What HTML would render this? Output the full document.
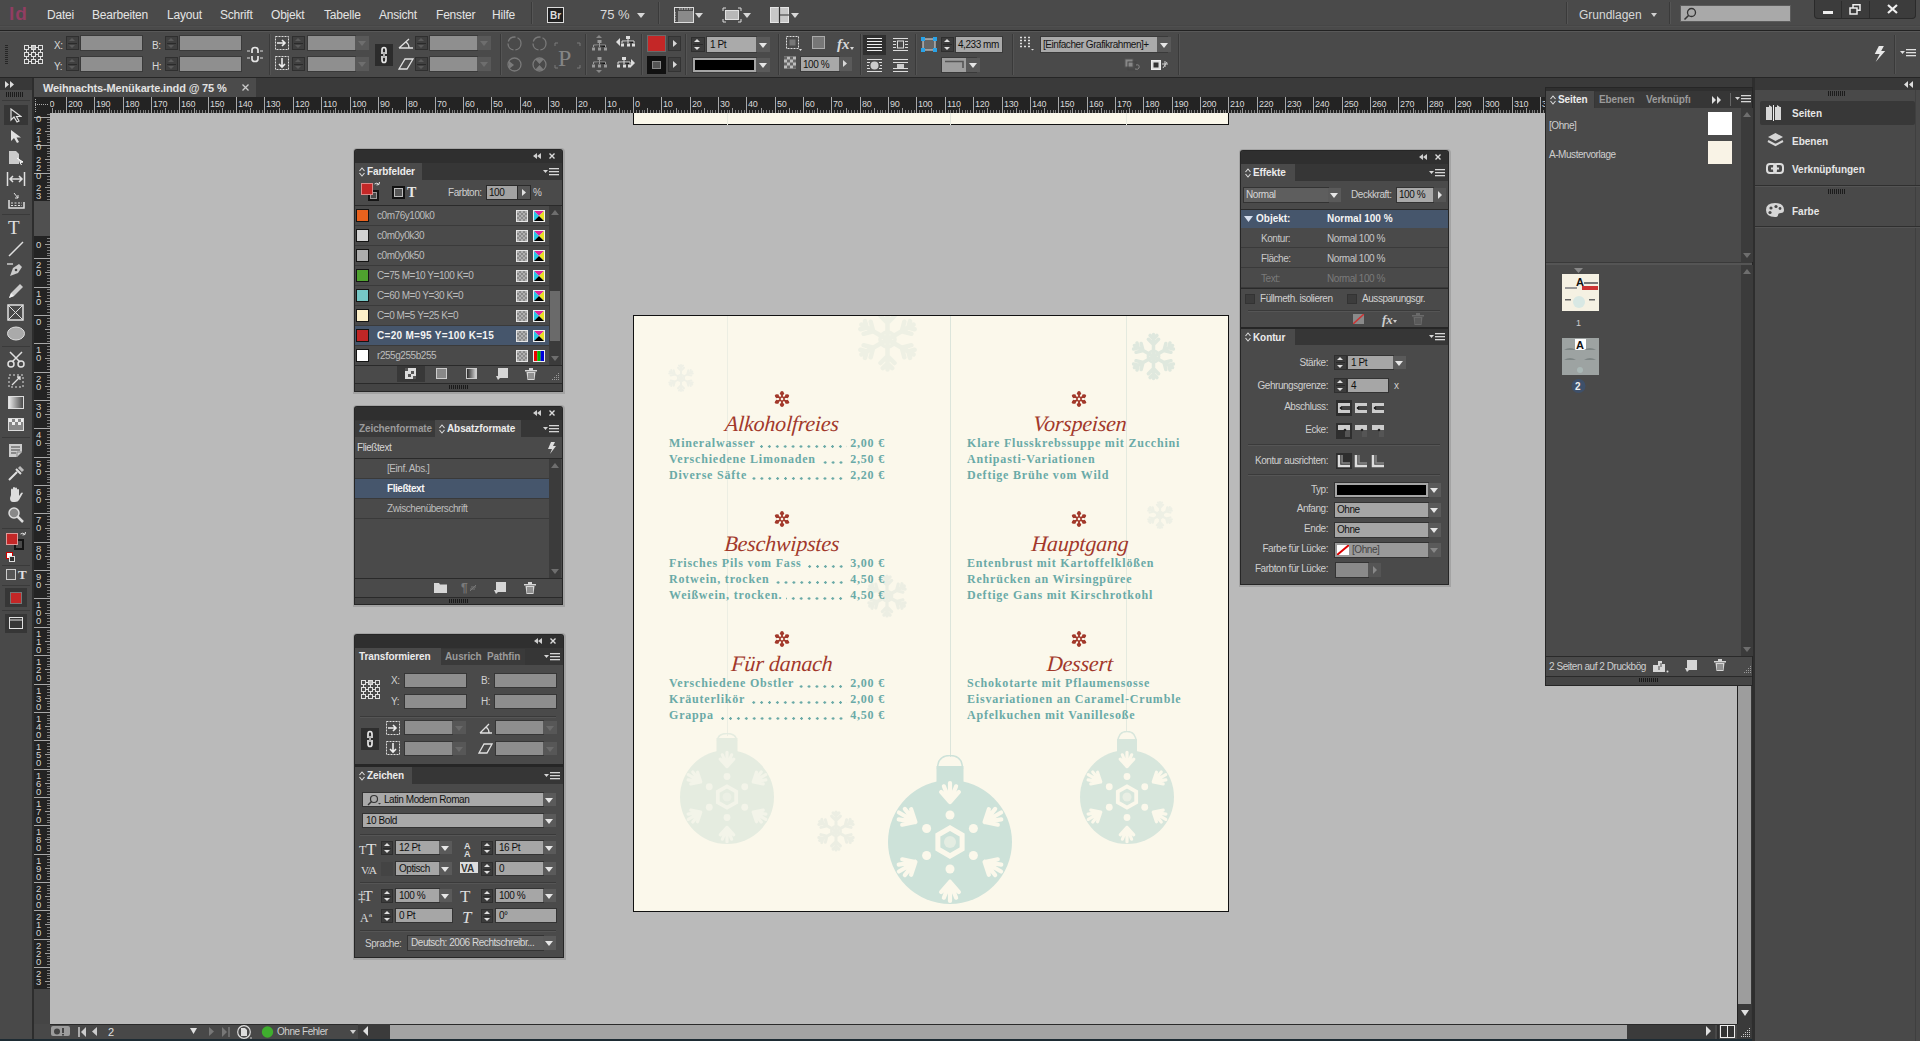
<!DOCTYPE html>
<html><head><meta charset="utf-8">
<style>
*{margin:0;padding:0;box-sizing:border-box}
html,body{width:1920px;height:1041px;overflow:hidden;background:#494949;font-family:"Liberation Sans",sans-serif;color:#d6d6d6;position:relative}
.a{position:absolute;display:block}
.t{position:absolute;white-space:nowrap;line-height:1}
</style></head><body>
<div class="a" style="left:0px;top:0px;width:1920px;height:30px;background:#4a4a4a;"></div>
<div class="a" style="left:0px;top:25px;width:1920px;height:1px;background:#464646;"></div>
<div class="a" style="left:0px;top:26px;width:1920px;height:1px;background:#4f4f4f;"></div>
<div class="a" style="left:0px;top:30px;width:1920px;height:1px;background:#222222;"></div>
<div class="a" style="left:0px;top:31px;width:1920px;height:1px;background:#585858;"></div>
<span class="t" style="left:9px;top:3.85px;font-size:19px;color:#9e3c67;font-weight:bold;letter-spacing:1px;opacity:.85">Id</span>
<span class="t" style="left:47px;top:9.3px;font-size:12px;color:#e4e4e4;font-weight:normal;letter-spacing:-0.2px">Datei</span>
<span class="t" style="left:92px;top:9.3px;font-size:12px;color:#e4e4e4;font-weight:normal;letter-spacing:-0.2px">Bearbeiten</span>
<span class="t" style="left:167px;top:9.3px;font-size:12px;color:#e4e4e4;font-weight:normal;letter-spacing:-0.2px">Layout</span>
<span class="t" style="left:220px;top:9.3px;font-size:12px;color:#e4e4e4;font-weight:normal;letter-spacing:-0.2px">Schrift</span>
<span class="t" style="left:271px;top:9.3px;font-size:12px;color:#e4e4e4;font-weight:normal;letter-spacing:-0.2px">Objekt</span>
<span class="t" style="left:324px;top:9.3px;font-size:12px;color:#e4e4e4;font-weight:normal;letter-spacing:-0.2px">Tabelle</span>
<span class="t" style="left:379px;top:9.3px;font-size:12px;color:#e4e4e4;font-weight:normal;letter-spacing:-0.2px">Ansicht</span>
<span class="t" style="left:436px;top:9.3px;font-size:12px;color:#e4e4e4;font-weight:normal;letter-spacing:-0.2px">Fenster</span>
<span class="t" style="left:492px;top:9.3px;font-size:12px;color:#e4e4e4;font-weight:normal;letter-spacing:-0.2px">Hilfe</span>
<div class="a" style="left:531px;top:2px;width:1px;height:22px;background:#3a3a3a;"></div>
<div class="a" style="left:532px;top:2px;width:1px;height:22px;background:#555;"></div>
<div class="a" style="left:547px;top:7px;width:17px;height:16px;background:#dcdcdc;"></div>
<div class="a" style="left:548px;top:8px;width:15px;height:14px;background:#202020;"></div>
<span class="t" style="left:550px;top:11.0px;font-size:10px;color:#dddddd;font-weight:bold;">Br</span>
<span class="t" style="left:600px;top:8.45px;font-size:13px;color:#dadada;font-weight:normal;">75 %</span>
<svg class="a" style="left:637px;top:13px;" width="8" height="5" viewBox="0 0 8 5"><path d="M0 0H8L4.0 5Z" fill="#d8d8d8"/></svg>
<div class="a" style="left:658px;top:2px;width:1px;height:22px;background:#3a3a3a;"></div>
<div class="a" style="left:659px;top:2px;width:1px;height:22px;background:#555;"></div>
<svg class="a" style="left:674px;top:7px;" width="20" height="16" viewBox="0 0 20 16"><rect x="0.5" y="0.5" width="19" height="15" fill="none" stroke="#ddd"/><rect x="4" y="4" width="15" height="11" fill="#8a8a8a"/><path d="M5 2H18M1 5V14" stroke="#ddd" stroke-dasharray="1.5 1"/></svg>
<svg class="a" style="left:695px;top:13px;" width="8" height="5" viewBox="0 0 8 5"><path d="M0 0H8L4.0 5Z" fill="#d8d8d8"/></svg>
<svg class="a" style="left:722px;top:7px;" width="20" height="16" viewBox="0 0 20 16"><path d="M1 4V1H4M16 1H19V4M19 12V15H16M4 15H1V12" stroke="#ddd" fill="none"/><rect x="3.5" y="3.5" width="13" height="9" fill="#b8b8b8" stroke="#e0e0e0"/></svg>
<svg class="a" style="left:743px;top:13px;" width="8" height="5" viewBox="0 0 8 5"><path d="M0 0H8L4.0 5Z" fill="#d8d8d8"/></svg>
<svg class="a" style="left:770px;top:7px;" width="19" height="16" viewBox="0 0 19 16"><rect x="0.5" y="0.5" width="18" height="15" fill="#c8c8c8" stroke="#e6e6e6"/><path d="M9.5 0V16M9.5 8H19" stroke="#333" stroke-width="1.2"/></svg>
<svg class="a" style="left:791px;top:13px;" width="8" height="5" viewBox="0 0 8 5"><path d="M0 0H8L4.0 5Z" fill="#d8d8d8"/></svg>
<div class="a" style="left:1566px;top:2px;width:1px;height:22px;background:#3a3a3a;"></div>
<div class="a" style="left:1567px;top:2px;width:1px;height:22px;background:#555;"></div>
<span class="t" style="left:1579px;top:8.8px;font-size:12px;color:#d8d8d8;font-weight:normal;">Grundlagen</span>
<svg class="a" style="left:1651px;top:13px;" width="6" height="4" viewBox="0 0 6 4"><path d="M0 0H6L3.0 4Z" fill="#d0d0d0"/></svg>
<div class="a" style="left:1669px;top:2px;width:1px;height:22px;background:#3a3a3a;"></div>
<div class="a" style="left:1670px;top:2px;width:1px;height:22px;background:#555;"></div>
<div class="a" style="left:1680px;top:5px;width:111px;height:17px;background:#a9a9a9;border:1px solid #5c5c5c"></div>
<svg class="a" style="left:1683px;top:7px;" width="14" height="14" viewBox="0 0 14 14"><circle cx="8.5" cy="5.5" r="4" fill="none" stroke="#333" stroke-width="1.3"/><path d="M5.5 8.5L1.5 12.5" stroke="#333" stroke-width="1.6"/></svg>
<div class="a" style="left:1814px;top:0px;width:102px;height:19px;background:#3c3c3c;border:1px solid #2a2a2a;border-top:none;border-radius:0 0 4px 4px"></div>
<div class="a" style="left:1841px;top:1px;width:1px;height:17px;background:#2c2c2c;"></div>
<div class="a" style="left:1869px;top:1px;width:1px;height:17px;background:#2c2c2c;"></div>
<div class="a" style="left:1823px;top:11px;width:10px;height:3px;background:#eeeeee;"></div>
<svg class="a" style="left:1849px;top:4px;" width="12" height="11" viewBox="0 0 12 11"><rect x="4" y="0.75" width="7" height="5.5" fill="none" stroke="#eee" stroke-width="1.5"/><rect x="1" y="4" width="7" height="6" fill="#3c3c3c" stroke="#eee" stroke-width="1.5"/></svg>
<svg class="a" style="left:1887px;top:4px;" width="11" height="10" viewBox="0 0 11 10"><path d="M1 1L10 9M10 1L1 9" stroke="#f0f0f0" stroke-width="2.2"/></svg>
<div class="a" style="left:0px;top:32px;width:1920px;height:45px;background:#4a4a4a;"></div>
<div class="a" style="left:0px;top:77px;width:1920px;height:1px;background:#262626;"></div>
<div class="a" style="left:5px;top:45px;width:3px;height:1px;background:#262626;"></div>
<div class="a" style="left:5px;top:47px;width:3px;height:1px;background:#262626;"></div>
<div class="a" style="left:5px;top:49px;width:3px;height:1px;background:#262626;"></div>
<div class="a" style="left:5px;top:51px;width:3px;height:1px;background:#262626;"></div>
<div class="a" style="left:5px;top:53px;width:3px;height:1px;background:#262626;"></div>
<div class="a" style="left:5px;top:55px;width:3px;height:1px;background:#262626;"></div>
<div class="a" style="left:5px;top:57px;width:3px;height:1px;background:#262626;"></div>
<div class="a" style="left:5px;top:59px;width:3px;height:1px;background:#262626;"></div>
<div class="a" style="left:5px;top:61px;width:3px;height:1px;background:#262626;"></div>
<div class="a" style="left:5px;top:63px;width:3px;height:1px;background:#262626;"></div>
<svg class="a" style="left:23px;top:44px;" width="22" height="22" viewBox="0 0 22 22"><rect x="1.5" y="1.5" width="4" height="4" fill="none" stroke="#e0e0e0"/><rect x="8.5" y="1.5" width="4" height="4" fill="#bbb" stroke="#e0e0e0"/><rect x="15.5" y="1.5" width="4" height="4" fill="none" stroke="#e0e0e0"/><rect x="1.5" y="8.5" width="4" height="4" fill="none" stroke="#e0e0e0"/><rect x="8.5" y="8.5" width="4" height="4" fill="none" stroke="#e0e0e0"/><rect x="15.5" y="8.5" width="4" height="4" fill="none" stroke="#e0e0e0"/><rect x="1.5" y="15.5" width="4" height="4" fill="none" stroke="#e0e0e0"/><rect x="8.5" y="15.5" width="4" height="4" fill="none" stroke="#e0e0e0"/><rect x="15.5" y="15.5" width="4" height="4" fill="none" stroke="#e0e0e0"/><path d="M6 3.5H8M13 3.5H15M6 10.5H8M13 10.5H15M6 17.5H8M13 17.5H15M3.5 6V8M3.5 13V15M10.5 6V8M10.5 13V15M17.5 6V8M17.5 13V15" stroke="#e0e0e0"/></svg>
<span class="t" style="left:54px;top:40.5px;font-size:10px;color:#d8d8d8;font-weight:normal;letter-spacing:-0.45px;">X:</span>
<span class="t" style="left:54px;top:61.5px;font-size:10px;color:#d8d8d8;font-weight:normal;letter-spacing:-0.45px;">Y:</span>
<span class="t" style="left:152px;top:40.5px;font-size:10px;color:#d8d8d8;font-weight:normal;letter-spacing:-0.45px;">B:</span>
<span class="t" style="left:152px;top:61.5px;font-size:10px;color:#d8d8d8;font-weight:normal;letter-spacing:-0.45px;">H:</span>
<div class="a" style="left:66px;top:36px;width:13px;height:14px;background:#404040;border:1px solid #2f2f2f"></div>
<svg class="a" style="left:69px;top:38px;" width="6" height="3" viewBox="0 0 6 3"><path d="M0 3H6L3.0 0Z" fill="#5a5a5a"/></svg>
<svg class="a" style="left:69px;top:45px;" width="6" height="3" viewBox="0 0 6 3"><path d="M0 0H6L3.0 3Z" fill="#5a5a5a"/></svg>
<div class="a" style="left:68px;top:43px;width:9px;height:1px;background:#2a2a2a;"></div>
<div class="a" style="left:80px;top:35px;width:63px;height:16px;background:#3a3a3a;"></div>
<div class="a" style="left:81px;top:36px;width:61px;height:14px;background:#8f8f8f;"></div>
<div class="a" style="left:66px;top:57px;width:13px;height:14px;background:#404040;border:1px solid #2f2f2f"></div>
<svg class="a" style="left:69px;top:59px;" width="6" height="3" viewBox="0 0 6 3"><path d="M0 3H6L3.0 0Z" fill="#5a5a5a"/></svg>
<svg class="a" style="left:69px;top:66px;" width="6" height="3" viewBox="0 0 6 3"><path d="M0 0H6L3.0 3Z" fill="#5a5a5a"/></svg>
<div class="a" style="left:68px;top:64px;width:9px;height:1px;background:#2a2a2a;"></div>
<div class="a" style="left:80px;top:56px;width:63px;height:16px;background:#3a3a3a;"></div>
<div class="a" style="left:81px;top:57px;width:61px;height:14px;background:#8f8f8f;"></div>
<div class="a" style="left:165px;top:36px;width:13px;height:14px;background:#404040;border:1px solid #2f2f2f"></div>
<svg class="a" style="left:168px;top:38px;" width="6" height="3" viewBox="0 0 6 3"><path d="M0 3H6L3.0 0Z" fill="#5a5a5a"/></svg>
<svg class="a" style="left:168px;top:45px;" width="6" height="3" viewBox="0 0 6 3"><path d="M0 0H6L3.0 3Z" fill="#5a5a5a"/></svg>
<div class="a" style="left:167px;top:43px;width:9px;height:1px;background:#2a2a2a;"></div>
<div class="a" style="left:179px;top:35px;width:63px;height:16px;background:#3a3a3a;"></div>
<div class="a" style="left:180px;top:36px;width:61px;height:14px;background:#8f8f8f;"></div>
<div class="a" style="left:165px;top:57px;width:13px;height:14px;background:#404040;border:1px solid #2f2f2f"></div>
<svg class="a" style="left:168px;top:59px;" width="6" height="3" viewBox="0 0 6 3"><path d="M0 3H6L3.0 0Z" fill="#5a5a5a"/></svg>
<svg class="a" style="left:168px;top:66px;" width="6" height="3" viewBox="0 0 6 3"><path d="M0 0H6L3.0 3Z" fill="#5a5a5a"/></svg>
<div class="a" style="left:167px;top:64px;width:9px;height:1px;background:#2a2a2a;"></div>
<div class="a" style="left:179px;top:56px;width:63px;height:16px;background:#3a3a3a;"></div>
<div class="a" style="left:180px;top:57px;width:61px;height:14px;background:#8f8f8f;"></div>
<svg class="a" style="left:247px;top:46px;" width="16" height="17" viewBox="0 0 16 17"><path d="M5 7V4Q5 1.5 8 1.5T11 4V7M5 10V13Q5 15.5 8 15.5T11 13V10" fill="none" stroke="#e6e6e6" stroke-width="1.7"/><path d="M0 5H3M13 5H16M0 12H3M13 12H16" stroke="#ddd"/></svg>
<div class="a" style="left:269px;top:34px;width:1px;height:41px;background:#3a3a3a;"></div>
<div class="a" style="left:270px;top:34px;width:1px;height:41px;background:#545454;"></div>
<svg class="a" style="left:275px;top:36px;" width="16" height="15" viewBox="0 0 16 15"><rect x="0.5" y="0.5" width="13" height="13" fill="none" stroke="#ddd" stroke-dasharray="2 1"/><path d="M2 7H10M7 4L10 7L7 10" stroke="#eee" stroke-width="1.6" fill="none"/></svg>
<svg class="a" style="left:275px;top:56px;" width="16" height="15" viewBox="0 0 16 15"><rect x="0.5" y="0.5" width="13" height="13" fill="none" stroke="#ddd" stroke-dasharray="2 1"/><path d="M7 2V11M4 8L7 11L10 8" stroke="#eee" stroke-width="1.6" fill="none"/></svg>
<div class="a" style="left:292px;top:36px;width:13px;height:14px;background:#404040;border:1px solid #2f2f2f"></div>
<svg class="a" style="left:295px;top:38px;" width="6" height="3" viewBox="0 0 6 3"><path d="M0 3H6L3.0 0Z" fill="#5a5a5a"/></svg>
<svg class="a" style="left:295px;top:45px;" width="6" height="3" viewBox="0 0 6 3"><path d="M0 0H6L3.0 3Z" fill="#5a5a5a"/></svg>
<div class="a" style="left:294px;top:43px;width:9px;height:1px;background:#2a2a2a;"></div>
<div class="a" style="left:307px;top:35px;width:49px;height:16px;background:#3a3a3a;"></div>
<div class="a" style="left:308px;top:36px;width:47px;height:14px;background:#8f8f8f;"></div>
<div class="a" style="left:355px;top:36px;width:14px;height:14px;background:#595959;"></div>
<svg class="a" style="left:358px;top:41px;" width="8" height="5" viewBox="0 0 8 5"><path d="M0 0H8L4.0 5Z" fill="#6e6e6e"/></svg>
<div class="a" style="left:292px;top:57px;width:13px;height:14px;background:#404040;border:1px solid #2f2f2f"></div>
<svg class="a" style="left:295px;top:59px;" width="6" height="3" viewBox="0 0 6 3"><path d="M0 3H6L3.0 0Z" fill="#5a5a5a"/></svg>
<svg class="a" style="left:295px;top:66px;" width="6" height="3" viewBox="0 0 6 3"><path d="M0 0H6L3.0 3Z" fill="#5a5a5a"/></svg>
<div class="a" style="left:294px;top:64px;width:9px;height:1px;background:#2a2a2a;"></div>
<div class="a" style="left:307px;top:56px;width:49px;height:16px;background:#3a3a3a;"></div>
<div class="a" style="left:308px;top:57px;width:47px;height:14px;background:#8f8f8f;"></div>
<div class="a" style="left:355px;top:57px;width:14px;height:14px;background:#595959;"></div>
<svg class="a" style="left:358px;top:62px;" width="8" height="5" viewBox="0 0 8 5"><path d="M0 0H8L4.0 5Z" fill="#6e6e6e"/></svg>
<div class="a" style="left:375px;top:44px;width:18px;height:22px;background:#2c2c2c;"></div>
<svg class="a" style="left:379px;top:46px;" width="10" height="18" viewBox="0 0 10 18"><path d="M3 8V4Q3 1.5 5 1.5T7 4V8M3 10V14Q3 16.5 5 16.5T7 14V10" fill="none" stroke="#e6e6e6" stroke-width="1.7"/><path d="M5 6V12" stroke="#e6e6e6" stroke-width="1.4"/></svg>
<svg class="a" style="left:398px;top:37px;" width="16" height="12" viewBox="0 0 16 12"><path d="M1 11H15M1 11L11 2M8 5Q11 7 11 11" stroke="#e0e0e0" fill="none" stroke-width="1.3"/></svg>
<svg class="a" style="left:398px;top:58px;" width="16" height="12" viewBox="0 0 16 12"><path d="M1 11H9L15 1H7Z" stroke="#e0e0e0" fill="none" stroke-width="1.3"/></svg>
<div class="a" style="left:415px;top:36px;width:13px;height:14px;background:#404040;border:1px solid #2f2f2f"></div>
<svg class="a" style="left:418px;top:38px;" width="6" height="3" viewBox="0 0 6 3"><path d="M0 3H6L3.0 0Z" fill="#5a5a5a"/></svg>
<svg class="a" style="left:418px;top:45px;" width="6" height="3" viewBox="0 0 6 3"><path d="M0 0H6L3.0 3Z" fill="#5a5a5a"/></svg>
<div class="a" style="left:417px;top:43px;width:9px;height:1px;background:#2a2a2a;"></div>
<div class="a" style="left:429px;top:35px;width:49px;height:16px;background:#3a3a3a;"></div>
<div class="a" style="left:430px;top:36px;width:47px;height:14px;background:#8f8f8f;"></div>
<div class="a" style="left:477px;top:36px;width:14px;height:14px;background:#595959;"></div>
<svg class="a" style="left:480px;top:41px;" width="8" height="5" viewBox="0 0 8 5"><path d="M0 0H8L4.0 5Z" fill="#6e6e6e"/></svg>
<div class="a" style="left:415px;top:57px;width:13px;height:14px;background:#404040;border:1px solid #2f2f2f"></div>
<svg class="a" style="left:418px;top:59px;" width="6" height="3" viewBox="0 0 6 3"><path d="M0 3H6L3.0 0Z" fill="#5a5a5a"/></svg>
<svg class="a" style="left:418px;top:66px;" width="6" height="3" viewBox="0 0 6 3"><path d="M0 0H6L3.0 3Z" fill="#5a5a5a"/></svg>
<div class="a" style="left:417px;top:64px;width:9px;height:1px;background:#2a2a2a;"></div>
<div class="a" style="left:429px;top:56px;width:49px;height:16px;background:#3a3a3a;"></div>
<div class="a" style="left:430px;top:57px;width:47px;height:14px;background:#8f8f8f;"></div>
<div class="a" style="left:477px;top:57px;width:14px;height:14px;background:#595959;"></div>
<svg class="a" style="left:480px;top:62px;" width="8" height="5" viewBox="0 0 8 5"><path d="M0 0H8L4.0 5Z" fill="#6e6e6e"/></svg>
<div class="a" style="left:500px;top:34px;width:1px;height:41px;background:#3a3a3a;"></div>
<div class="a" style="left:501px;top:34px;width:1px;height:41px;background:#545454;"></div>
<svg class="a" style="left:506px;top:35px;" width="17" height="17" viewBox="0 0 17 17"><circle cx="8.5" cy="8.5" r="6.5" fill="none" stroke="#7a7a7a" stroke-width="1.3" stroke-dasharray="9 2"/></svg>
<svg class="a" style="left:531px;top:35px;" width="17" height="17" viewBox="0 0 17 17"><circle cx="8.5" cy="8.5" r="6.5" fill="none" stroke="#7a7a7a" stroke-width="1.3" stroke-dasharray="9 2"/></svg>
<svg class="a" style="left:506px;top:56px;" width="17" height="17" viewBox="0 0 17 17"><circle cx="8.5" cy="8.5" r="6.5" fill="none" stroke="#7a7a7a" stroke-width="1.3"/><path d="M3 5L8 9L3 13Z" fill="#7a7a7a"/></svg>
<svg class="a" style="left:531px;top:56px;" width="17" height="17" viewBox="0 0 17 17"><circle cx="8.5" cy="8.5" r="6.5" fill="none" stroke="#7a7a7a" stroke-width="1.3"/><path d="M4 3L13 3L8.5 8Z M4 14L13 14L8.5 9Z" fill="#7a7a7a"/></svg>
<svg class="a" style="left:554px;top:42px;" width="27" height="27" viewBox="0 0 27 27"><path d="M1 4V1H4M23 1H26V4M26 23V26H23M4 26H1V23" stroke="#7a7a7a" fill="none"/></svg>
<span class="t" style="left:558px;top:45.6px;font-size:24px;color:#858585;font-weight:normal;font-family:'Liberation Serif';">P</span>
<div class="a" style="left:585px;top:34px;width:1px;height:41px;background:#3a3a3a;"></div>
<div class="a" style="left:586px;top:34px;width:1px;height:41px;background:#545454;"></div>
<svg class="a" style="left:591px;top:35px;" width="17" height="17" viewBox="0 0 17 17"><path d="M8 0L5 3H11Z" fill="#888"/><rect x="6.5" y="5" width="4" height="3" fill="#999"/><path d="M8.5 8V10M2.5 10H14.5V12M2.5 10V12M8.5 10V12" stroke="#999"/><rect x="1" y="12.5" width="3" height="3" fill="#999"/><rect x="7" y="12.5" width="3" height="3" fill="#999"/><rect x="13" y="12.5" width="3" height="3" fill="#999"/></svg>
<svg class="a" style="left:591px;top:56px;" width="17" height="17" viewBox="0 0 17 17"><rect x="6.5" y="1" width="4" height="3" fill="#999"/><path d="M8.5 4V6M2.5 6H14.5V8M2.5 6V8M8.5 6V8" stroke="#999"/><rect x="1" y="8.5" width="3" height="3" fill="#999"/><rect x="7" y="8.5" width="3" height="3" fill="#999"/><rect x="13" y="8.5" width="3" height="3" fill="#999"/><path d="M8 17L5 14H11Z" fill="#888"/></svg>
<svg class="a" style="left:616px;top:35px;" width="19" height="14" viewBox="0 0 19 14"><path d="M0 7L4 3V11Z" fill="#ddd"/><rect x="10" y="1" width="4" height="3" fill="#ddd"/><path d="M12 4V6M6 6H18V8M6 6V8M12 6V8" stroke="#ddd"/><rect x="5" y="8.5" width="3" height="3" fill="#ddd"/><rect x="11" y="8.5" width="3" height="3" fill="#ddd"/><rect x="16" y="8.5" width="3" height="3" fill="#ddd"/></svg>
<svg class="a" style="left:616px;top:56px;" width="19" height="14" viewBox="0 0 19 14"><path d="M19 7L15 3V11Z" fill="#ddd"/><rect x="6" y="1" width="4" height="3" fill="#ddd"/><path d="M8 4V6M2 6H14V8M2 6V8M8 6V8" stroke="#ddd"/><rect x="1" y="8.5" width="3" height="3" fill="#ddd"/><rect x="7" y="8.5" width="3" height="3" fill="#ddd"/><rect x="12" y="8.5" width="3" height="3" fill="#ddd"/></svg>
<div class="a" style="left:641px;top:34px;width:1px;height:41px;background:#3a3a3a;"></div>
<div class="a" style="left:642px;top:34px;width:1px;height:41px;background:#545454;"></div>
<div class="a" style="left:647px;top:35px;width:19px;height:17px;background:#6a6a6a;"></div>
<div class="a" style="left:648px;top:36px;width:17px;height:15px;background:#c42727;"></div>
<div class="a" style="left:668px;top:36px;width:13px;height:15px;background:#404040;border:1px solid #333"></div>
<svg class="a" style="left:673px;top:40px;" width="4" height="7" viewBox="0 0 4 7"><path d="M0 0V7L4 3.5Z" fill="#d8d8d8"/></svg>
<div class="a" style="left:647px;top:56px;width:19px;height:18px;background:#111111;"></div>
<div class="a" style="left:652px;top:61px;width:9px;height:8px;background:#555;border:1px solid #888"></div>
<div class="a" style="left:668px;top:57px;width:13px;height:15px;background:#404040;border:1px solid #333"></div>
<svg class="a" style="left:673px;top:61px;" width="4" height="7" viewBox="0 0 4 7"><path d="M0 0V7L4 3.5Z" fill="#d8d8d8"/></svg>
<div class="a" style="left:685px;top:34px;width:1px;height:41px;background:#3a3a3a;"></div>
<div class="a" style="left:686px;top:34px;width:1px;height:41px;background:#545454;"></div>
<div class="a" style="left:691px;top:37px;width:14px;height:15px;background:#3c3c3c;border:1px solid #2f2f2f"></div>
<svg class="a" style="left:694px;top:39px;" width="6" height="3" viewBox="0 0 6 3"><path d="M0 3H6L3.0 0Z" fill="#e0e0e0"/></svg>
<svg class="a" style="left:694px;top:47px;" width="6" height="3" viewBox="0 0 6 3"><path d="M0 0H6L3.0 3Z" fill="#e0e0e0"/></svg>
<div class="a" style="left:693px;top:44px;width:10px;height:1px;background:#2a2a2a;"></div>
<div class="a" style="left:706px;top:36px;width:51px;height:17px;background:#3a3a3a;"></div>
<div class="a" style="left:707px;top:37px;width:49px;height:15px;background:#aaaaaa;"></div>
<span class="t" style="left:710px;top:39.5px;font-size:10px;color:#111;font-weight:normal;letter-spacing:-0.45px;">1 Pt</span>
<div class="a" style="left:756px;top:37px;width:14px;height:15px;background:#5a5a5a;"></div>
<svg class="a" style="left:759px;top:43px;" width="8" height="5" viewBox="0 0 8 5"><path d="M0 0H8L4.0 5Z" fill="#e6e6e6"/></svg>
<div class="a" style="left:692px;top:57px;width:65px;height:16px;background:#3a3a3a;"></div>
<div class="a" style="left:693px;top:58px;width:63px;height:14px;background:#a6a6a6;"></div>
<div class="a" style="left:695px;top:60px;width:59px;height:10px;background:#000;"></div>
<div class="a" style="left:756px;top:58px;width:14px;height:14px;background:#5a5a5a;"></div>
<svg class="a" style="left:759px;top:63px;" width="8" height="5" viewBox="0 0 8 5"><path d="M0 0H8L4.0 5Z" fill="#e6e6e6"/></svg>
<div class="a" style="left:778px;top:34px;width:1px;height:41px;background:#3a3a3a;"></div>
<div class="a" style="left:779px;top:34px;width:1px;height:41px;background:#545454;"></div>
<svg class="a" style="left:785px;top:35px;" width="18" height="17" viewBox="0 0 18 17"><rect x="1.5" y="1.5" width="12" height="12" fill="none" stroke="#ddd" stroke-dasharray="2 1"/><rect x="4.5" y="4.5" width="6" height="6" fill="#777"/><path d="M14 14H17L15.5 16Z" fill="#ddd"/></svg>
<svg class="a" style="left:811px;top:35px;" width="16" height="16" viewBox="0 0 16 16"><rect x="1.5" y="1.5" width="12" height="12" fill="#777" stroke="#aaa"/></svg>
<span class="t" style="left:837px;top:37.25px;font-size:15px;color:#d8d8d8;font-weight:bold;font-family:'Liberation Serif';font-style:italic">fx</span>
<svg class="a" style="left:850px;top:47px;" width="4" height="3" viewBox="0 0 4 3"><path d="M0 0H4L2.0 3Z" fill="#d8d8d8"/></svg>
<svg class="a" style="left:784px;top:56px;" width="13" height="14" viewBox="0 0 13 14"><rect x="0" y="0.5" width="12" height="12" fill="#bbb"/><path d="M0 0.5h3v3h-3zM6 0.5h3v3h-3zM3 3.5h3v3h-3zM9 3.5h3v3h-3zM0 6.5h3v3h-3zM6 6.5h3v3h-3zM3 9.5h3v3h-3zM9 9.5h3v3h-3z" fill="#666"/></svg>
<div class="a" style="left:800px;top:56px;width:40px;height:16px;background:#3a3a3a;"></div>
<div class="a" style="left:801px;top:57px;width:38px;height:14px;background:#a8a8a8;"></div>
<span class="t" style="left:803px;top:59.5px;font-size:10px;color:#111;font-weight:normal;letter-spacing:-0.45px;">100 %</span>
<div class="a" style="left:839px;top:57px;width:13px;height:14px;background:#5a5a5a;"></div>
<svg class="a" style="left:843px;top:60px;" width="4" height="7" viewBox="0 0 4 7"><path d="M0 0V7L4 3.5Z" fill="#d8d8d8"/></svg>
<div class="a" style="left:860px;top:34px;width:1px;height:41px;background:#3a3a3a;"></div>
<div class="a" style="left:861px;top:34px;width:1px;height:41px;background:#545454;"></div>
<div class="a" style="left:863px;top:35px;width:23px;height:20px;background:#2f2f2f;"></div>
<svg class="a" style="left:866px;top:37px;" width="17" height="16" viewBox="0 0 17 16"><path d="M1 1.5H16M1 4.5H16M1 7.5H16M1 10.5H16M1 13.5H16" stroke="#eee" stroke-width="1.2"/></svg>
<svg class="a" style="left:892px;top:37px;" width="17" height="16" viewBox="0 0 17 16"><path d="M1 1.5H16M1 13.5H16M1 4.5H4M13 4.5H16M1 7.5H4M13 7.5H16M1 10.5H4M13 10.5H16" stroke="#ddd" stroke-width="1.2"/><rect x="5.5" y="4" width="6" height="7" fill="none" stroke="#ddd"/></svg>
<svg class="a" style="left:866px;top:58px;" width="17" height="16" viewBox="0 0 17 16"><path d="M1 1.5H16M1 13.5H16M1 4.5H4M13 4.5H16M1 7.5H3M14 7.5H16M1 10.5H4M13 10.5H16" stroke="#ddd" stroke-width="1.2"/><circle cx="8.5" cy="7.5" r="4" fill="#ccc"/></svg>
<svg class="a" style="left:892px;top:58px;" width="17" height="16" viewBox="0 0 17 16"><path d="M1 1.5H16M1 13.5H16M1 4.5H16M1 10.5H16" stroke="#ddd" stroke-width="1.2"/><rect x="5" y="6" width="7" height="4" fill="#ccc"/></svg>
<div class="a" style="left:915px;top:34px;width:1px;height:41px;background:#3a3a3a;"></div>
<div class="a" style="left:916px;top:34px;width:1px;height:41px;background:#545454;"></div>
<svg class="a" style="left:920px;top:36px;" width="18" height="17" viewBox="0 0 18 17"><rect x="3" y="3" width="12" height="11" fill="#666" stroke="#ddd"/><rect x="1" y="1" width="4" height="4" fill="#29a3e8"/><rect x="13" y="1" width="4" height="4" fill="#29a3e8"/><rect x="1" y="12" width="4" height="4" fill="#29a3e8"/><rect x="13" y="12" width="4" height="4" fill="#29a3e8"/></svg>
<div class="a" style="left:941px;top:37px;width:13px;height:15px;background:#3c3c3c;border:1px solid #2f2f2f"></div>
<svg class="a" style="left:944px;top:39px;" width="6" height="3" viewBox="0 0 6 3"><path d="M0 3H6L3.0 0Z" fill="#e0e0e0"/></svg>
<svg class="a" style="left:944px;top:47px;" width="6" height="3" viewBox="0 0 6 3"><path d="M0 0H6L3.0 3Z" fill="#e0e0e0"/></svg>
<div class="a" style="left:943px;top:44px;width:9px;height:1px;background:#2a2a2a;"></div>
<div class="a" style="left:955px;top:36px;width:48px;height:17px;background:#3a3a3a;"></div>
<div class="a" style="left:956px;top:37px;width:46px;height:15px;background:#aaaaaa;"></div>
<span class="t" style="left:958px;top:39.5px;font-size:10px;color:#111;font-weight:normal;letter-spacing:-0.45px;">4,233 mm</span>
<div class="a" style="left:941px;top:57px;width:36px;height:16px;background:#3a3a3a;"></div>
<div class="a" style="left:942px;top:58px;width:34px;height:14px;background:#9e9e9e;"></div>
<svg class="a" style="left:944px;top:60px;" width="22" height="9" viewBox="0 0 22 9"><path d="M1 1.5H19V8" stroke="#555" stroke-width="1.6" fill="none"/></svg>
<div class="a" style="left:966px;top:58px;width:14px;height:14px;background:#595959;"></div>
<svg class="a" style="left:969px;top:63px;" width="8" height="5" viewBox="0 0 8 5"><path d="M0 0H8L4.0 5Z" fill="#e6e6e6"/></svg>
<div class="a" style="left:1012px;top:34px;width:1px;height:41px;background:#3a3a3a;"></div>
<div class="a" style="left:1013px;top:34px;width:1px;height:41px;background:#545454;"></div>
<svg class="a" style="left:1019px;top:36px;" width="15" height="15" viewBox="0 0 15 15"><path d="M1 1.5H3M5 1.5H7M9 1.5H11M1 4.5H3M5 4.5H7M9 4.5H11M1 7.5H3M1 10.5H3M5 10.5H7M9 10.5H11M9 7.5H11" stroke="#ddd" stroke-width="1.5"/><path d="M12 13H15L13.5 14.5Z" fill="#ddd"/></svg>
<div class="a" style="left:1040px;top:36px;width:128px;height:17px;background:#3a3a3a;"></div>
<div class="a" style="left:1041px;top:37px;width:126px;height:15px;background:#aaaaaa;"></div>
<span class="t" style="left:1043px;top:40.0px;font-size:10px;color:#151515;font-weight:normal;letter-spacing:-0.45px;">[Einfacher Grafikrahmen]+</span>
<div class="a" style="left:1157px;top:37px;width:14px;height:15px;background:#595959;"></div>
<svg class="a" style="left:1160px;top:43px;" width="8" height="5" viewBox="0 0 8 5"><path d="M0 0H8L4.0 5Z" fill="#e6e6e6"/></svg>
<svg class="a" style="left:1124px;top:58px;" width="18" height="14" viewBox="0 0 18 14"><rect x="1" y="1" width="8" height="8" fill="#888" stroke="#555"/><rect x="4" y="4" width="8" height="8" fill="none" stroke="#444"/><path d="M12 7Q16 6 15 10Q14 12 11 11" stroke="#888" fill="none"/></svg>
<svg class="a" style="left:1150px;top:58px;" width="20" height="14" viewBox="0 0 20 14"><rect x="1.5" y="2.5" width="9" height="9" fill="#ddd" stroke="#eee"/><rect x="3.5" y="4.5" width="5" height="5" fill="#333"/><path d="M12 6H18M15 3V9M13 10L17 4" stroke="#ccc"/></svg>
<div class="a" style="left:1178px;top:34px;width:1px;height:41px;background:#3a3a3a;"></div>
<div class="a" style="left:1179px;top:34px;width:1px;height:41px;background:#545454;"></div>
<svg class="a" style="left:1874px;top:45px;" width="14" height="18" viewBox="0 0 14 18"><path d="M5 1L2 9H7L4 17L12 6H8L10 1Z" fill="#e8e8e8" transform="skewX(-8)"/></svg>
<div class="a" style="left:1894px;top:35px;width:1px;height:39px;background:#3a3a3a;"></div>
<div class="a" style="left:1895px;top:35px;width:1px;height:39px;background:#545454;"></div>
<svg class="a" style="left:1900px;top:49px;" width="16" height="9" viewBox="0 0 16 9"><path d="M0 2H5L2.5 5Z" fill="#e0e0e0"/><rect x="6" y="0" width="10" height="1.3" fill="#e0e0e0"/><rect x="6" y="3" width="10" height="1.3" fill="#e0e0e0"/><rect x="6" y="6" width="10" height="1.3" fill="#e0e0e0"/></svg>
<div class="a" style="left:0px;top:78px;width:32px;height:963px;background:#494949;"></div>
<div class="a" style="left:0px;top:78px;width:32px;height:12px;background:#383838;"></div>
<svg class="a" style="left:5px;top:81px;" width="9" height="7" viewBox="0 0 9 7"><path d="M0 0L4 3.5L0 7ZM5 0L9 3.5L5 7Z" fill="#ddd"/></svg>
<div class="a" style="left:32px;top:78px;width:2px;height:963px;background:#2d2d2d;"></div>
<div class="a" style="left:6px;top:92px;width:1px;height:5px;background:#1c1c1c;"></div>
<div class="a" style="left:8px;top:92px;width:1px;height:5px;background:#1c1c1c;"></div>
<div class="a" style="left:10px;top:92px;width:1px;height:5px;background:#1c1c1c;"></div>
<div class="a" style="left:12px;top:92px;width:1px;height:5px;background:#1c1c1c;"></div>
<div class="a" style="left:14px;top:92px;width:1px;height:5px;background:#1c1c1c;"></div>
<div class="a" style="left:16px;top:92px;width:1px;height:5px;background:#1c1c1c;"></div>
<div class="a" style="left:18px;top:92px;width:1px;height:5px;background:#1c1c1c;"></div>
<div class="a" style="left:20px;top:92px;width:1px;height:5px;background:#1c1c1c;"></div>
<div class="a" style="left:22px;top:92px;width:1px;height:5px;background:#1c1c1c;"></div>
<div class="a" style="left:2px;top:100px;width:28px;height:1px;background:#3a3a3a;"></div>
<div class="a" style="left:4px;top:105px;width:24px;height:20px;background:#363636;"></div>
<svg class="a" style="left:10px;top:108px;" width="12" height="15" viewBox="0 0 12 15"><path d="M1 1V12L4 9L7 14L9 13L6.5 8.5H11Z" fill="none" stroke="#e0e0e0" stroke-width="1.2"/></svg>
<svg class="a" style="left:10px;top:129px;" width="12" height="15" viewBox="0 0 12 15"><path d="M1 1V12L4 9L7 14L9 13L6.5 8.5H11Z" fill="#e0e0e0"/></svg>
<svg class="a" style="left:8px;top:150px;" width="16" height="16" viewBox="0 0 16 16"><path d="M1 1H8L11 4V14H1Z" fill="#ccc"/><path d="M9 8L15 12L12 12.5L13.5 15" stroke="#fff" fill="#ddd"/></svg>
<svg class="a" style="left:6px;top:172px;" width="20" height="14" viewBox="0 0 20 14"><path d="M1.5 0V14M18.5 0V14M4 7H16M7 4L4 7L7 10M13 4L16 7L13 10" stroke="#e0e0e0" stroke-width="1.5" fill="none"/></svg>
<svg class="a" style="left:8px;top:192px;" width="17" height="17" viewBox="0 0 17 17"><path d="M1 8V16H16V10" stroke="#e0e0e0" stroke-width="1.5" fill="none"/><path d="M3 11H14M3 13.5H14" stroke="#e0e0e0" stroke-dasharray="2 1.5"/><path d="M6 1L10 6M10 3V6H7" stroke="#e0e0e0" fill="none"/></svg>
<div class="a" style="left:2px;top:214px;width:28px;height:1px;background:#3a3a3a;"></div>
<span class="t" style="left:8px;top:217.85px;font-size:19px;color:#e0e0e0;font-weight:normal;font-family:'Liberation Serif';">T</span>
<svg class="a" style="left:8px;top:241px;" width="16" height="16" viewBox="0 0 16 16"><path d="M1 15L15 1" stroke="#e0e0e0" stroke-width="1.5"/></svg>
<svg class="a" style="left:7px;top:260px;" width="19" height="18" viewBox="0 0 19 18"><path d="M3 16L6 8L12 4L15 7L11 13Z" fill="#ccc"/><path d="M0 4H6" stroke="#ccc" stroke-width="1.5"/><circle cx="9" cy="10" r="1.3" fill="#444"/></svg>
<svg class="a" style="left:7px;top:282px;" width="18" height="18" viewBox="0 0 18 18"><path d="M2 16L4 11L13 2L16 5L7 14Z" fill="#ccc"/><path d="M2 16L4 11L7 14Z" fill="#eee"/></svg>
<svg class="a" style="left:7px;top:304px;" width="17" height="17" viewBox="0 0 17 17"><rect x="1" y="1" width="15" height="15" fill="none" stroke="#e0e0e0" stroke-width="1.5"/><path d="M1 1L16 16M16 1L1 16" stroke="#e0e0e0"/></svg>
<svg class="a" style="left:6px;top:326px;" width="20" height="15" viewBox="0 0 20 15"><ellipse cx="10" cy="7.5" rx="8.5" ry="6.5" fill="#aaa" stroke="#ddd"/></svg>
<div class="a" style="left:2px;top:346px;width:28px;height:1px;background:#3a3a3a;"></div>
<svg class="a" style="left:7px;top:351px;" width="18" height="17" viewBox="0 0 18 17"><circle cx="4" cy="13" r="3" fill="none" stroke="#e0e0e0" stroke-width="1.5"/><circle cx="14" cy="13" r="3" fill="none" stroke="#e0e0e0" stroke-width="1.5"/><path d="M5 11L15 1M13 11L3 1" stroke="#e0e0e0" stroke-width="1.5"/></svg>
<svg class="a" style="left:7px;top:373px;" width="18" height="16" viewBox="0 0 18 16"><path d="M2 2H16V14H2Z" stroke="#e0e0e0" stroke-dasharray="2 2" fill="none"/><path d="M5 12L13 4M10 4H13V7" stroke="#e0e0e0" stroke-width="1.3" fill="none"/></svg>
<svg class="a" style="left:8px;top:396px;" width="16" height="13" viewBox="0 0 16 13"><defs><linearGradient id="gg"><stop offset="0" stop-color="#eee"/><stop offset="1" stop-color="#444"/></linearGradient></defs><rect x="0.5" y="0.5" width="15" height="12" fill="url(#gg)" stroke="#ddd"/></svg>
<svg class="a" style="left:8px;top:418px;" width="16" height="13" viewBox="0 0 16 13"><rect x="0.5" y="0.5" width="15" height="12" fill="#888" stroke="#ddd"/><path d="M1 1h3v3h-3zM7 1h3v3h-3zM13 1h2v3h-2zM4 4h3v3h-3zM10 4h3v3h-3z" fill="#eee"/></svg>
<div class="a" style="left:2px;top:437px;width:28px;height:1px;background:#3a3a3a;"></div>
<svg class="a" style="left:8px;top:443px;" width="17" height="17" viewBox="0 0 17 17"><path d="M1 1H14V9L9 14H1Z" fill="#ccc"/><path d="M3 4H12M3 7H12M3 10H8" stroke="#444"/><path d="M9 14V9H14" fill="none" stroke="#888"/></svg>
<svg class="a" style="left:7px;top:465px;" width="18" height="16" viewBox="0 0 18 16"><path d="M2 15L10 7M9 4L14 9" stroke="#e0e0e0" stroke-width="2"/><path d="M12 2L16 6" stroke="#bbb" stroke-width="3"/></svg>
<svg class="a" style="left:7px;top:486px;" width="18" height="17" viewBox="0 0 18 17"><path d="M4 9V4Q4 2.5 5 2.5T6 4V8V2Q6 1 7 1T8 2V8V2.5Q8 1.5 9 1.5T10 2.5V8V4Q10 3 11 3T12 4V10L14 7Q15 6 16 7L12 14Q11 16 8 16H6Q3 16 3 12Z" fill="#ddd"/></svg>
<svg class="a" style="left:7px;top:506px;" width="17" height="17" viewBox="0 0 17 17"><circle cx="7" cy="7" r="5" fill="#888" stroke="#ddd" stroke-width="1.5"/><path d="M10.5 10.5L16 16" stroke="#ddd" stroke-width="2.5"/></svg>
<div class="a" style="left:2px;top:528px;width:28px;height:1px;background:#3a3a3a;"></div>
<div class="a" style="left:14px;top:539px;width:10px;height:11px;background:#141414;"></div>
<div class="a" style="left:16px;top:541px;width:6px;height:7px;background:#4a4a4a;"></div>
<div class="a" style="left:6px;top:533px;width:12px;height:12px;background:#c42727;border:1px solid #dd9a9a"></div>
<svg class="a" style="left:20px;top:532px;" width="6" height="6" viewBox="0 0 6 6"><path d="M0.5 2Q3 0 5 2.5M5 2.5L5.5 0M5 2.5L2.5 3" stroke="#ddd" fill="none"/></svg>
<div class="a" style="left:6px;top:552px;width:7px;height:7px;background:#fff;border:1px solid #c00"></div>
<div class="a" style="left:9px;top:556px;width:6px;height:6px;background:#333;border:1px solid #ddd"></div>
<div class="a" style="left:2px;top:565px;width:28px;height:1px;background:#3a3a3a;"></div>
<div class="a" style="left:6px;top:569px;width:10px;height:11px;background:#555;border:1px solid #ccc"></div>
<span class="t" style="left:18px;top:568.45px;font-size:13px;color:#e0e0e0;font-weight:bold;font-family:'Liberation Serif';">T</span>
<div class="a" style="left:2px;top:585px;width:28px;height:1px;background:#3a3a3a;"></div>
<div class="a" style="left:5px;top:588px;width:22px;height:19px;background:#363636;"></div>
<div class="a" style="left:10px;top:592px;width:12px;height:12px;background:#c42727;border:1px solid #777"></div>
<div class="a" style="left:2px;top:610px;width:28px;height:1px;background:#3a3a3a;"></div>
<div class="a" style="left:5px;top:614px;width:22px;height:19px;background:#363636;"></div>
<svg class="a" style="left:9px;top:617px;" width="15" height="13" viewBox="0 0 15 13"><rect x="0.5" y="0.5" width="13" height="11" fill="none" stroke="#e0e0e0"/><path d="M0.5 3H13.5" stroke="#e0e0e0"/></svg>
<div class="a" style="left:34px;top:78px;width:1721px;height:19px;background:#3a3a3a;"></div>
<div class="a" style="left:34px;top:78px;width:222px;height:19px;background:#4b4b4b;"></div>
<span class="t" style="left:43px;top:82.65px;font-size:11px;color:#e2e2e2;font-weight:bold;letter-spacing:-0.15px">Weihnachts-Menükarte.indd @ 75 %</span>
<svg class="a" style="left:242px;top:84px;" width="7" height="7" viewBox="0 0 7 7"><path d="M0.5 0.5L6.5 6.5M6.5 0.5L0.5 6.5" stroke="#ccc" stroke-width="1.3"/></svg>
<div class="a" style="left:34px;top:97px;width:1704px;height:16px;background:#232323;"></div>
<svg class="a" style="left:50px;top:97px;" width="1688" height="16" viewBox="0 0 1688 16"><path d="M2.5 11V16" stroke="#9a9a9a"/><path d="M5.5 13V16" stroke="#7e7e7e"/><path d="M8.5 13V16" stroke="#7e7e7e"/><path d="M10.5 13V16" stroke="#7e7e7e"/><path d="M13.5 13V16" stroke="#7e7e7e"/><path d="M16.5 0V16" stroke="#a8a8a8"/><path d="M19.5 13V16" stroke="#7e7e7e"/><path d="M22.5 13V16" stroke="#7e7e7e"/><path d="M25.5 13V16" stroke="#7e7e7e"/><path d="M27.5 13V16" stroke="#7e7e7e"/><path d="M30.5 11V16" stroke="#9a9a9a"/><path d="M33.5 13V16" stroke="#7e7e7e"/><path d="M36.5 13V16" stroke="#7e7e7e"/><path d="M39.5 13V16" stroke="#7e7e7e"/><path d="M42.5 13V16" stroke="#7e7e7e"/><path d="M44.5 0V16" stroke="#a8a8a8"/><path d="M47.5 13V16" stroke="#7e7e7e"/><path d="M50.5 13V16" stroke="#7e7e7e"/><path d="M53.5 13V16" stroke="#7e7e7e"/><path d="M56.5 13V16" stroke="#7e7e7e"/><path d="M59.5 11V16" stroke="#9a9a9a"/><path d="M61.5 13V16" stroke="#7e7e7e"/><path d="M64.5 13V16" stroke="#7e7e7e"/><path d="M67.5 13V16" stroke="#7e7e7e"/><path d="M70.5 13V16" stroke="#7e7e7e"/><path d="M73.5 0V16" stroke="#a8a8a8"/><path d="M76.5 13V16" stroke="#7e7e7e"/><path d="M78.5 13V16" stroke="#7e7e7e"/><path d="M81.5 13V16" stroke="#7e7e7e"/><path d="M84.5 13V16" stroke="#7e7e7e"/><path d="M87.5 11V16" stroke="#9a9a9a"/><path d="M90.5 13V16" stroke="#7e7e7e"/><path d="M93.5 13V16" stroke="#7e7e7e"/><path d="M95.5 13V16" stroke="#7e7e7e"/><path d="M98.5 13V16" stroke="#7e7e7e"/><path d="M101.5 0V16" stroke="#a8a8a8"/><path d="M104.5 13V16" stroke="#7e7e7e"/><path d="M107.5 13V16" stroke="#7e7e7e"/><path d="M110.5 13V16" stroke="#7e7e7e"/><path d="M112.5 13V16" stroke="#7e7e7e"/><path d="M115.5 11V16" stroke="#9a9a9a"/><path d="M118.5 13V16" stroke="#7e7e7e"/><path d="M121.5 13V16" stroke="#7e7e7e"/><path d="M124.5 13V16" stroke="#7e7e7e"/><path d="M127.5 13V16" stroke="#7e7e7e"/><path d="M129.5 0V16" stroke="#a8a8a8"/><path d="M132.5 13V16" stroke="#7e7e7e"/><path d="M135.5 13V16" stroke="#7e7e7e"/><path d="M138.5 13V16" stroke="#7e7e7e"/><path d="M141.5 13V16" stroke="#7e7e7e"/><path d="M144.5 11V16" stroke="#9a9a9a"/><path d="M146.5 13V16" stroke="#7e7e7e"/><path d="M149.5 13V16" stroke="#7e7e7e"/><path d="M152.5 13V16" stroke="#7e7e7e"/><path d="M155.5 13V16" stroke="#7e7e7e"/><path d="M158.5 0V16" stroke="#a8a8a8"/><path d="M161.5 13V16" stroke="#7e7e7e"/><path d="M163.5 13V16" stroke="#7e7e7e"/><path d="M166.5 13V16" stroke="#7e7e7e"/><path d="M169.5 13V16" stroke="#7e7e7e"/><path d="M172.5 11V16" stroke="#9a9a9a"/><path d="M175.5 13V16" stroke="#7e7e7e"/><path d="M178.5 13V16" stroke="#7e7e7e"/><path d="M180.5 13V16" stroke="#7e7e7e"/><path d="M183.5 13V16" stroke="#7e7e7e"/><path d="M186.5 0V16" stroke="#a8a8a8"/><path d="M189.5 13V16" stroke="#7e7e7e"/><path d="M192.5 13V16" stroke="#7e7e7e"/><path d="M195.5 13V16" stroke="#7e7e7e"/><path d="M197.5 13V16" stroke="#7e7e7e"/><path d="M200.5 11V16" stroke="#9a9a9a"/><path d="M203.5 13V16" stroke="#7e7e7e"/><path d="M206.5 13V16" stroke="#7e7e7e"/><path d="M209.5 13V16" stroke="#7e7e7e"/><path d="M212.5 13V16" stroke="#7e7e7e"/><path d="M214.5 0V16" stroke="#a8a8a8"/><path d="M217.5 13V16" stroke="#7e7e7e"/><path d="M220.5 13V16" stroke="#7e7e7e"/><path d="M223.5 13V16" stroke="#7e7e7e"/><path d="M226.5 13V16" stroke="#7e7e7e"/><path d="M229.5 11V16" stroke="#9a9a9a"/><path d="M232.5 13V16" stroke="#7e7e7e"/><path d="M234.5 13V16" stroke="#7e7e7e"/><path d="M237.5 13V16" stroke="#7e7e7e"/><path d="M240.5 13V16" stroke="#7e7e7e"/><path d="M243.5 0V16" stroke="#a8a8a8"/><path d="M246.5 13V16" stroke="#7e7e7e"/><path d="M249.5 13V16" stroke="#7e7e7e"/><path d="M251.5 13V16" stroke="#7e7e7e"/><path d="M254.5 13V16" stroke="#7e7e7e"/><path d="M257.5 11V16" stroke="#9a9a9a"/><path d="M260.5 13V16" stroke="#7e7e7e"/><path d="M263.5 13V16" stroke="#7e7e7e"/><path d="M266.5 13V16" stroke="#7e7e7e"/><path d="M268.5 13V16" stroke="#7e7e7e"/><path d="M271.5 0V16" stroke="#a8a8a8"/><path d="M274.5 13V16" stroke="#7e7e7e"/><path d="M277.5 13V16" stroke="#7e7e7e"/><path d="M280.5 13V16" stroke="#7e7e7e"/><path d="M283.5 13V16" stroke="#7e7e7e"/><path d="M285.5 11V16" stroke="#9a9a9a"/><path d="M288.5 13V16" stroke="#7e7e7e"/><path d="M291.5 13V16" stroke="#7e7e7e"/><path d="M294.5 13V16" stroke="#7e7e7e"/><path d="M297.5 13V16" stroke="#7e7e7e"/><path d="M300.5 0V16" stroke="#a8a8a8"/><path d="M302.5 13V16" stroke="#7e7e7e"/><path d="M305.5 13V16" stroke="#7e7e7e"/><path d="M308.5 13V16" stroke="#7e7e7e"/><path d="M311.5 13V16" stroke="#7e7e7e"/><path d="M314.5 11V16" stroke="#9a9a9a"/><path d="M317.5 13V16" stroke="#7e7e7e"/><path d="M319.5 13V16" stroke="#7e7e7e"/><path d="M322.5 13V16" stroke="#7e7e7e"/><path d="M325.5 13V16" stroke="#7e7e7e"/><path d="M328.5 0V16" stroke="#a8a8a8"/><path d="M331.5 13V16" stroke="#7e7e7e"/><path d="M334.5 13V16" stroke="#7e7e7e"/><path d="M336.5 13V16" stroke="#7e7e7e"/><path d="M339.5 13V16" stroke="#7e7e7e"/><path d="M342.5 11V16" stroke="#9a9a9a"/><path d="M345.5 13V16" stroke="#7e7e7e"/><path d="M348.5 13V16" stroke="#7e7e7e"/><path d="M351.5 13V16" stroke="#7e7e7e"/><path d="M353.5 13V16" stroke="#7e7e7e"/><path d="M356.5 0V16" stroke="#a8a8a8"/><path d="M359.5 13V16" stroke="#7e7e7e"/><path d="M362.5 13V16" stroke="#7e7e7e"/><path d="M365.5 13V16" stroke="#7e7e7e"/><path d="M368.5 13V16" stroke="#7e7e7e"/><path d="M370.5 11V16" stroke="#9a9a9a"/><path d="M373.5 13V16" stroke="#7e7e7e"/><path d="M376.5 13V16" stroke="#7e7e7e"/><path d="M379.5 13V16" stroke="#7e7e7e"/><path d="M382.5 13V16" stroke="#7e7e7e"/><path d="M385.5 0V16" stroke="#a8a8a8"/><path d="M387.5 13V16" stroke="#7e7e7e"/><path d="M390.5 13V16" stroke="#7e7e7e"/><path d="M393.5 13V16" stroke="#7e7e7e"/><path d="M396.5 13V16" stroke="#7e7e7e"/><path d="M399.5 11V16" stroke="#9a9a9a"/><path d="M402.5 13V16" stroke="#7e7e7e"/><path d="M404.5 13V16" stroke="#7e7e7e"/><path d="M407.5 13V16" stroke="#7e7e7e"/><path d="M410.5 13V16" stroke="#7e7e7e"/><path d="M413.5 0V16" stroke="#a8a8a8"/><path d="M416.5 13V16" stroke="#7e7e7e"/><path d="M419.5 13V16" stroke="#7e7e7e"/><path d="M421.5 13V16" stroke="#7e7e7e"/><path d="M424.5 13V16" stroke="#7e7e7e"/><path d="M427.5 11V16" stroke="#9a9a9a"/><path d="M430.5 13V16" stroke="#7e7e7e"/><path d="M433.5 13V16" stroke="#7e7e7e"/><path d="M436.5 13V16" stroke="#7e7e7e"/><path d="M438.5 13V16" stroke="#7e7e7e"/><path d="M441.5 0V16" stroke="#a8a8a8"/><path d="M444.5 13V16" stroke="#7e7e7e"/><path d="M447.5 13V16" stroke="#7e7e7e"/><path d="M450.5 13V16" stroke="#7e7e7e"/><path d="M453.5 13V16" stroke="#7e7e7e"/><path d="M455.5 11V16" stroke="#9a9a9a"/><path d="M458.5 13V16" stroke="#7e7e7e"/><path d="M461.5 13V16" stroke="#7e7e7e"/><path d="M464.5 13V16" stroke="#7e7e7e"/><path d="M467.5 13V16" stroke="#7e7e7e"/><path d="M470.5 0V16" stroke="#a8a8a8"/><path d="M472.5 13V16" stroke="#7e7e7e"/><path d="M475.5 13V16" stroke="#7e7e7e"/><path d="M478.5 13V16" stroke="#7e7e7e"/><path d="M481.5 13V16" stroke="#7e7e7e"/><path d="M484.5 11V16" stroke="#9a9a9a"/><path d="M487.5 13V16" stroke="#7e7e7e"/><path d="M489.5 13V16" stroke="#7e7e7e"/><path d="M492.5 13V16" stroke="#7e7e7e"/><path d="M495.5 13V16" stroke="#7e7e7e"/><path d="M498.5 0V16" stroke="#a8a8a8"/><path d="M501.5 13V16" stroke="#7e7e7e"/><path d="M504.5 13V16" stroke="#7e7e7e"/><path d="M506.5 13V16" stroke="#7e7e7e"/><path d="M509.5 13V16" stroke="#7e7e7e"/><path d="M512.5 11V16" stroke="#9a9a9a"/><path d="M515.5 13V16" stroke="#7e7e7e"/><path d="M518.5 13V16" stroke="#7e7e7e"/><path d="M521.5 13V16" stroke="#7e7e7e"/><path d="M523.5 13V16" stroke="#7e7e7e"/><path d="M526.5 0V16" stroke="#a8a8a8"/><path d="M529.5 13V16" stroke="#7e7e7e"/><path d="M532.5 13V16" stroke="#7e7e7e"/><path d="M535.5 13V16" stroke="#7e7e7e"/><path d="M538.5 13V16" stroke="#7e7e7e"/><path d="M540.5 11V16" stroke="#9a9a9a"/><path d="M543.5 13V16" stroke="#7e7e7e"/><path d="M546.5 13V16" stroke="#7e7e7e"/><path d="M549.5 13V16" stroke="#7e7e7e"/><path d="M552.5 13V16" stroke="#7e7e7e"/><path d="M555.5 0V16" stroke="#a8a8a8"/><path d="M557.5 13V16" stroke="#7e7e7e"/><path d="M560.5 13V16" stroke="#7e7e7e"/><path d="M563.5 13V16" stroke="#7e7e7e"/><path d="M566.5 13V16" stroke="#7e7e7e"/><path d="M569.5 11V16" stroke="#9a9a9a"/><path d="M572.5 13V16" stroke="#7e7e7e"/><path d="M574.5 13V16" stroke="#7e7e7e"/><path d="M577.5 13V16" stroke="#7e7e7e"/><path d="M580.5 13V16" stroke="#7e7e7e"/><path d="M583.5 0V16" stroke="#a8a8a8"/><path d="M586.5 13V16" stroke="#7e7e7e"/><path d="M589.5 13V16" stroke="#7e7e7e"/><path d="M592.5 13V16" stroke="#7e7e7e"/><path d="M594.5 13V16" stroke="#7e7e7e"/><path d="M597.5 11V16" stroke="#9a9a9a"/><path d="M600.5 13V16" stroke="#7e7e7e"/><path d="M603.5 13V16" stroke="#7e7e7e"/><path d="M606.5 13V16" stroke="#7e7e7e"/><path d="M609.5 13V16" stroke="#7e7e7e"/><path d="M611.5 0V16" stroke="#a8a8a8"/><path d="M614.5 13V16" stroke="#7e7e7e"/><path d="M617.5 13V16" stroke="#7e7e7e"/><path d="M620.5 13V16" stroke="#7e7e7e"/><path d="M623.5 13V16" stroke="#7e7e7e"/><path d="M626.5 11V16" stroke="#9a9a9a"/><path d="M628.5 13V16" stroke="#7e7e7e"/><path d="M631.5 13V16" stroke="#7e7e7e"/><path d="M634.5 13V16" stroke="#7e7e7e"/><path d="M637.5 13V16" stroke="#7e7e7e"/><path d="M640.5 0V16" stroke="#a8a8a8"/><path d="M643.5 13V16" stroke="#7e7e7e"/><path d="M645.5 13V16" stroke="#7e7e7e"/><path d="M648.5 13V16" stroke="#7e7e7e"/><path d="M651.5 13V16" stroke="#7e7e7e"/><path d="M654.5 11V16" stroke="#9a9a9a"/><path d="M657.5 13V16" stroke="#7e7e7e"/><path d="M660.5 13V16" stroke="#7e7e7e"/><path d="M662.5 13V16" stroke="#7e7e7e"/><path d="M665.5 13V16" stroke="#7e7e7e"/><path d="M668.5 0V16" stroke="#a8a8a8"/><path d="M671.5 13V16" stroke="#7e7e7e"/><path d="M674.5 13V16" stroke="#7e7e7e"/><path d="M677.5 13V16" stroke="#7e7e7e"/><path d="M679.5 13V16" stroke="#7e7e7e"/><path d="M682.5 11V16" stroke="#9a9a9a"/><path d="M685.5 13V16" stroke="#7e7e7e"/><path d="M688.5 13V16" stroke="#7e7e7e"/><path d="M691.5 13V16" stroke="#7e7e7e"/><path d="M694.5 13V16" stroke="#7e7e7e"/><path d="M696.5 0V16" stroke="#a8a8a8"/><path d="M699.5 13V16" stroke="#7e7e7e"/><path d="M702.5 13V16" stroke="#7e7e7e"/><path d="M705.5 13V16" stroke="#7e7e7e"/><path d="M708.5 13V16" stroke="#7e7e7e"/><path d="M711.5 11V16" stroke="#9a9a9a"/><path d="M713.5 13V16" stroke="#7e7e7e"/><path d="M716.5 13V16" stroke="#7e7e7e"/><path d="M719.5 13V16" stroke="#7e7e7e"/><path d="M722.5 13V16" stroke="#7e7e7e"/><path d="M725.5 0V16" stroke="#a8a8a8"/><path d="M728.5 13V16" stroke="#7e7e7e"/><path d="M730.5 13V16" stroke="#7e7e7e"/><path d="M733.5 13V16" stroke="#7e7e7e"/><path d="M736.5 13V16" stroke="#7e7e7e"/><path d="M739.5 11V16" stroke="#9a9a9a"/><path d="M742.5 13V16" stroke="#7e7e7e"/><path d="M745.5 13V16" stroke="#7e7e7e"/><path d="M747.5 13V16" stroke="#7e7e7e"/><path d="M750.5 13V16" stroke="#7e7e7e"/><path d="M753.5 0V16" stroke="#a8a8a8"/><path d="M756.5 13V16" stroke="#7e7e7e"/><path d="M759.5 13V16" stroke="#7e7e7e"/><path d="M762.5 13V16" stroke="#7e7e7e"/><path d="M764.5 13V16" stroke="#7e7e7e"/><path d="M767.5 11V16" stroke="#9a9a9a"/><path d="M770.5 13V16" stroke="#7e7e7e"/><path d="M773.5 13V16" stroke="#7e7e7e"/><path d="M776.5 13V16" stroke="#7e7e7e"/><path d="M779.5 13V16" stroke="#7e7e7e"/><path d="M781.5 0V16" stroke="#a8a8a8"/><path d="M784.5 13V16" stroke="#7e7e7e"/><path d="M787.5 13V16" stroke="#7e7e7e"/><path d="M790.5 13V16" stroke="#7e7e7e"/><path d="M793.5 13V16" stroke="#7e7e7e"/><path d="M796.5 11V16" stroke="#9a9a9a"/><path d="M798.5 13V16" stroke="#7e7e7e"/><path d="M801.5 13V16" stroke="#7e7e7e"/><path d="M804.5 13V16" stroke="#7e7e7e"/><path d="M807.5 13V16" stroke="#7e7e7e"/><path d="M810.5 0V16" stroke="#a8a8a8"/><path d="M813.5 13V16" stroke="#7e7e7e"/><path d="M815.5 13V16" stroke="#7e7e7e"/><path d="M818.5 13V16" stroke="#7e7e7e"/><path d="M821.5 13V16" stroke="#7e7e7e"/><path d="M824.5 11V16" stroke="#9a9a9a"/><path d="M827.5 13V16" stroke="#7e7e7e"/><path d="M830.5 13V16" stroke="#7e7e7e"/><path d="M832.5 13V16" stroke="#7e7e7e"/><path d="M835.5 13V16" stroke="#7e7e7e"/><path d="M838.5 0V16" stroke="#a8a8a8"/><path d="M841.5 13V16" stroke="#7e7e7e"/><path d="M844.5 13V16" stroke="#7e7e7e"/><path d="M847.5 13V16" stroke="#7e7e7e"/><path d="M849.5 13V16" stroke="#7e7e7e"/><path d="M852.5 11V16" stroke="#9a9a9a"/><path d="M855.5 13V16" stroke="#7e7e7e"/><path d="M858.5 13V16" stroke="#7e7e7e"/><path d="M861.5 13V16" stroke="#7e7e7e"/><path d="M864.5 13V16" stroke="#7e7e7e"/><path d="M866.5 0V16" stroke="#a8a8a8"/><path d="M869.5 13V16" stroke="#7e7e7e"/><path d="M872.5 13V16" stroke="#7e7e7e"/><path d="M875.5 13V16" stroke="#7e7e7e"/><path d="M878.5 13V16" stroke="#7e7e7e"/><path d="M881.5 11V16" stroke="#9a9a9a"/><path d="M883.5 13V16" stroke="#7e7e7e"/><path d="M886.5 13V16" stroke="#7e7e7e"/><path d="M889.5 13V16" stroke="#7e7e7e"/><path d="M892.5 13V16" stroke="#7e7e7e"/><path d="M895.5 0V16" stroke="#a8a8a8"/><path d="M898.5 13V16" stroke="#7e7e7e"/><path d="M900.5 13V16" stroke="#7e7e7e"/><path d="M903.5 13V16" stroke="#7e7e7e"/><path d="M906.5 13V16" stroke="#7e7e7e"/><path d="M909.5 11V16" stroke="#9a9a9a"/><path d="M912.5 13V16" stroke="#7e7e7e"/><path d="M915.5 13V16" stroke="#7e7e7e"/><path d="M917.5 13V16" stroke="#7e7e7e"/><path d="M920.5 13V16" stroke="#7e7e7e"/><path d="M923.5 0V16" stroke="#a8a8a8"/><path d="M926.5 13V16" stroke="#7e7e7e"/><path d="M929.5 13V16" stroke="#7e7e7e"/><path d="M932.5 13V16" stroke="#7e7e7e"/><path d="M934.5 13V16" stroke="#7e7e7e"/><path d="M937.5 11V16" stroke="#9a9a9a"/><path d="M940.5 13V16" stroke="#7e7e7e"/><path d="M943.5 13V16" stroke="#7e7e7e"/><path d="M946.5 13V16" stroke="#7e7e7e"/><path d="M949.5 13V16" stroke="#7e7e7e"/><path d="M952.5 0V16" stroke="#a8a8a8"/><path d="M954.5 13V16" stroke="#7e7e7e"/><path d="M957.5 13V16" stroke="#7e7e7e"/><path d="M960.5 13V16" stroke="#7e7e7e"/><path d="M963.5 13V16" stroke="#7e7e7e"/><path d="M966.5 11V16" stroke="#9a9a9a"/><path d="M969.5 13V16" stroke="#7e7e7e"/><path d="M971.5 13V16" stroke="#7e7e7e"/><path d="M974.5 13V16" stroke="#7e7e7e"/><path d="M977.5 13V16" stroke="#7e7e7e"/><path d="M980.5 0V16" stroke="#a8a8a8"/><path d="M983.5 13V16" stroke="#7e7e7e"/><path d="M986.5 13V16" stroke="#7e7e7e"/><path d="M988.5 13V16" stroke="#7e7e7e"/><path d="M991.5 13V16" stroke="#7e7e7e"/><path d="M994.5 11V16" stroke="#9a9a9a"/><path d="M997.5 13V16" stroke="#7e7e7e"/><path d="M1000.5 13V16" stroke="#7e7e7e"/><path d="M1003.5 13V16" stroke="#7e7e7e"/><path d="M1005.5 13V16" stroke="#7e7e7e"/><path d="M1008.5 0V16" stroke="#a8a8a8"/><path d="M1011.5 13V16" stroke="#7e7e7e"/><path d="M1014.5 13V16" stroke="#7e7e7e"/><path d="M1017.5 13V16" stroke="#7e7e7e"/><path d="M1020.5 13V16" stroke="#7e7e7e"/><path d="M1022.5 11V16" stroke="#9a9a9a"/><path d="M1025.5 13V16" stroke="#7e7e7e"/><path d="M1028.5 13V16" stroke="#7e7e7e"/><path d="M1031.5 13V16" stroke="#7e7e7e"/><path d="M1034.5 13V16" stroke="#7e7e7e"/><path d="M1037.5 0V16" stroke="#a8a8a8"/><path d="M1039.5 13V16" stroke="#7e7e7e"/><path d="M1042.5 13V16" stroke="#7e7e7e"/><path d="M1045.5 13V16" stroke="#7e7e7e"/><path d="M1048.5 13V16" stroke="#7e7e7e"/><path d="M1051.5 11V16" stroke="#9a9a9a"/><path d="M1054.5 13V16" stroke="#7e7e7e"/><path d="M1056.5 13V16" stroke="#7e7e7e"/><path d="M1059.5 13V16" stroke="#7e7e7e"/><path d="M1062.5 13V16" stroke="#7e7e7e"/><path d="M1065.5 0V16" stroke="#a8a8a8"/><path d="M1068.5 13V16" stroke="#7e7e7e"/><path d="M1071.5 13V16" stroke="#7e7e7e"/><path d="M1073.5 13V16" stroke="#7e7e7e"/><path d="M1076.5 13V16" stroke="#7e7e7e"/><path d="M1079.5 11V16" stroke="#9a9a9a"/><path d="M1082.5 13V16" stroke="#7e7e7e"/><path d="M1085.5 13V16" stroke="#7e7e7e"/><path d="M1088.5 13V16" stroke="#7e7e7e"/><path d="M1090.5 13V16" stroke="#7e7e7e"/><path d="M1093.5 0V16" stroke="#a8a8a8"/><path d="M1096.5 13V16" stroke="#7e7e7e"/><path d="M1099.5 13V16" stroke="#7e7e7e"/><path d="M1102.5 13V16" stroke="#7e7e7e"/><path d="M1105.5 13V16" stroke="#7e7e7e"/><path d="M1107.5 11V16" stroke="#9a9a9a"/><path d="M1110.5 13V16" stroke="#7e7e7e"/><path d="M1113.5 13V16" stroke="#7e7e7e"/><path d="M1116.5 13V16" stroke="#7e7e7e"/><path d="M1119.5 13V16" stroke="#7e7e7e"/><path d="M1122.5 0V16" stroke="#a8a8a8"/><path d="M1124.5 13V16" stroke="#7e7e7e"/><path d="M1127.5 13V16" stroke="#7e7e7e"/><path d="M1130.5 13V16" stroke="#7e7e7e"/><path d="M1133.5 13V16" stroke="#7e7e7e"/><path d="M1136.5 11V16" stroke="#9a9a9a"/><path d="M1139.5 13V16" stroke="#7e7e7e"/><path d="M1141.5 13V16" stroke="#7e7e7e"/><path d="M1144.5 13V16" stroke="#7e7e7e"/><path d="M1147.5 13V16" stroke="#7e7e7e"/><path d="M1150.5 0V16" stroke="#a8a8a8"/><path d="M1153.5 13V16" stroke="#7e7e7e"/><path d="M1156.5 13V16" stroke="#7e7e7e"/><path d="M1158.5 13V16" stroke="#7e7e7e"/><path d="M1161.5 13V16" stroke="#7e7e7e"/><path d="M1164.5 11V16" stroke="#9a9a9a"/><path d="M1167.5 13V16" stroke="#7e7e7e"/><path d="M1170.5 13V16" stroke="#7e7e7e"/><path d="M1173.5 13V16" stroke="#7e7e7e"/><path d="M1175.5 13V16" stroke="#7e7e7e"/><path d="M1178.5 0V16" stroke="#a8a8a8"/><path d="M1181.5 13V16" stroke="#7e7e7e"/><path d="M1184.5 13V16" stroke="#7e7e7e"/><path d="M1187.5 13V16" stroke="#7e7e7e"/><path d="M1190.5 13V16" stroke="#7e7e7e"/><path d="M1192.5 11V16" stroke="#9a9a9a"/><path d="M1195.5 13V16" stroke="#7e7e7e"/><path d="M1198.5 13V16" stroke="#7e7e7e"/><path d="M1201.5 13V16" stroke="#7e7e7e"/><path d="M1204.5 13V16" stroke="#7e7e7e"/><path d="M1207.5 0V16" stroke="#a8a8a8"/><path d="M1209.5 13V16" stroke="#7e7e7e"/><path d="M1212.5 13V16" stroke="#7e7e7e"/><path d="M1215.5 13V16" stroke="#7e7e7e"/><path d="M1218.5 13V16" stroke="#7e7e7e"/><path d="M1221.5 11V16" stroke="#9a9a9a"/><path d="M1224.5 13V16" stroke="#7e7e7e"/><path d="M1226.5 13V16" stroke="#7e7e7e"/><path d="M1229.5 13V16" stroke="#7e7e7e"/><path d="M1232.5 13V16" stroke="#7e7e7e"/><path d="M1235.5 0V16" stroke="#a8a8a8"/><path d="M1238.5 13V16" stroke="#7e7e7e"/><path d="M1241.5 13V16" stroke="#7e7e7e"/><path d="M1243.5 13V16" stroke="#7e7e7e"/><path d="M1246.5 13V16" stroke="#7e7e7e"/><path d="M1249.5 11V16" stroke="#9a9a9a"/><path d="M1252.5 13V16" stroke="#7e7e7e"/><path d="M1255.5 13V16" stroke="#7e7e7e"/><path d="M1258.5 13V16" stroke="#7e7e7e"/><path d="M1260.5 13V16" stroke="#7e7e7e"/><path d="M1263.5 0V16" stroke="#a8a8a8"/><path d="M1266.5 13V16" stroke="#7e7e7e"/><path d="M1269.5 13V16" stroke="#7e7e7e"/><path d="M1272.5 13V16" stroke="#7e7e7e"/><path d="M1275.5 13V16" stroke="#7e7e7e"/><path d="M1277.5 11V16" stroke="#9a9a9a"/><path d="M1280.5 13V16" stroke="#7e7e7e"/><path d="M1283.5 13V16" stroke="#7e7e7e"/><path d="M1286.5 13V16" stroke="#7e7e7e"/><path d="M1289.5 13V16" stroke="#7e7e7e"/><path d="M1292.5 0V16" stroke="#a8a8a8"/><path d="M1294.5 13V16" stroke="#7e7e7e"/><path d="M1297.5 13V16" stroke="#7e7e7e"/><path d="M1300.5 13V16" stroke="#7e7e7e"/><path d="M1303.5 13V16" stroke="#7e7e7e"/><path d="M1306.5 11V16" stroke="#9a9a9a"/><path d="M1309.5 13V16" stroke="#7e7e7e"/><path d="M1312.5 13V16" stroke="#7e7e7e"/><path d="M1314.5 13V16" stroke="#7e7e7e"/><path d="M1317.5 13V16" stroke="#7e7e7e"/><path d="M1320.5 0V16" stroke="#a8a8a8"/><path d="M1323.5 13V16" stroke="#7e7e7e"/><path d="M1326.5 13V16" stroke="#7e7e7e"/><path d="M1329.5 13V16" stroke="#7e7e7e"/><path d="M1331.5 13V16" stroke="#7e7e7e"/><path d="M1334.5 11V16" stroke="#9a9a9a"/><path d="M1337.5 13V16" stroke="#7e7e7e"/><path d="M1340.5 13V16" stroke="#7e7e7e"/><path d="M1343.5 13V16" stroke="#7e7e7e"/><path d="M1346.5 13V16" stroke="#7e7e7e"/><path d="M1348.5 0V16" stroke="#a8a8a8"/><path d="M1351.5 13V16" stroke="#7e7e7e"/><path d="M1354.5 13V16" stroke="#7e7e7e"/><path d="M1357.5 13V16" stroke="#7e7e7e"/><path d="M1360.5 13V16" stroke="#7e7e7e"/><path d="M1363.5 11V16" stroke="#9a9a9a"/><path d="M1365.5 13V16" stroke="#7e7e7e"/><path d="M1368.5 13V16" stroke="#7e7e7e"/><path d="M1371.5 13V16" stroke="#7e7e7e"/><path d="M1374.5 13V16" stroke="#7e7e7e"/><path d="M1377.5 0V16" stroke="#a8a8a8"/><path d="M1380.5 13V16" stroke="#7e7e7e"/><path d="M1382.5 13V16" stroke="#7e7e7e"/><path d="M1385.5 13V16" stroke="#7e7e7e"/><path d="M1388.5 13V16" stroke="#7e7e7e"/><path d="M1391.5 11V16" stroke="#9a9a9a"/><path d="M1394.5 13V16" stroke="#7e7e7e"/><path d="M1397.5 13V16" stroke="#7e7e7e"/><path d="M1399.5 13V16" stroke="#7e7e7e"/><path d="M1402.5 13V16" stroke="#7e7e7e"/><path d="M1405.5 0V16" stroke="#a8a8a8"/><path d="M1408.5 13V16" stroke="#7e7e7e"/><path d="M1411.5 13V16" stroke="#7e7e7e"/><path d="M1414.5 13V16" stroke="#7e7e7e"/><path d="M1416.5 13V16" stroke="#7e7e7e"/><path d="M1419.5 11V16" stroke="#9a9a9a"/><path d="M1422.5 13V16" stroke="#7e7e7e"/><path d="M1425.5 13V16" stroke="#7e7e7e"/><path d="M1428.5 13V16" stroke="#7e7e7e"/><path d="M1431.5 13V16" stroke="#7e7e7e"/><path d="M1433.5 0V16" stroke="#a8a8a8"/><path d="M1436.5 13V16" stroke="#7e7e7e"/><path d="M1439.5 13V16" stroke="#7e7e7e"/><path d="M1442.5 13V16" stroke="#7e7e7e"/><path d="M1445.5 13V16" stroke="#7e7e7e"/><path d="M1448.5 11V16" stroke="#9a9a9a"/><path d="M1450.5 13V16" stroke="#7e7e7e"/><path d="M1453.5 13V16" stroke="#7e7e7e"/><path d="M1456.5 13V16" stroke="#7e7e7e"/><path d="M1459.5 13V16" stroke="#7e7e7e"/><path d="M1462.5 0V16" stroke="#a8a8a8"/><path d="M1465.5 13V16" stroke="#7e7e7e"/><path d="M1467.5 13V16" stroke="#7e7e7e"/><path d="M1470.5 13V16" stroke="#7e7e7e"/><path d="M1473.5 13V16" stroke="#7e7e7e"/><path d="M1476.5 11V16" stroke="#9a9a9a"/><path d="M1479.5 13V16" stroke="#7e7e7e"/><path d="M1482.5 13V16" stroke="#7e7e7e"/><path d="M1484.5 13V16" stroke="#7e7e7e"/><path d="M1487.5 13V16" stroke="#7e7e7e"/><path d="M1490.5 0V16" stroke="#a8a8a8"/><path d="M1493.5 13V16" stroke="#7e7e7e"/></svg>
<span class="t" style="left:40px;top:100.35px;font-size:9px;color:#d8d8d8;font-weight:normal;letter-spacing:-0.2px">210</span>
<span class="t" style="left:68px;top:100.35px;font-size:9px;color:#d8d8d8;font-weight:normal;letter-spacing:-0.2px">200</span>
<span class="t" style="left:96px;top:100.35px;font-size:9px;color:#d8d8d8;font-weight:normal;letter-spacing:-0.2px">190</span>
<span class="t" style="left:125px;top:100.35px;font-size:9px;color:#d8d8d8;font-weight:normal;letter-spacing:-0.2px">180</span>
<span class="t" style="left:153px;top:100.35px;font-size:9px;color:#d8d8d8;font-weight:normal;letter-spacing:-0.2px">170</span>
<span class="t" style="left:181px;top:100.35px;font-size:9px;color:#d8d8d8;font-weight:normal;letter-spacing:-0.2px">160</span>
<span class="t" style="left:210px;top:100.35px;font-size:9px;color:#d8d8d8;font-weight:normal;letter-spacing:-0.2px">150</span>
<span class="t" style="left:238px;top:100.35px;font-size:9px;color:#d8d8d8;font-weight:normal;letter-spacing:-0.2px">140</span>
<span class="t" style="left:266px;top:100.35px;font-size:9px;color:#d8d8d8;font-weight:normal;letter-spacing:-0.2px">130</span>
<span class="t" style="left:295px;top:100.35px;font-size:9px;color:#d8d8d8;font-weight:normal;letter-spacing:-0.2px">120</span>
<span class="t" style="left:323px;top:100.35px;font-size:9px;color:#d8d8d8;font-weight:normal;letter-spacing:-0.2px">110</span>
<span class="t" style="left:352px;top:100.35px;font-size:9px;color:#d8d8d8;font-weight:normal;letter-spacing:-0.2px">100</span>
<span class="t" style="left:380px;top:100.35px;font-size:9px;color:#d8d8d8;font-weight:normal;letter-spacing:-0.2px">90</span>
<span class="t" style="left:408px;top:100.35px;font-size:9px;color:#d8d8d8;font-weight:normal;letter-spacing:-0.2px">80</span>
<span class="t" style="left:437px;top:100.35px;font-size:9px;color:#d8d8d8;font-weight:normal;letter-spacing:-0.2px">70</span>
<span class="t" style="left:465px;top:100.35px;font-size:9px;color:#d8d8d8;font-weight:normal;letter-spacing:-0.2px">60</span>
<span class="t" style="left:493px;top:100.35px;font-size:9px;color:#d8d8d8;font-weight:normal;letter-spacing:-0.2px">50</span>
<span class="t" style="left:522px;top:100.35px;font-size:9px;color:#d8d8d8;font-weight:normal;letter-spacing:-0.2px">40</span>
<span class="t" style="left:550px;top:100.35px;font-size:9px;color:#d8d8d8;font-weight:normal;letter-spacing:-0.2px">30</span>
<span class="t" style="left:578px;top:100.35px;font-size:9px;color:#d8d8d8;font-weight:normal;letter-spacing:-0.2px">20</span>
<span class="t" style="left:607px;top:100.35px;font-size:9px;color:#d8d8d8;font-weight:normal;letter-spacing:-0.2px">10</span>
<span class="t" style="left:635px;top:100.35px;font-size:9px;color:#d8d8d8;font-weight:normal;letter-spacing:-0.2px">0</span>
<span class="t" style="left:663px;top:100.35px;font-size:9px;color:#d8d8d8;font-weight:normal;letter-spacing:-0.2px">10</span>
<span class="t" style="left:692px;top:100.35px;font-size:9px;color:#d8d8d8;font-weight:normal;letter-spacing:-0.2px">20</span>
<span class="t" style="left:720px;top:100.35px;font-size:9px;color:#d8d8d8;font-weight:normal;letter-spacing:-0.2px">30</span>
<span class="t" style="left:748px;top:100.35px;font-size:9px;color:#d8d8d8;font-weight:normal;letter-spacing:-0.2px">40</span>
<span class="t" style="left:777px;top:100.35px;font-size:9px;color:#d8d8d8;font-weight:normal;letter-spacing:-0.2px">50</span>
<span class="t" style="left:805px;top:100.35px;font-size:9px;color:#d8d8d8;font-weight:normal;letter-spacing:-0.2px">60</span>
<span class="t" style="left:833px;top:100.35px;font-size:9px;color:#d8d8d8;font-weight:normal;letter-spacing:-0.2px">70</span>
<span class="t" style="left:862px;top:100.35px;font-size:9px;color:#d8d8d8;font-weight:normal;letter-spacing:-0.2px">80</span>
<span class="t" style="left:890px;top:100.35px;font-size:9px;color:#d8d8d8;font-weight:normal;letter-spacing:-0.2px">90</span>
<span class="t" style="left:918px;top:100.35px;font-size:9px;color:#d8d8d8;font-weight:normal;letter-spacing:-0.2px">100</span>
<span class="t" style="left:947px;top:100.35px;font-size:9px;color:#d8d8d8;font-weight:normal;letter-spacing:-0.2px">110</span>
<span class="t" style="left:975px;top:100.35px;font-size:9px;color:#d8d8d8;font-weight:normal;letter-spacing:-0.2px">120</span>
<span class="t" style="left:1004px;top:100.35px;font-size:9px;color:#d8d8d8;font-weight:normal;letter-spacing:-0.2px">130</span>
<span class="t" style="left:1032px;top:100.35px;font-size:9px;color:#d8d8d8;font-weight:normal;letter-spacing:-0.2px">140</span>
<span class="t" style="left:1060px;top:100.35px;font-size:9px;color:#d8d8d8;font-weight:normal;letter-spacing:-0.2px">150</span>
<span class="t" style="left:1089px;top:100.35px;font-size:9px;color:#d8d8d8;font-weight:normal;letter-spacing:-0.2px">160</span>
<span class="t" style="left:1117px;top:100.35px;font-size:9px;color:#d8d8d8;font-weight:normal;letter-spacing:-0.2px">170</span>
<span class="t" style="left:1145px;top:100.35px;font-size:9px;color:#d8d8d8;font-weight:normal;letter-spacing:-0.2px">180</span>
<span class="t" style="left:1174px;top:100.35px;font-size:9px;color:#d8d8d8;font-weight:normal;letter-spacing:-0.2px">190</span>
<span class="t" style="left:1202px;top:100.35px;font-size:9px;color:#d8d8d8;font-weight:normal;letter-spacing:-0.2px">200</span>
<span class="t" style="left:1230px;top:100.35px;font-size:9px;color:#d8d8d8;font-weight:normal;letter-spacing:-0.2px">210</span>
<span class="t" style="left:1259px;top:100.35px;font-size:9px;color:#d8d8d8;font-weight:normal;letter-spacing:-0.2px">220</span>
<span class="t" style="left:1287px;top:100.35px;font-size:9px;color:#d8d8d8;font-weight:normal;letter-spacing:-0.2px">230</span>
<span class="t" style="left:1315px;top:100.35px;font-size:9px;color:#d8d8d8;font-weight:normal;letter-spacing:-0.2px">240</span>
<span class="t" style="left:1344px;top:100.35px;font-size:9px;color:#d8d8d8;font-weight:normal;letter-spacing:-0.2px">250</span>
<span class="t" style="left:1372px;top:100.35px;font-size:9px;color:#d8d8d8;font-weight:normal;letter-spacing:-0.2px">260</span>
<span class="t" style="left:1400px;top:100.35px;font-size:9px;color:#d8d8d8;font-weight:normal;letter-spacing:-0.2px">270</span>
<span class="t" style="left:1429px;top:100.35px;font-size:9px;color:#d8d8d8;font-weight:normal;letter-spacing:-0.2px">280</span>
<span class="t" style="left:1457px;top:100.35px;font-size:9px;color:#d8d8d8;font-weight:normal;letter-spacing:-0.2px">290</span>
<span class="t" style="left:1485px;top:100.35px;font-size:9px;color:#d8d8d8;font-weight:normal;letter-spacing:-0.2px">300</span>
<span class="t" style="left:1514px;top:100.35px;font-size:9px;color:#d8d8d8;font-weight:normal;letter-spacing:-0.2px">310</span>
<span class="t" style="left:1542px;top:100.35px;font-size:9px;color:#d8d8d8;font-weight:normal;letter-spacing:-0.2px">320</span>
<div class="a" style="left:34px;top:97px;width:16px;height:16px;background:#232323;"></div>
<svg class="a" style="left:35px;top:99px;" width="13" height="13" viewBox="0 0 13 13"><path d="M0.5 0V13M0 5.5H13" stroke="#aaa" stroke-dasharray="1 1"/></svg>
<div class="a" style="left:34px;top:113px;width:16px;height:876px;background:#232323;"></div>
<svg class="a" style="left:34px;top:113px;" width="16" height="876" viewBox="0 0 16 876"><path d="M13 1.5H16" stroke="#7e7e7e"/><path d="M0 4.5H16" stroke="#a8a8a8"/><path d="M13 6.5H16" stroke="#7e7e7e"/><path d="M13 9.5H16" stroke="#7e7e7e"/><path d="M13 12.5H16" stroke="#7e7e7e"/><path d="M13 15.5H16" stroke="#7e7e7e"/><path d="M11 18.5H16" stroke="#9a9a9a"/><path d="M13 21.5H16" stroke="#7e7e7e"/><path d="M13 23.5H16" stroke="#7e7e7e"/><path d="M13 26.5H16" stroke="#7e7e7e"/><path d="M13 29.5H16" stroke="#7e7e7e"/><path d="M0 32.5H16" stroke="#a8a8a8"/><path d="M13 35.5H16" stroke="#7e7e7e"/><path d="M13 38.5H16" stroke="#7e7e7e"/><path d="M13 40.5H16" stroke="#7e7e7e"/><path d="M13 43.5H16" stroke="#7e7e7e"/><path d="M11 46.5H16" stroke="#9a9a9a"/><path d="M13 49.5H16" stroke="#7e7e7e"/><path d="M13 52.5H16" stroke="#7e7e7e"/><path d="M13 55.5H16" stroke="#7e7e7e"/><path d="M13 57.5H16" stroke="#7e7e7e"/><path d="M0 60.5H16" stroke="#a8a8a8"/><path d="M13 63.5H16" stroke="#7e7e7e"/><path d="M13 66.5H16" stroke="#7e7e7e"/><path d="M13 69.5H16" stroke="#7e7e7e"/><path d="M13 72.5H16" stroke="#7e7e7e"/><path d="M11 74.5H16" stroke="#9a9a9a"/><path d="M13 77.5H16" stroke="#7e7e7e"/><path d="M13 80.5H16" stroke="#7e7e7e"/><path d="M13 83.5H16" stroke="#7e7e7e"/><path d="M13 86.5H16" stroke="#7e7e7e"/><path d="M13 125.5H16" stroke="#7e7e7e"/><path d="M13 128.5H16" stroke="#7e7e7e"/><path d="M11 131.5H16" stroke="#9a9a9a"/><path d="M13 134.5H16" stroke="#7e7e7e"/><path d="M13 137.5H16" stroke="#7e7e7e"/><path d="M13 140.5H16" stroke="#7e7e7e"/><path d="M13 142.5H16" stroke="#7e7e7e"/><path d="M0 145.5H16" stroke="#a8a8a8"/><path d="M13 148.5H16" stroke="#7e7e7e"/><path d="M13 151.5H16" stroke="#7e7e7e"/><path d="M13 154.5H16" stroke="#7e7e7e"/><path d="M13 157.5H16" stroke="#7e7e7e"/><path d="M11 159.5H16" stroke="#9a9a9a"/><path d="M13 162.5H16" stroke="#7e7e7e"/><path d="M13 165.5H16" stroke="#7e7e7e"/><path d="M13 168.5H16" stroke="#7e7e7e"/><path d="M13 171.5H16" stroke="#7e7e7e"/><path d="M0 174.5H16" stroke="#a8a8a8"/><path d="M13 176.5H16" stroke="#7e7e7e"/><path d="M13 179.5H16" stroke="#7e7e7e"/><path d="M13 182.5H16" stroke="#7e7e7e"/><path d="M13 185.5H16" stroke="#7e7e7e"/><path d="M11 188.5H16" stroke="#9a9a9a"/><path d="M13 191.5H16" stroke="#7e7e7e"/><path d="M13 193.5H16" stroke="#7e7e7e"/><path d="M13 196.5H16" stroke="#7e7e7e"/><path d="M13 199.5H16" stroke="#7e7e7e"/><path d="M0 202.5H16" stroke="#a8a8a8"/><path d="M13 205.5H16" stroke="#7e7e7e"/><path d="M13 208.5H16" stroke="#7e7e7e"/><path d="M13 211.5H16" stroke="#7e7e7e"/><path d="M13 213.5H16" stroke="#7e7e7e"/><path d="M11 216.5H16" stroke="#9a9a9a"/><path d="M13 219.5H16" stroke="#7e7e7e"/><path d="M13 222.5H16" stroke="#7e7e7e"/><path d="M13 225.5H16" stroke="#7e7e7e"/><path d="M13 228.5H16" stroke="#7e7e7e"/><path d="M0 230.5H16" stroke="#a8a8a8"/><path d="M13 233.5H16" stroke="#7e7e7e"/><path d="M13 236.5H16" stroke="#7e7e7e"/><path d="M13 239.5H16" stroke="#7e7e7e"/><path d="M13 242.5H16" stroke="#7e7e7e"/><path d="M11 245.5H16" stroke="#9a9a9a"/><path d="M13 247.5H16" stroke="#7e7e7e"/><path d="M13 250.5H16" stroke="#7e7e7e"/><path d="M13 253.5H16" stroke="#7e7e7e"/><path d="M13 256.5H16" stroke="#7e7e7e"/><path d="M0 259.5H16" stroke="#a8a8a8"/><path d="M13 262.5H16" stroke="#7e7e7e"/><path d="M13 264.5H16" stroke="#7e7e7e"/><path d="M13 267.5H16" stroke="#7e7e7e"/><path d="M13 270.5H16" stroke="#7e7e7e"/><path d="M11 273.5H16" stroke="#9a9a9a"/><path d="M13 276.5H16" stroke="#7e7e7e"/><path d="M13 279.5H16" stroke="#7e7e7e"/><path d="M13 281.5H16" stroke="#7e7e7e"/><path d="M13 284.5H16" stroke="#7e7e7e"/><path d="M0 287.5H16" stroke="#a8a8a8"/><path d="M13 290.5H16" stroke="#7e7e7e"/><path d="M13 293.5H16" stroke="#7e7e7e"/><path d="M13 296.5H16" stroke="#7e7e7e"/><path d="M13 298.5H16" stroke="#7e7e7e"/><path d="M11 301.5H16" stroke="#9a9a9a"/><path d="M13 304.5H16" stroke="#7e7e7e"/><path d="M13 307.5H16" stroke="#7e7e7e"/><path d="M13 310.5H16" stroke="#7e7e7e"/><path d="M13 313.5H16" stroke="#7e7e7e"/><path d="M0 315.5H16" stroke="#a8a8a8"/><path d="M13 318.5H16" stroke="#7e7e7e"/><path d="M13 321.5H16" stroke="#7e7e7e"/><path d="M13 324.5H16" stroke="#7e7e7e"/><path d="M13 327.5H16" stroke="#7e7e7e"/><path d="M11 330.5H16" stroke="#9a9a9a"/><path d="M13 332.5H16" stroke="#7e7e7e"/><path d="M13 335.5H16" stroke="#7e7e7e"/><path d="M13 338.5H16" stroke="#7e7e7e"/><path d="M13 341.5H16" stroke="#7e7e7e"/><path d="M0 344.5H16" stroke="#a8a8a8"/><path d="M13 347.5H16" stroke="#7e7e7e"/><path d="M13 349.5H16" stroke="#7e7e7e"/><path d="M13 352.5H16" stroke="#7e7e7e"/><path d="M13 355.5H16" stroke="#7e7e7e"/><path d="M11 358.5H16" stroke="#9a9a9a"/><path d="M13 361.5H16" stroke="#7e7e7e"/><path d="M13 364.5H16" stroke="#7e7e7e"/><path d="M13 366.5H16" stroke="#7e7e7e"/><path d="M13 369.5H16" stroke="#7e7e7e"/><path d="M0 372.5H16" stroke="#a8a8a8"/><path d="M13 375.5H16" stroke="#7e7e7e"/><path d="M13 378.5H16" stroke="#7e7e7e"/><path d="M13 381.5H16" stroke="#7e7e7e"/><path d="M13 383.5H16" stroke="#7e7e7e"/><path d="M11 386.5H16" stroke="#9a9a9a"/><path d="M13 389.5H16" stroke="#7e7e7e"/><path d="M13 392.5H16" stroke="#7e7e7e"/><path d="M13 395.5H16" stroke="#7e7e7e"/><path d="M13 398.5H16" stroke="#7e7e7e"/><path d="M0 400.5H16" stroke="#a8a8a8"/><path d="M13 403.5H16" stroke="#7e7e7e"/><path d="M13 406.5H16" stroke="#7e7e7e"/><path d="M13 409.5H16" stroke="#7e7e7e"/><path d="M13 412.5H16" stroke="#7e7e7e"/><path d="M11 415.5H16" stroke="#9a9a9a"/><path d="M13 417.5H16" stroke="#7e7e7e"/><path d="M13 420.5H16" stroke="#7e7e7e"/><path d="M13 423.5H16" stroke="#7e7e7e"/><path d="M13 426.5H16" stroke="#7e7e7e"/><path d="M0 429.5H16" stroke="#a8a8a8"/><path d="M13 432.5H16" stroke="#7e7e7e"/><path d="M13 434.5H16" stroke="#7e7e7e"/><path d="M13 437.5H16" stroke="#7e7e7e"/><path d="M13 440.5H16" stroke="#7e7e7e"/><path d="M11 443.5H16" stroke="#9a9a9a"/><path d="M13 446.5H16" stroke="#7e7e7e"/><path d="M13 449.5H16" stroke="#7e7e7e"/><path d="M13 451.5H16" stroke="#7e7e7e"/><path d="M13 454.5H16" stroke="#7e7e7e"/><path d="M0 457.5H16" stroke="#a8a8a8"/><path d="M13 460.5H16" stroke="#7e7e7e"/><path d="M13 463.5H16" stroke="#7e7e7e"/><path d="M13 466.5H16" stroke="#7e7e7e"/><path d="M13 468.5H16" stroke="#7e7e7e"/><path d="M11 471.5H16" stroke="#9a9a9a"/><path d="M13 474.5H16" stroke="#7e7e7e"/><path d="M13 477.5H16" stroke="#7e7e7e"/><path d="M13 480.5H16" stroke="#7e7e7e"/><path d="M13 483.5H16" stroke="#7e7e7e"/><path d="M0 485.5H16" stroke="#a8a8a8"/><path d="M13 488.5H16" stroke="#7e7e7e"/><path d="M13 491.5H16" stroke="#7e7e7e"/><path d="M13 494.5H16" stroke="#7e7e7e"/><path d="M13 497.5H16" stroke="#7e7e7e"/><path d="M11 500.5H16" stroke="#9a9a9a"/><path d="M13 502.5H16" stroke="#7e7e7e"/><path d="M13 505.5H16" stroke="#7e7e7e"/><path d="M13 508.5H16" stroke="#7e7e7e"/><path d="M13 511.5H16" stroke="#7e7e7e"/><path d="M0 514.5H16" stroke="#a8a8a8"/><path d="M13 517.5H16" stroke="#7e7e7e"/><path d="M13 519.5H16" stroke="#7e7e7e"/><path d="M13 522.5H16" stroke="#7e7e7e"/><path d="M13 525.5H16" stroke="#7e7e7e"/><path d="M11 528.5H16" stroke="#9a9a9a"/><path d="M13 531.5H16" stroke="#7e7e7e"/><path d="M13 534.5H16" stroke="#7e7e7e"/><path d="M13 536.5H16" stroke="#7e7e7e"/><path d="M13 539.5H16" stroke="#7e7e7e"/><path d="M0 542.5H16" stroke="#a8a8a8"/><path d="M13 545.5H16" stroke="#7e7e7e"/><path d="M13 548.5H16" stroke="#7e7e7e"/><path d="M13 551.5H16" stroke="#7e7e7e"/><path d="M13 553.5H16" stroke="#7e7e7e"/><path d="M11 556.5H16" stroke="#9a9a9a"/><path d="M13 559.5H16" stroke="#7e7e7e"/><path d="M13 562.5H16" stroke="#7e7e7e"/><path d="M13 565.5H16" stroke="#7e7e7e"/><path d="M13 568.5H16" stroke="#7e7e7e"/><path d="M0 571.5H16" stroke="#a8a8a8"/><path d="M13 573.5H16" stroke="#7e7e7e"/><path d="M13 576.5H16" stroke="#7e7e7e"/><path d="M13 579.5H16" stroke="#7e7e7e"/><path d="M13 582.5H16" stroke="#7e7e7e"/><path d="M11 585.5H16" stroke="#9a9a9a"/><path d="M13 588.5H16" stroke="#7e7e7e"/><path d="M13 590.5H16" stroke="#7e7e7e"/><path d="M13 593.5H16" stroke="#7e7e7e"/><path d="M13 596.5H16" stroke="#7e7e7e"/><path d="M0 599.5H16" stroke="#a8a8a8"/><path d="M13 602.5H16" stroke="#7e7e7e"/><path d="M13 605.5H16" stroke="#7e7e7e"/><path d="M13 607.5H16" stroke="#7e7e7e"/><path d="M13 610.5H16" stroke="#7e7e7e"/><path d="M11 613.5H16" stroke="#9a9a9a"/><path d="M13 616.5H16" stroke="#7e7e7e"/><path d="M13 619.5H16" stroke="#7e7e7e"/><path d="M13 622.5H16" stroke="#7e7e7e"/><path d="M13 624.5H16" stroke="#7e7e7e"/><path d="M0 627.5H16" stroke="#a8a8a8"/><path d="M13 630.5H16" stroke="#7e7e7e"/><path d="M13 633.5H16" stroke="#7e7e7e"/><path d="M13 636.5H16" stroke="#7e7e7e"/><path d="M13 639.5H16" stroke="#7e7e7e"/><path d="M11 641.5H16" stroke="#9a9a9a"/><path d="M13 644.5H16" stroke="#7e7e7e"/><path d="M13 647.5H16" stroke="#7e7e7e"/><path d="M13 650.5H16" stroke="#7e7e7e"/><path d="M13 653.5H16" stroke="#7e7e7e"/><path d="M0 656.5H16" stroke="#a8a8a8"/><path d="M13 658.5H16" stroke="#7e7e7e"/><path d="M13 661.5H16" stroke="#7e7e7e"/><path d="M13 664.5H16" stroke="#7e7e7e"/><path d="M13 667.5H16" stroke="#7e7e7e"/><path d="M11 670.5H16" stroke="#9a9a9a"/><path d="M13 673.5H16" stroke="#7e7e7e"/><path d="M13 675.5H16" stroke="#7e7e7e"/><path d="M13 678.5H16" stroke="#7e7e7e"/><path d="M13 681.5H16" stroke="#7e7e7e"/><path d="M0 684.5H16" stroke="#a8a8a8"/><path d="M13 687.5H16" stroke="#7e7e7e"/><path d="M13 690.5H16" stroke="#7e7e7e"/><path d="M13 692.5H16" stroke="#7e7e7e"/><path d="M13 695.5H16" stroke="#7e7e7e"/><path d="M11 698.5H16" stroke="#9a9a9a"/><path d="M13 701.5H16" stroke="#7e7e7e"/><path d="M13 704.5H16" stroke="#7e7e7e"/><path d="M13 707.5H16" stroke="#7e7e7e"/><path d="M13 709.5H16" stroke="#7e7e7e"/><path d="M0 712.5H16" stroke="#a8a8a8"/><path d="M13 715.5H16" stroke="#7e7e7e"/><path d="M13 718.5H16" stroke="#7e7e7e"/><path d="M13 721.5H16" stroke="#7e7e7e"/><path d="M13 724.5H16" stroke="#7e7e7e"/><path d="M11 726.5H16" stroke="#9a9a9a"/><path d="M13 729.5H16" stroke="#7e7e7e"/><path d="M13 732.5H16" stroke="#7e7e7e"/><path d="M13 735.5H16" stroke="#7e7e7e"/><path d="M13 738.5H16" stroke="#7e7e7e"/><path d="M0 741.5H16" stroke="#a8a8a8"/><path d="M13 743.5H16" stroke="#7e7e7e"/><path d="M13 746.5H16" stroke="#7e7e7e"/><path d="M13 749.5H16" stroke="#7e7e7e"/><path d="M13 752.5H16" stroke="#7e7e7e"/><path d="M11 755.5H16" stroke="#9a9a9a"/><path d="M13 758.5H16" stroke="#7e7e7e"/><path d="M13 760.5H16" stroke="#7e7e7e"/><path d="M13 763.5H16" stroke="#7e7e7e"/><path d="M13 766.5H16" stroke="#7e7e7e"/><path d="M0 769.5H16" stroke="#a8a8a8"/><path d="M13 772.5H16" stroke="#7e7e7e"/><path d="M13 775.5H16" stroke="#7e7e7e"/><path d="M13 777.5H16" stroke="#7e7e7e"/><path d="M13 780.5H16" stroke="#7e7e7e"/><path d="M11 783.5H16" stroke="#9a9a9a"/><path d="M13 786.5H16" stroke="#7e7e7e"/><path d="M13 789.5H16" stroke="#7e7e7e"/><path d="M13 792.5H16" stroke="#7e7e7e"/><path d="M13 794.5H16" stroke="#7e7e7e"/><path d="M0 797.5H16" stroke="#a8a8a8"/><path d="M13 800.5H16" stroke="#7e7e7e"/><path d="M13 803.5H16" stroke="#7e7e7e"/><path d="M13 806.5H16" stroke="#7e7e7e"/><path d="M13 809.5H16" stroke="#7e7e7e"/><path d="M11 811.5H16" stroke="#9a9a9a"/><path d="M13 814.5H16" stroke="#7e7e7e"/><path d="M13 817.5H16" stroke="#7e7e7e"/><path d="M13 820.5H16" stroke="#7e7e7e"/><path d="M13 823.5H16" stroke="#7e7e7e"/><path d="M0 826.5H16" stroke="#a8a8a8"/><path d="M13 828.5H16" stroke="#7e7e7e"/><path d="M13 831.5H16" stroke="#7e7e7e"/><path d="M13 834.5H16" stroke="#7e7e7e"/><path d="M13 837.5H16" stroke="#7e7e7e"/><path d="M11 840.5H16" stroke="#9a9a9a"/><path d="M13 843.5H16" stroke="#7e7e7e"/><path d="M13 845.5H16" stroke="#7e7e7e"/><path d="M13 848.5H16" stroke="#7e7e7e"/><path d="M13 851.5H16" stroke="#7e7e7e"/><path d="M0 854.5H16" stroke="#a8a8a8"/><path d="M13 857.5H16" stroke="#7e7e7e"/><path d="M13 860.5H16" stroke="#7e7e7e"/><path d="M13 862.5H16" stroke="#7e7e7e"/><path d="M13 865.5H16" stroke="#7e7e7e"/><path d="M11 868.5H16" stroke="#9a9a9a"/><path d="M13 871.5H16" stroke="#7e7e7e"/><path d="M13 874.5H16" stroke="#7e7e7e"/></svg>
<div class="a" style="left:34px;top:201px;width:16px;height:35px;background:#505050;"></div>
<span class="t" style="left:36px;top:113.5px;font-size:9.5px;color:#d4d4d4">0</span>
<span class="t" style="left:36px;top:125.5px;font-size:9.5px;color:#d4d4d4">2</span>
<span class="t" style="left:36px;top:133.5px;font-size:9.5px;color:#d4d4d4">1</span>
<span class="t" style="left:36px;top:141.5px;font-size:9.5px;color:#d4d4d4">0</span>
<span class="t" style="left:36px;top:154.5px;font-size:9.5px;color:#d4d4d4">2</span>
<span class="t" style="left:36px;top:162.5px;font-size:9.5px;color:#d4d4d4">2</span>
<span class="t" style="left:36px;top:170.5px;font-size:9.5px;color:#d4d4d4">0</span>
<span class="t" style="left:36px;top:182.5px;font-size:9.5px;color:#d4d4d4">2</span>
<span class="t" style="left:36px;top:190.5px;font-size:9.5px;color:#d4d4d4">3</span>
<span class="t" style="left:36px;top:239.5px;font-size:9.5px;color:#d4d4d4">0</span>
<span class="t" style="left:36px;top:259.5px;font-size:9.5px;color:#d4d4d4">2</span>
<span class="t" style="left:36px;top:267.5px;font-size:9.5px;color:#d4d4d4">0</span>
<span class="t" style="left:36px;top:288.5px;font-size:9.5px;color:#d4d4d4">1</span>
<span class="t" style="left:36px;top:296.5px;font-size:9.5px;color:#d4d4d4">0</span>
<span class="t" style="left:36px;top:316.5px;font-size:9.5px;color:#d4d4d4">0</span>
<span class="t" style="left:36px;top:344.5px;font-size:9.5px;color:#d4d4d4">1</span>
<span class="t" style="left:36px;top:352.5px;font-size:9.5px;color:#d4d4d4">0</span>
<span class="t" style="left:36px;top:373.5px;font-size:9.5px;color:#d4d4d4">2</span>
<span class="t" style="left:36px;top:381.5px;font-size:9.5px;color:#d4d4d4">0</span>
<span class="t" style="left:36px;top:401.5px;font-size:9.5px;color:#d4d4d4">3</span>
<span class="t" style="left:36px;top:409.5px;font-size:9.5px;color:#d4d4d4">0</span>
<span class="t" style="left:36px;top:429.5px;font-size:9.5px;color:#d4d4d4">4</span>
<span class="t" style="left:36px;top:437.5px;font-size:9.5px;color:#d4d4d4">0</span>
<span class="t" style="left:36px;top:458.5px;font-size:9.5px;color:#d4d4d4">5</span>
<span class="t" style="left:36px;top:466.5px;font-size:9.5px;color:#d4d4d4">0</span>
<span class="t" style="left:36px;top:486.5px;font-size:9.5px;color:#d4d4d4">6</span>
<span class="t" style="left:36px;top:494.5px;font-size:9.5px;color:#d4d4d4">0</span>
<span class="t" style="left:36px;top:514.5px;font-size:9.5px;color:#d4d4d4">7</span>
<span class="t" style="left:36px;top:522.5px;font-size:9.5px;color:#d4d4d4">0</span>
<span class="t" style="left:36px;top:543.5px;font-size:9.5px;color:#d4d4d4">8</span>
<span class="t" style="left:36px;top:551.5px;font-size:9.5px;color:#d4d4d4">0</span>
<span class="t" style="left:36px;top:571.5px;font-size:9.5px;color:#d4d4d4">9</span>
<span class="t" style="left:36px;top:579.5px;font-size:9.5px;color:#d4d4d4">0</span>
<span class="t" style="left:36px;top:599.5px;font-size:9.5px;color:#d4d4d4">1</span>
<span class="t" style="left:36px;top:607.5px;font-size:9.5px;color:#d4d4d4">0</span>
<span class="t" style="left:36px;top:615.5px;font-size:9.5px;color:#d4d4d4">0</span>
<span class="t" style="left:36px;top:628.5px;font-size:9.5px;color:#d4d4d4">1</span>
<span class="t" style="left:36px;top:636.5px;font-size:9.5px;color:#d4d4d4">1</span>
<span class="t" style="left:36px;top:644.5px;font-size:9.5px;color:#d4d4d4">0</span>
<span class="t" style="left:36px;top:656.5px;font-size:9.5px;color:#d4d4d4">1</span>
<span class="t" style="left:36px;top:664.5px;font-size:9.5px;color:#d4d4d4">2</span>
<span class="t" style="left:36px;top:672.5px;font-size:9.5px;color:#d4d4d4">0</span>
<span class="t" style="left:36px;top:685.5px;font-size:9.5px;color:#d4d4d4">1</span>
<span class="t" style="left:36px;top:693.5px;font-size:9.5px;color:#d4d4d4">3</span>
<span class="t" style="left:36px;top:701.5px;font-size:9.5px;color:#d4d4d4">0</span>
<span class="t" style="left:36px;top:713.5px;font-size:9.5px;color:#d4d4d4">1</span>
<span class="t" style="left:36px;top:721.5px;font-size:9.5px;color:#d4d4d4">4</span>
<span class="t" style="left:36px;top:729.5px;font-size:9.5px;color:#d4d4d4">0</span>
<span class="t" style="left:36px;top:741.5px;font-size:9.5px;color:#d4d4d4">1</span>
<span class="t" style="left:36px;top:749.5px;font-size:9.5px;color:#d4d4d4">5</span>
<span class="t" style="left:36px;top:757.5px;font-size:9.5px;color:#d4d4d4">0</span>
<span class="t" style="left:36px;top:770.5px;font-size:9.5px;color:#d4d4d4">1</span>
<span class="t" style="left:36px;top:778.5px;font-size:9.5px;color:#d4d4d4">6</span>
<span class="t" style="left:36px;top:786.5px;font-size:9.5px;color:#d4d4d4">0</span>
<span class="t" style="left:36px;top:798.5px;font-size:9.5px;color:#d4d4d4">1</span>
<span class="t" style="left:36px;top:806.5px;font-size:9.5px;color:#d4d4d4">7</span>
<span class="t" style="left:36px;top:814.5px;font-size:9.5px;color:#d4d4d4">0</span>
<span class="t" style="left:36px;top:826.5px;font-size:9.5px;color:#d4d4d4">1</span>
<span class="t" style="left:36px;top:834.5px;font-size:9.5px;color:#d4d4d4">8</span>
<span class="t" style="left:36px;top:842.5px;font-size:9.5px;color:#d4d4d4">0</span>
<span class="t" style="left:36px;top:855.5px;font-size:9.5px;color:#d4d4d4">1</span>
<span class="t" style="left:36px;top:863.5px;font-size:9.5px;color:#d4d4d4">9</span>
<span class="t" style="left:36px;top:871.5px;font-size:9.5px;color:#d4d4d4">0</span>
<span class="t" style="left:36px;top:883.5px;font-size:9.5px;color:#d4d4d4">2</span>
<span class="t" style="left:36px;top:891.5px;font-size:9.5px;color:#d4d4d4">0</span>
<span class="t" style="left:36px;top:899.5px;font-size:9.5px;color:#d4d4d4">0</span>
<span class="t" style="left:36px;top:911.5px;font-size:9.5px;color:#d4d4d4">2</span>
<span class="t" style="left:36px;top:919.5px;font-size:9.5px;color:#d4d4d4">1</span>
<span class="t" style="left:36px;top:927.5px;font-size:9.5px;color:#d4d4d4">0</span>
<span class="t" style="left:36px;top:940.5px;font-size:9.5px;color:#d4d4d4">2</span>
<span class="t" style="left:36px;top:948.5px;font-size:9.5px;color:#d4d4d4">2</span>
<span class="t" style="left:36px;top:956.5px;font-size:9.5px;color:#d4d4d4">0</span>
<span class="t" style="left:36px;top:968.5px;font-size:9.5px;color:#d4d4d4">2</span>
<span class="t" style="left:36px;top:976.5px;font-size:9.5px;color:#d4d4d4">3</span>
<div class="a" style="left:34px;top:97px;width:16px;height:16px;background:#232323;"></div>
<svg class="a" style="left:35px;top:99px;" width="13" height="13" viewBox="0 0 13 13"><path d="M0.5 0V13M0 5.5H13" stroke="#aaa" stroke-dasharray="1 1"/></svg>
<div class="a" style="left:34px;top:989px;width:16px;height:35px;background:#454545;"></div>
<div class="a" style="left:50px;top:113px;width:1687px;height:911px;background:#bababa;"></div>
<div class="a" style="left:1737px;top:113px;width:15px;height:911px;background:#383838;"></div>
<div class="a" style="left:1737px;top:113px;width:1px;height:911px;background:#202020;"></div>
<div class="a" style="left:1738px;top:113px;width:13px;height:891px;background:#9d9d9d;"></div>
<div class="a" style="left:1738px;top:1004px;width:13px;height:20px;background:#3a3a3a;"></div>
<svg class="a" style="left:1741px;top:1010px;" width="8" height="6" viewBox="0 0 8 6"><path d="M0 0H8L4.0 6Z" fill="#e0e0e0"/></svg>
<div class="a" style="left:34px;top:1024px;width:1721px;height:15px;background:#484848;"></div>
<div class="a" style="left:50px;top:1024px;width:1702px;height:1px;background:#2a2a2a;"></div>
<div class="a" style="left:51px;top:1026px;width:19px;height:10px;background:#9c9c9c;border-radius:2px"></div>
<svg class="a" style="left:53px;top:1027px;" width="15" height="9" viewBox="0 0 15 9"><circle cx="4" cy="4.5" r="3" fill="#444"/><rect x="9" y="1" width="2" height="5" fill="#444"/><rect x="9" y="7" width="2" height="1.5" fill="#444"/></svg>
<svg class="a" style="left:78px;top:1027px;" width="8" height="10" viewBox="0 0 8 10"><path d="M1 0V10" stroke="#ccc" stroke-width="1.5"/><path d="M8 0V10L3 5Z" fill="#ccc"/></svg>
<svg class="a" style="left:92px;top:1027px;" width="5" height="9" viewBox="0 0 5 9"><path d="M5 0V9L0 4.5Z" fill="#ccc"/></svg>
<span class="t" style="left:108px;top:1026.65px;font-size:11px;color:#e0e0e0;font-weight:normal;">2</span>
<svg class="a" style="left:190px;top:1028px;" width="7" height="6" viewBox="0 0 7 6"><path d="M0 0H7L3.5 6Z" fill="#e0e0e0"/></svg>
<svg class="a" style="left:209px;top:1027px;" width="5" height="9" viewBox="0 0 5 9"><path d="M0 0V9L5 4.5Z" fill="#777"/></svg>
<svg class="a" style="left:222px;top:1027px;" width="8" height="10" viewBox="0 0 8 10"><path d="M7 0V10" stroke="#777" stroke-width="1.5"/><path d="M0 0V10L5 5Z" fill="#777"/></svg>
<svg class="a" style="left:237px;top:1025px;" width="15" height="14" viewBox="0 0 15 14"><circle cx="7" cy="7" r="6.3" fill="none" stroke="#ddd" stroke-width="1.2"/><path d="M4 3H8L10 5V11H4Z" fill="#ddd"/><circle cx="14" cy="13" r="0.8" fill="#ddd"/></svg>
<svg class="a" style="left:261px;top:1026px;" width="13" height="12" viewBox="0 0 13 12"><circle cx="6.5" cy="6" r="5.7" fill="#3fae2e"/></svg>
<span class="t" style="left:277px;top:1027.0px;font-size:10px;color:#d0d0d0;font-weight:normal;letter-spacing:-0.45px;">Ohne Fehler</span>
<svg class="a" style="left:350px;top:1030px;" width="6" height="4" viewBox="0 0 6 4"><path d="M0 0H6L3.0 4Z" fill="#d0d0d0"/></svg>
<div class="a" style="left:358px;top:1024px;width:32px;height:15px;background:#3b3b3b;"></div>
<svg class="a" style="left:363px;top:1026px;" width="5" height="10" viewBox="0 0 5 10"><path d="M5 0V10L0 5.0Z" fill="#e0e0e0"/></svg>
<div class="a" style="left:390px;top:1025px;width:1237px;height:14px;background:#a3a3a3;"></div>
<div class="a" style="left:1627px;top:1025px;width:88px;height:14px;background:#3b3b3b;"></div>
<svg class="a" style="left:1706px;top:1026px;" width="5" height="10" viewBox="0 0 5 10"><path d="M0 0V10L5 5.0Z" fill="#e0e0e0"/></svg>
<div class="a" style="left:1717px;top:1024px;width:2px;height:15px;background:#2f2f2f;"></div>
<svg class="a" style="left:1720px;top:1025px;" width="15" height="13" viewBox="0 0 15 13"><rect x="0.5" y="0.5" width="14" height="12" fill="#333" stroke="#eee"/><path d="M7.5 0V13" stroke="#eee"/></svg>
<div class="a" style="left:1737px;top:1024px;width:15px;height:15px;background:#3a3a3a;"></div>
<svg class="a" style="left:1739px;top:1026px;" width="12" height="12" viewBox="0 0 12 12"><path d="M10 2h1v1h-1zM8 4h1v1h-1zM10 4h1v1h-1zM6 6h1v1h-1zM8 6h1v1h-1zM10 6h1v1h-1zM4 8h1v1h-1zM6 8h1v1h-1zM8 8h1v1h-1zM10 8h1v1h-1zM2 10h1v1h-1zM4 10h1v1h-1zM6 10h1v1h-1zM8 10h1v1h-1zM10 10h1v1h-1z" fill="#ccc"/></svg>
<div class="a" style="left:0px;top:1039px;width:1920px;height:2px;background:#1d2b33;"></div>
<div class="a" style="left:1752px;top:78px;width:3px;height:963px;background:#2e2e2e;"></div>
<div class="a" style="left:1755px;top:78px;width:165px;height:963px;background:#494949;"></div>
<div class="a" style="left:1755px;top:78px;width:165px;height:12px;background:#383838;"></div>
<svg class="a" style="left:1904px;top:81px;" width="9" height="7" viewBox="0 0 9 7"><path d="M9 0L5 3.5L9 7ZM4 0L0 3.5L4 7Z" fill="#ddd"/></svg>
<div class="a" style="left:1915px;top:90px;width:1px;height:951px;background:#3f3f3f;"></div>
<div class="a" style="left:1828px;top:91px;width:1px;height:5px;background:#1c1c1c;"></div>
<div class="a" style="left:1830px;top:91px;width:1px;height:5px;background:#1c1c1c;"></div>
<div class="a" style="left:1832px;top:91px;width:1px;height:5px;background:#1c1c1c;"></div>
<div class="a" style="left:1834px;top:91px;width:1px;height:5px;background:#1c1c1c;"></div>
<div class="a" style="left:1836px;top:91px;width:1px;height:5px;background:#1c1c1c;"></div>
<div class="a" style="left:1838px;top:91px;width:1px;height:5px;background:#1c1c1c;"></div>
<div class="a" style="left:1840px;top:91px;width:1px;height:5px;background:#1c1c1c;"></div>
<div class="a" style="left:1842px;top:91px;width:1px;height:5px;background:#1c1c1c;"></div>
<div class="a" style="left:1844px;top:91px;width:1px;height:5px;background:#1c1c1c;"></div>
<div class="a" style="left:1760px;top:101px;width:155px;height:24px;background:#383838;border-radius:2px"></div>
<svg class="a" style="left:1765px;top:104px;" width="18" height="17" viewBox="0 0 18 17"><path d="M1 3H7V16H1ZM10 3H16V16H10Z" fill="#d6d6d6"/><path d="M8.5 1V17" stroke="#eee"/><path d="M4 1L7 3H4ZM12 1L15 3H12Z" fill="#ddd"/></svg>
<span class="t" style="left:1792px;top:108.5px;font-size:10px;color:#e6e6e6;font-weight:bold;">Seiten</span>
<svg class="a" style="left:1767px;top:132px;" width="17" height="17" viewBox="0 0 17 17"><path d="M8.5 1L16 5L8.5 9L1 5Z" fill="#d6d6d6"/><path d="M1 9L8.5 13L16 9" stroke="#d6d6d6" stroke-width="2" fill="none"/></svg>
<span class="t" style="left:1792px;top:136.5px;font-size:10px;color:#e6e6e6;font-weight:bold;">Ebenen</span>
<svg class="a" style="left:1766px;top:162px;" width="18" height="13" viewBox="0 0 18 13"><rect x="1" y="2" width="9" height="9" rx="3" fill="none" stroke="#ddd" stroke-width="2"/><rect x="8" y="2" width="9" height="9" rx="3" fill="none" stroke="#ddd" stroke-width="2"/><path d="M5 6.5H13" stroke="#ddd" stroke-width="2"/></svg>
<span class="t" style="left:1792px;top:164.5px;font-size:10px;color:#e6e6e6;font-weight:bold;">Verknüpfungen</span>
<div class="a" style="left:1755px;top:185px;width:165px;height:1px;background:#2f2f2f;"></div>
<div class="a" style="left:1755px;top:186px;width:165px;height:1px;background:#545454;"></div>
<div class="a" style="left:1828px;top:189px;width:1px;height:5px;background:#1c1c1c;"></div>
<div class="a" style="left:1830px;top:189px;width:1px;height:5px;background:#1c1c1c;"></div>
<div class="a" style="left:1832px;top:189px;width:1px;height:5px;background:#1c1c1c;"></div>
<div class="a" style="left:1834px;top:189px;width:1px;height:5px;background:#1c1c1c;"></div>
<div class="a" style="left:1836px;top:189px;width:1px;height:5px;background:#1c1c1c;"></div>
<div class="a" style="left:1838px;top:189px;width:1px;height:5px;background:#1c1c1c;"></div>
<div class="a" style="left:1840px;top:189px;width:1px;height:5px;background:#1c1c1c;"></div>
<div class="a" style="left:1842px;top:189px;width:1px;height:5px;background:#1c1c1c;"></div>
<div class="a" style="left:1844px;top:189px;width:1px;height:5px;background:#1c1c1c;"></div>
<svg class="a" style="left:1765px;top:202px;" width="20" height="16" viewBox="0 0 20 16"><path d="M10 1Q19 1 19 8Q19 11 16 11Q13 11 13 13Q13 15 10 15Q1 15 1 8Q1 1 10 1Z" fill="#d6d6d6"/><circle cx="6" cy="6" r="1.6" fill="#494949"/><circle cx="11" cy="4.5" r="1.6" fill="#494949"/><circle cx="5" cy="10.5" r="1.6" fill="#494949"/><circle cx="15" cy="6.5" r="1.4" fill="#494949"/></svg>
<span class="t" style="left:1792px;top:206.5px;font-size:10px;color:#e6e6e6;font-weight:bold;">Farbe</span>
<div class="a" style="left:1755px;top:226px;width:165px;height:1px;background:#2f2f2f;"></div>
<div class="a" style="left:1755px;top:227px;width:165px;height:1px;background:#545454;"></div>
<div class="a" style="left:633px;top:113px;width:596px;height:12px;background:#111111;"></div>
<div class="a" style="left:634px;top:113px;width:594px;height:11px;background:#fbf8eb;"></div>
<div class="a" style="left:727px;top:113px;width:1px;height:12px;background:#e8eadf;"></div>
<div class="a" style="left:950px;top:113px;width:1px;height:12px;background:#e3e6dc;"></div>
<div class="a" style="left:1126px;top:113px;width:1px;height:12px;background:#e8eadf;"></div>
<div class="a" style="left:633px;top:315px;width:596px;height:597px;background:#111111;"></div>
<div class="a" style="left:634px;top:316px;width:594px;height:595px;background:#fbf8eb;"></div>
<div class="a" style="left:634px;top:316px;width:594px;height:595px;overflow:hidden"><div class="a" style="left:-634px;top:-316px;width:1920px;height:1041px">
<div class="a" style="left:727px;top:316px;width:1px;height:420px;background:#eceee3;"></div>
<div class="a" style="left:950px;top:316px;width:1px;height:441px;background:#dce5db;"></div>
<div class="a" style="left:1126px;top:316px;width:1px;height:416px;background:#e4eadf;"></div>
<svg class="a" style="left:852px;top:304px;" width="71" height="71" viewBox="0 0 71 71"><g stroke="#eef0e4"><path d="M35.50 35.50L35.50 5.50M35.50 19.00L42.50 12.00M35.50 19.00L28.50 12.00M35.50 11.50L40.17 6.83M35.50 11.50L30.83 6.83M35.50 35.50L9.52 20.50M21.21 27.25L18.65 17.69M21.21 27.25L11.65 29.81M14.72 23.50L13.01 17.12M14.72 23.50L8.34 25.21M35.50 35.50L9.52 50.50M21.21 43.75L11.65 41.19M21.21 43.75L18.65 53.31M14.72 47.50L8.34 45.79M14.72 47.50L13.01 53.88M35.50 35.50L35.50 65.50M35.50 52.00L28.50 59.00M35.50 52.00L42.50 59.00M35.50 59.50L30.83 64.17M35.50 59.50L40.17 64.17M35.50 35.50L61.48 50.50M49.79 43.75L52.35 53.31M49.79 43.75L59.35 41.19M56.28 47.50L57.99 53.88M56.28 47.50L62.66 45.79M35.50 35.50L61.48 20.50M49.79 27.25L59.35 29.81M49.79 27.25L52.35 17.69M56.28 23.50L62.66 25.21M56.28 23.50L57.99 17.12" stroke-width="4.5" stroke-linecap="round" fill="none"/><circle cx="35.5" cy="35.5" r="7.5" fill="none" stroke-width="3.6"/></g></svg>
<svg class="a" style="left:665px;top:362px;" width="32" height="32" viewBox="0 0 32 32"><g stroke="#eff0e6"><path d="M16.00 16.00L16.00 3.00M16.00 8.85L19.03 5.82M16.00 8.85L12.97 5.82M16.00 5.60L18.02 3.58M16.00 5.60L13.98 3.58M16.00 16.00L4.74 9.50M9.81 12.43L8.70 8.28M9.81 12.43L5.66 13.54M6.99 10.80L6.25 8.04M6.99 10.80L4.23 11.54M16.00 16.00L4.74 22.50M9.81 19.58L5.66 18.46M9.81 19.58L8.70 23.72M6.99 21.20L4.23 20.46M6.99 21.20L6.25 23.96M16.00 16.00L16.00 29.00M16.00 23.15L12.97 26.18M16.00 23.15L19.03 26.18M16.00 26.40L13.98 28.42M16.00 26.40L18.02 28.42M16.00 16.00L27.26 22.50M22.19 19.58L23.30 23.72M22.19 19.58L26.34 18.46M25.01 21.20L25.75 23.96M25.01 21.20L27.77 20.46M16.00 16.00L27.26 9.50M22.19 12.43L26.34 13.54M22.19 12.43L23.30 8.28M25.01 10.80L27.77 11.54M25.01 10.80L25.75 8.04" stroke-width="2" stroke-linecap="round" fill="none"/><circle cx="16.0" cy="16.0" r="3.25" fill="none" stroke-width="1.6"/></g></svg>
<svg class="a" style="left:1127px;top:330px;" width="53" height="53" viewBox="0 0 53 53"><g stroke="#dfe8de"><path d="M26.50 26.50L26.50 4.50M26.50 14.40L31.63 9.27M26.50 14.40L21.37 9.27M26.50 8.90L29.92 5.48M26.50 8.90L23.08 5.48M26.50 26.50L7.45 15.50M16.02 20.45L14.14 13.44M16.02 20.45L9.01 22.33M11.26 17.70L10.01 13.02M11.26 17.70L6.58 18.95M26.50 26.50L7.45 37.50M16.02 32.55L9.01 30.67M16.02 32.55L14.14 39.56M11.26 35.30L6.58 34.05M11.26 35.30L10.01 39.98M26.50 26.50L26.50 48.50M26.50 38.60L21.37 43.73M26.50 38.60L31.63 43.73M26.50 44.10L23.08 47.52M26.50 44.10L29.92 47.52M26.50 26.50L45.55 37.50M36.98 32.55L38.86 39.56M36.98 32.55L43.99 30.67M41.74 35.30L42.99 39.98M41.74 35.30L46.42 34.05M26.50 26.50L45.55 15.50M36.98 20.45L43.99 22.33M36.98 20.45L38.86 13.44M41.74 17.70L46.42 18.95M41.74 17.70L42.99 13.02" stroke-width="3.5" stroke-linecap="round" fill="none"/><circle cx="26.5" cy="26.5" r="5.5" fill="none" stroke-width="2.8000000000000003"/></g></svg>
<svg class="a" style="left:1144px;top:499px;" width="32" height="32" viewBox="0 0 32 32"><g stroke="#eef0e5"><path d="M16.00 16.00L16.00 3.00M16.00 8.85L19.03 5.82M16.00 8.85L12.97 5.82M16.00 5.60L18.02 3.58M16.00 5.60L13.98 3.58M16.00 16.00L4.74 9.50M9.81 12.43L8.70 8.28M9.81 12.43L5.66 13.54M6.99 10.80L6.25 8.04M6.99 10.80L4.23 11.54M16.00 16.00L4.74 22.50M9.81 19.58L5.66 18.46M9.81 19.58L8.70 23.72M6.99 21.20L4.23 20.46M6.99 21.20L6.25 23.96M16.00 16.00L16.00 29.00M16.00 23.15L12.97 26.18M16.00 23.15L19.03 26.18M16.00 26.40L13.98 28.42M16.00 26.40L18.02 28.42M16.00 16.00L27.26 22.50M22.19 19.58L23.30 23.72M22.19 19.58L26.34 18.46M25.01 21.20L25.75 23.96M25.01 21.20L27.77 20.46M16.00 16.00L27.26 9.50M22.19 12.43L26.34 13.54M22.19 12.43L23.30 8.28M25.01 10.80L27.77 11.54M25.01 10.80L25.75 8.04" stroke-width="2.2" stroke-linecap="round" fill="none"/><circle cx="16.0" cy="16.0" r="3.25" fill="none" stroke-width="1.7600000000000002"/></g></svg>
<svg class="a" style="left:863px;top:572px;" width="48" height="48" viewBox="0 0 48 48"><g stroke="#eceee3"><path d="M24.00 24.00L24.00 4.00M24.00 13.00L28.67 8.33M24.00 13.00L19.33 8.33M24.00 8.00L27.11 4.89M24.00 8.00L20.89 4.89M24.00 24.00L6.68 14.00M14.47 18.50L12.77 12.12M14.47 18.50L8.10 20.21M10.14 16.00L9.00 11.75M10.14 16.00L5.89 17.14M24.00 24.00L6.68 34.00M14.47 29.50L8.10 27.79M14.47 29.50L12.77 35.88M10.14 32.00L5.89 30.86M10.14 32.00L9.00 36.25M24.00 24.00L24.00 44.00M24.00 35.00L19.33 39.67M24.00 35.00L28.67 39.67M24.00 40.00L20.89 43.11M24.00 40.00L27.11 43.11M24.00 24.00L41.32 34.00M33.53 29.50L35.23 35.88M33.53 29.50L39.90 27.79M37.86 32.00L39.00 36.25M37.86 32.00L42.11 30.86M24.00 24.00L41.32 14.00M33.53 18.50L39.90 20.21M33.53 18.50L35.23 12.12M37.86 16.00L42.11 17.14M37.86 16.00L39.00 11.75" stroke-width="3.2" stroke-linecap="round" fill="none"/><circle cx="24.0" cy="24.0" r="5.0" fill="none" stroke-width="2.5600000000000005"/></g></svg>
<svg class="a" style="left:813px;top:808px;" width="46" height="46" viewBox="0 0 46 46"><g stroke="#eceee3"><path d="M23.00 23.00L23.00 4.00M23.00 12.55L27.43 8.12M23.00 12.55L18.57 8.12M23.00 7.80L25.96 4.84M23.00 7.80L20.04 4.84M23.00 23.00L6.55 13.50M13.95 17.77L12.33 11.72M13.95 17.77L7.89 19.40M9.84 15.40L8.75 11.36M9.84 15.40L5.80 16.48M23.00 23.00L6.55 32.50M13.95 28.23L7.89 26.60M13.95 28.23L12.33 34.28M9.84 30.60L5.80 29.52M9.84 30.60L8.75 34.64M23.00 23.00L23.00 42.00M23.00 33.45L18.57 37.88M23.00 33.45L27.43 37.88M23.00 38.20L20.04 41.16M23.00 38.20L25.96 41.16M23.00 23.00L39.45 32.50M32.05 28.23L33.67 34.28M32.05 28.23L38.11 26.60M36.16 30.60L37.25 34.64M36.16 30.60L40.20 29.52M23.00 23.00L39.45 13.50M32.05 17.77L38.11 19.40M32.05 17.77L33.67 11.72M36.16 15.40L40.20 16.48M36.16 15.40L37.25 11.36" stroke-width="3" stroke-linecap="round" fill="none"/><circle cx="23.0" cy="23.0" r="4.75" fill="none" stroke-width="2.4000000000000004"/></g></svg>
<svg class="a" style="left:678px;top:733px;" width="99" height="114" viewBox="0 0 99 114"><path d="M39.5 8Q39.5 0.5 49.0 0.5Q58.5 0.5 58.5 8" fill="none" stroke="#e5ece0" stroke-width="1.5"/><rect x="38.5" y="5" width="21" height="17" fill="#e5ece0"/><circle cx="49.0" cy="64" r="47" fill="#e5ece0"/><polygon points="49.00,53.39 39.81,58.69 39.81,69.31 49.00,74.61 58.19,69.31 58.19,58.69" fill="none" stroke="#f3f4e9" stroke-width="3.79"/><circle cx="49.00" cy="43.53" r="3.41" fill="#f3f4e9"/><path d="M49.00 33.68L55.76 26.07M49.00 33.68L53.62 21.77M49.00 33.68L49.00 19.27M49.00 33.68L44.38 21.77M49.00 33.68L42.24 26.07" stroke="#f3f4e9" stroke-width="3.18" stroke-linecap="round"/><circle cx="31.27" cy="53.77" r="3.41" fill="#f3f4e9"/><path d="M22.74 48.84L19.54 39.18M22.74 48.84L14.74 38.88M22.74 48.84L10.27 41.64M22.74 48.84L10.12 46.89M22.74 48.84L12.78 50.89" stroke="#f3f4e9" stroke-width="3.18" stroke-linecap="round"/><circle cx="31.27" cy="74.23" r="3.41" fill="#f3f4e9"/><path d="M22.74 79.16L12.78 77.11M22.74 79.16L10.12 81.11M22.74 79.16L10.27 86.36M22.74 79.16L14.74 89.12M22.74 79.16L19.54 88.82" stroke="#f3f4e9" stroke-width="3.18" stroke-linecap="round"/><circle cx="49.00" cy="84.47" r="3.41" fill="#f3f4e9"/><path d="M49.00 94.32L42.24 101.93M49.00 94.32L44.38 106.23M49.00 94.32L49.00 108.73M49.00 94.32L53.62 106.23M49.00 94.32L55.76 101.93" stroke="#f3f4e9" stroke-width="3.18" stroke-linecap="round"/><circle cx="66.73" cy="74.23" r="3.41" fill="#f3f4e9"/><path d="M75.26 79.16L78.46 88.82M75.26 79.16L83.26 89.12M75.26 79.16L87.73 86.36M75.26 79.16L87.88 81.11M75.26 79.16L85.22 77.11" stroke="#f3f4e9" stroke-width="3.18" stroke-linecap="round"/><circle cx="66.73" cy="53.77" r="3.41" fill="#f3f4e9"/><path d="M75.26 48.84L85.22 50.89M75.26 48.84L87.88 46.89M75.26 48.84L87.73 41.64M75.26 48.84L83.26 38.88M75.26 48.84L78.46 39.18" stroke="#f3f4e9" stroke-width="3.18" stroke-linecap="round"/><circle cx="49.0" cy="64" r="4.55" fill="#f3f4e9" opacity="0.5"/></svg>
<svg class="a" style="left:1078px;top:731px;" width="99" height="116" viewBox="0 0 99 116"><path d="M40.0 11Q40.0 0.5 49.0 0.5Q58.0 0.5 58.0 11" fill="none" stroke="#d7e6dc" stroke-width="1.5"/><rect x="39.0" y="8" width="20" height="16" fill="#d7e6dc"/><circle cx="49.0" cy="66" r="47" fill="#d7e6dc"/><polygon points="49.00,55.39 39.81,60.69 39.81,71.31 49.00,76.61 58.19,71.31 58.19,60.69" fill="none" stroke="#fbf8eb" stroke-width="3.79"/><circle cx="49.00" cy="45.53" r="3.41" fill="#fbf8eb"/><path d="M49.00 35.68L55.76 28.07M49.00 35.68L53.62 23.77M49.00 35.68L49.00 21.27M49.00 35.68L44.38 23.77M49.00 35.68L42.24 28.07" stroke="#fbf8eb" stroke-width="3.18" stroke-linecap="round"/><circle cx="31.27" cy="55.77" r="3.41" fill="#fbf8eb"/><path d="M22.74 50.84L19.54 41.18M22.74 50.84L14.74 40.88M22.74 50.84L10.27 43.64M22.74 50.84L10.12 48.89M22.74 50.84L12.78 52.89" stroke="#fbf8eb" stroke-width="3.18" stroke-linecap="round"/><circle cx="31.27" cy="76.23" r="3.41" fill="#fbf8eb"/><path d="M22.74 81.16L12.78 79.11M22.74 81.16L10.12 83.11M22.74 81.16L10.27 88.36M22.74 81.16L14.74 91.12M22.74 81.16L19.54 90.82" stroke="#fbf8eb" stroke-width="3.18" stroke-linecap="round"/><circle cx="49.00" cy="86.47" r="3.41" fill="#fbf8eb"/><path d="M49.00 96.32L42.24 103.93M49.00 96.32L44.38 108.23M49.00 96.32L49.00 110.73M49.00 96.32L53.62 108.23M49.00 96.32L55.76 103.93" stroke="#fbf8eb" stroke-width="3.18" stroke-linecap="round"/><circle cx="66.73" cy="76.23" r="3.41" fill="#fbf8eb"/><path d="M75.26 81.16L78.46 90.82M75.26 81.16L83.26 91.12M75.26 81.16L87.73 88.36M75.26 81.16L87.88 83.11M75.26 81.16L85.22 79.11" stroke="#fbf8eb" stroke-width="3.18" stroke-linecap="round"/><circle cx="66.73" cy="55.77" r="3.41" fill="#fbf8eb"/><path d="M75.26 50.84L85.22 52.89M75.26 50.84L87.88 48.89M75.26 50.84L87.73 43.64M75.26 50.84L83.26 40.88M75.26 50.84L78.46 41.18" stroke="#fbf8eb" stroke-width="3.18" stroke-linecap="round"/><circle cx="49.0" cy="66" r="4.55" fill="#fbf8eb" opacity="0.5"/></svg>
<svg class="a" style="left:886px;top:755px;" width="129" height="152" viewBox="0 0 129 152"><path d="M51.5 14Q51.5 0.5 64.0 0.5Q76.5 0.5 76.5 14" fill="none" stroke="#cde2d9" stroke-width="1.5"/><rect x="50.5" y="11" width="27" height="19" fill="#cde2d9"/><circle cx="64.0" cy="87" r="62" fill="#cde2d9"/><polygon points="64.00,73.00 51.88,80.00 51.88,94.00 64.00,101.00 76.12,94.00 76.12,80.00" fill="none" stroke="#fbf8eb" stroke-width="5.00"/><circle cx="64.00" cy="60.00" r="4.50" fill="#fbf8eb"/><path d="M64.00 47.00L72.92 36.97M64.00 47.00L70.10 31.30M64.00 47.00L64.00 28.00M64.00 47.00L57.90 31.30M64.00 47.00L55.08 36.97" stroke="#fbf8eb" stroke-width="4.20" stroke-linecap="round"/><circle cx="40.62" cy="73.50" r="4.50" fill="#fbf8eb"/><path d="M29.36 67.00L25.13 54.26M29.36 67.00L18.81 53.86M29.36 67.00L12.90 57.50M29.36 67.00L12.71 64.43M29.36 67.00L16.21 69.71" stroke="#fbf8eb" stroke-width="4.20" stroke-linecap="round"/><circle cx="40.62" cy="100.50" r="4.50" fill="#fbf8eb"/><path d="M29.36 107.00L16.21 104.29M29.36 107.00L12.71 109.57M29.36 107.00L12.90 116.50M29.36 107.00L18.81 120.14M29.36 107.00L25.13 119.74" stroke="#fbf8eb" stroke-width="4.20" stroke-linecap="round"/><circle cx="64.00" cy="114.00" r="4.50" fill="#fbf8eb"/><path d="M64.00 127.00L55.08 137.03M64.00 127.00L57.90 142.70M64.00 127.00L64.00 146.00M64.00 127.00L70.10 142.70M64.00 127.00L72.92 137.03" stroke="#fbf8eb" stroke-width="4.20" stroke-linecap="round"/><circle cx="87.38" cy="100.50" r="4.50" fill="#fbf8eb"/><path d="M98.64 107.00L102.87 119.74M98.64 107.00L109.19 120.14M98.64 107.00L115.10 116.50M98.64 107.00L115.29 109.57M98.64 107.00L111.79 104.29" stroke="#fbf8eb" stroke-width="4.20" stroke-linecap="round"/><circle cx="87.38" cy="73.50" r="4.50" fill="#fbf8eb"/><path d="M98.64 67.00L111.79 69.71M98.64 67.00L115.29 64.43M98.64 67.00L115.10 57.50M98.64 67.00L109.19 53.86M98.64 67.00L102.87 54.26" stroke="#fbf8eb" stroke-width="4.20" stroke-linecap="round"/><circle cx="64.0" cy="87" r="6.00" fill="#fbf8eb" opacity="0.5"/></svg>
<svg class="a" style="left:774px;top:391px;" width="16" height="16" viewBox="0 0 16 16"><path d="M8.00 6.00L8.00 2.80M8.00 3.80L9.67 1.81M8.00 3.80L6.33 1.81M6.27 7.00L3.50 5.40M4.36 5.90L3.47 3.46M4.36 5.90L1.80 6.35M6.27 9.00L3.50 10.60M4.36 10.10L1.80 9.65M4.36 10.10L3.47 12.54M8.00 10.00L8.00 13.20M8.00 12.20L6.33 14.19M8.00 12.20L9.67 14.19M9.73 9.00L12.50 10.60M11.64 10.10L12.53 12.54M11.64 10.10L14.20 9.65M9.73 7.00L12.50 5.40M11.64 5.90L14.20 6.35M11.64 5.90L12.53 3.46" stroke="#a2392b" stroke-width="1.9"/><circle cx="8.00" cy="1.70" r="1.7" fill="#a2392b"/><circle cx="2.54" cy="4.85" r="1.7" fill="#a2392b"/><circle cx="2.54" cy="11.15" r="1.7" fill="#a2392b"/><circle cx="8.00" cy="14.30" r="1.7" fill="#a2392b"/><circle cx="13.46" cy="11.15" r="1.7" fill="#a2392b"/><circle cx="13.46" cy="4.85" r="1.7" fill="#a2392b"/><polygon points="10.20,8.00 9.10,6.09 6.90,6.09 5.80,8.00 6.90,9.91 9.10,9.91" fill="none" stroke="#a2392b" stroke-width="1.4"/></svg>
<svg class="a" style="left:1071px;top:391px;" width="16" height="16" viewBox="0 0 16 16"><path d="M8.00 6.00L8.00 2.80M8.00 3.80L9.67 1.81M8.00 3.80L6.33 1.81M6.27 7.00L3.50 5.40M4.36 5.90L3.47 3.46M4.36 5.90L1.80 6.35M6.27 9.00L3.50 10.60M4.36 10.10L1.80 9.65M4.36 10.10L3.47 12.54M8.00 10.00L8.00 13.20M8.00 12.20L6.33 14.19M8.00 12.20L9.67 14.19M9.73 9.00L12.50 10.60M11.64 10.10L12.53 12.54M11.64 10.10L14.20 9.65M9.73 7.00L12.50 5.40M11.64 5.90L14.20 6.35M11.64 5.90L12.53 3.46" stroke="#a2392b" stroke-width="1.9"/><circle cx="8.00" cy="1.70" r="1.7" fill="#a2392b"/><circle cx="2.54" cy="4.85" r="1.7" fill="#a2392b"/><circle cx="2.54" cy="11.15" r="1.7" fill="#a2392b"/><circle cx="8.00" cy="14.30" r="1.7" fill="#a2392b"/><circle cx="13.46" cy="11.15" r="1.7" fill="#a2392b"/><circle cx="13.46" cy="4.85" r="1.7" fill="#a2392b"/><polygon points="10.20,8.00 9.10,6.09 6.90,6.09 5.80,8.00 6.90,9.91 9.10,9.91" fill="none" stroke="#a2392b" stroke-width="1.4"/></svg>
<span class="t" style="left:632px;width:300px;text-align:center;top:413.30px;font-size:22px;color:#a2392b;font-family:'Liberation Serif';font-style:italic;transform:skewX(-4deg);letter-spacing:-0.2px">Alkoholfreies</span>
<span class="t" style="left:930px;width:300px;text-align:center;top:413.30px;font-size:22px;color:#a2392b;font-family:'Liberation Serif';font-style:italic;transform:skewX(-4deg);letter-spacing:-0.2px">Vorspeisen</span>
<div class="a" style="left:669px;top:436.80px;width:216px;height:14px;display:flex;font-size:12px;line-height:1;color:#6aaaa7;font-weight:bold;font-family:'Liberation Serif';letter-spacing:0.8px;white-space:nowrap"><span>Mineralwasser</span><span style="flex:1;margin:0 3px 0 4px;background:radial-gradient(circle at 1.5px 1.5px,#6aaaa7 1.2px,transparent 1.45px) right 8.2px/7.9px 3px repeat-x"></span><span>2,00 €</span></div>
<div class="a" style="left:669px;top:452.80px;width:216px;height:14px;display:flex;font-size:12px;line-height:1;color:#6aaaa7;font-weight:bold;font-family:'Liberation Serif';letter-spacing:0.8px;white-space:nowrap"><span>Verschiedene Limonaden</span><span style="flex:1;margin:0 3px 0 4px;background:radial-gradient(circle at 1.5px 1.5px,#6aaaa7 1.2px,transparent 1.45px) right 8.2px/7.9px 3px repeat-x"></span><span>2,50 €</span></div>
<div class="a" style="left:669px;top:468.80px;width:216px;height:14px;display:flex;font-size:12px;line-height:1;color:#6aaaa7;font-weight:bold;font-family:'Liberation Serif';letter-spacing:0.8px;white-space:nowrap"><span>Diverse Säfte</span><span style="flex:1;margin:0 3px 0 4px;background:radial-gradient(circle at 1.5px 1.5px,#6aaaa7 1.2px,transparent 1.45px) right 8.2px/7.9px 3px repeat-x"></span><span>2,20 €</span></div>
<span class="t" style="left:967px;top:436.8px;font-size:12px;color:#6aaaa7;font-weight:bold;font-family:'Liberation Serif';letter-spacing:0.8px;">Klare Flusskrebssuppe mit Zucchini</span>
<span class="t" style="left:967px;top:452.8px;font-size:12px;color:#6aaaa7;font-weight:bold;font-family:'Liberation Serif';letter-spacing:0.8px;">Antipasti-Variationen</span>
<span class="t" style="left:967px;top:468.8px;font-size:12px;color:#6aaaa7;font-weight:bold;font-family:'Liberation Serif';letter-spacing:0.8px;">Deftige Brühe vom Wild</span>
<svg class="a" style="left:774px;top:511px;" width="16" height="16" viewBox="0 0 16 16"><path d="M8.00 6.00L8.00 2.80M8.00 3.80L9.67 1.81M8.00 3.80L6.33 1.81M6.27 7.00L3.50 5.40M4.36 5.90L3.47 3.46M4.36 5.90L1.80 6.35M6.27 9.00L3.50 10.60M4.36 10.10L1.80 9.65M4.36 10.10L3.47 12.54M8.00 10.00L8.00 13.20M8.00 12.20L6.33 14.19M8.00 12.20L9.67 14.19M9.73 9.00L12.50 10.60M11.64 10.10L12.53 12.54M11.64 10.10L14.20 9.65M9.73 7.00L12.50 5.40M11.64 5.90L14.20 6.35M11.64 5.90L12.53 3.46" stroke="#a2392b" stroke-width="1.9"/><circle cx="8.00" cy="1.70" r="1.7" fill="#a2392b"/><circle cx="2.54" cy="4.85" r="1.7" fill="#a2392b"/><circle cx="2.54" cy="11.15" r="1.7" fill="#a2392b"/><circle cx="8.00" cy="14.30" r="1.7" fill="#a2392b"/><circle cx="13.46" cy="11.15" r="1.7" fill="#a2392b"/><circle cx="13.46" cy="4.85" r="1.7" fill="#a2392b"/><polygon points="10.20,8.00 9.10,6.09 6.90,6.09 5.80,8.00 6.90,9.91 9.10,9.91" fill="none" stroke="#a2392b" stroke-width="1.4"/></svg>
<svg class="a" style="left:1071px;top:511px;" width="16" height="16" viewBox="0 0 16 16"><path d="M8.00 6.00L8.00 2.80M8.00 3.80L9.67 1.81M8.00 3.80L6.33 1.81M6.27 7.00L3.50 5.40M4.36 5.90L3.47 3.46M4.36 5.90L1.80 6.35M6.27 9.00L3.50 10.60M4.36 10.10L1.80 9.65M4.36 10.10L3.47 12.54M8.00 10.00L8.00 13.20M8.00 12.20L6.33 14.19M8.00 12.20L9.67 14.19M9.73 9.00L12.50 10.60M11.64 10.10L12.53 12.54M11.64 10.10L14.20 9.65M9.73 7.00L12.50 5.40M11.64 5.90L14.20 6.35M11.64 5.90L12.53 3.46" stroke="#a2392b" stroke-width="1.9"/><circle cx="8.00" cy="1.70" r="1.7" fill="#a2392b"/><circle cx="2.54" cy="4.85" r="1.7" fill="#a2392b"/><circle cx="2.54" cy="11.15" r="1.7" fill="#a2392b"/><circle cx="8.00" cy="14.30" r="1.7" fill="#a2392b"/><circle cx="13.46" cy="11.15" r="1.7" fill="#a2392b"/><circle cx="13.46" cy="4.85" r="1.7" fill="#a2392b"/><polygon points="10.20,8.00 9.10,6.09 6.90,6.09 5.80,8.00 6.90,9.91 9.10,9.91" fill="none" stroke="#a2392b" stroke-width="1.4"/></svg>
<span class="t" style="left:632px;width:300px;text-align:center;top:533.30px;font-size:22px;color:#a2392b;font-family:'Liberation Serif';font-style:italic;transform:skewX(-4deg);letter-spacing:-0.2px">Beschwipstes</span>
<span class="t" style="left:930px;width:300px;text-align:center;top:533.30px;font-size:22px;color:#a2392b;font-family:'Liberation Serif';font-style:italic;transform:skewX(-4deg);letter-spacing:-0.2px">Hauptgang</span>
<div class="a" style="left:669px;top:556.80px;width:216px;height:14px;display:flex;font-size:12px;line-height:1;color:#6aaaa7;font-weight:bold;font-family:'Liberation Serif';letter-spacing:0.8px;white-space:nowrap"><span>Frisches Pils vom Fass</span><span style="flex:1;margin:0 3px 0 4px;background:radial-gradient(circle at 1.5px 1.5px,#6aaaa7 1.2px,transparent 1.45px) right 8.2px/7.9px 3px repeat-x"></span><span>3,00 €</span></div>
<div class="a" style="left:669px;top:572.80px;width:216px;height:14px;display:flex;font-size:12px;line-height:1;color:#6aaaa7;font-weight:bold;font-family:'Liberation Serif';letter-spacing:0.8px;white-space:nowrap"><span>Rotwein, trocken</span><span style="flex:1;margin:0 3px 0 4px;background:radial-gradient(circle at 1.5px 1.5px,#6aaaa7 1.2px,transparent 1.45px) right 8.2px/7.9px 3px repeat-x"></span><span>4,50 €</span></div>
<div class="a" style="left:669px;top:588.80px;width:216px;height:14px;display:flex;font-size:12px;line-height:1;color:#6aaaa7;font-weight:bold;font-family:'Liberation Serif';letter-spacing:0.8px;white-space:nowrap"><span>Weißwein, trocken.</span><span style="flex:1;margin:0 3px 0 4px;background:radial-gradient(circle at 1.5px 1.5px,#6aaaa7 1.2px,transparent 1.45px) right 8.2px/7.9px 3px repeat-x"></span><span>4,50 €</span></div>
<span class="t" style="left:967px;top:556.8px;font-size:12px;color:#6aaaa7;font-weight:bold;font-family:'Liberation Serif';letter-spacing:0.8px;">Entenbrust mit Kartoffelklößen</span>
<span class="t" style="left:967px;top:572.8px;font-size:12px;color:#6aaaa7;font-weight:bold;font-family:'Liberation Serif';letter-spacing:0.8px;">Rehrücken an Wirsingpüree</span>
<span class="t" style="left:967px;top:588.8px;font-size:12px;color:#6aaaa7;font-weight:bold;font-family:'Liberation Serif';letter-spacing:0.8px;">Deftige Gans mit Kirschrotkohl</span>
<svg class="a" style="left:774px;top:631px;" width="16" height="16" viewBox="0 0 16 16"><path d="M8.00 6.00L8.00 2.80M8.00 3.80L9.67 1.81M8.00 3.80L6.33 1.81M6.27 7.00L3.50 5.40M4.36 5.90L3.47 3.46M4.36 5.90L1.80 6.35M6.27 9.00L3.50 10.60M4.36 10.10L1.80 9.65M4.36 10.10L3.47 12.54M8.00 10.00L8.00 13.20M8.00 12.20L6.33 14.19M8.00 12.20L9.67 14.19M9.73 9.00L12.50 10.60M11.64 10.10L12.53 12.54M11.64 10.10L14.20 9.65M9.73 7.00L12.50 5.40M11.64 5.90L14.20 6.35M11.64 5.90L12.53 3.46" stroke="#a2392b" stroke-width="1.9"/><circle cx="8.00" cy="1.70" r="1.7" fill="#a2392b"/><circle cx="2.54" cy="4.85" r="1.7" fill="#a2392b"/><circle cx="2.54" cy="11.15" r="1.7" fill="#a2392b"/><circle cx="8.00" cy="14.30" r="1.7" fill="#a2392b"/><circle cx="13.46" cy="11.15" r="1.7" fill="#a2392b"/><circle cx="13.46" cy="4.85" r="1.7" fill="#a2392b"/><polygon points="10.20,8.00 9.10,6.09 6.90,6.09 5.80,8.00 6.90,9.91 9.10,9.91" fill="none" stroke="#a2392b" stroke-width="1.4"/></svg>
<svg class="a" style="left:1071px;top:631px;" width="16" height="16" viewBox="0 0 16 16"><path d="M8.00 6.00L8.00 2.80M8.00 3.80L9.67 1.81M8.00 3.80L6.33 1.81M6.27 7.00L3.50 5.40M4.36 5.90L3.47 3.46M4.36 5.90L1.80 6.35M6.27 9.00L3.50 10.60M4.36 10.10L1.80 9.65M4.36 10.10L3.47 12.54M8.00 10.00L8.00 13.20M8.00 12.20L6.33 14.19M8.00 12.20L9.67 14.19M9.73 9.00L12.50 10.60M11.64 10.10L12.53 12.54M11.64 10.10L14.20 9.65M9.73 7.00L12.50 5.40M11.64 5.90L14.20 6.35M11.64 5.90L12.53 3.46" stroke="#a2392b" stroke-width="1.9"/><circle cx="8.00" cy="1.70" r="1.7" fill="#a2392b"/><circle cx="2.54" cy="4.85" r="1.7" fill="#a2392b"/><circle cx="2.54" cy="11.15" r="1.7" fill="#a2392b"/><circle cx="8.00" cy="14.30" r="1.7" fill="#a2392b"/><circle cx="13.46" cy="11.15" r="1.7" fill="#a2392b"/><circle cx="13.46" cy="4.85" r="1.7" fill="#a2392b"/><polygon points="10.20,8.00 9.10,6.09 6.90,6.09 5.80,8.00 6.90,9.91 9.10,9.91" fill="none" stroke="#a2392b" stroke-width="1.4"/></svg>
<span class="t" style="left:632px;width:300px;text-align:center;top:653.30px;font-size:22px;color:#a2392b;font-family:'Liberation Serif';font-style:italic;transform:skewX(-4deg);letter-spacing:-0.2px">Für danach</span>
<span class="t" style="left:930px;width:300px;text-align:center;top:653.30px;font-size:22px;color:#a2392b;font-family:'Liberation Serif';font-style:italic;transform:skewX(-4deg);letter-spacing:-0.2px">Dessert</span>
<div class="a" style="left:669px;top:676.80px;width:216px;height:14px;display:flex;font-size:12px;line-height:1;color:#6aaaa7;font-weight:bold;font-family:'Liberation Serif';letter-spacing:0.8px;white-space:nowrap"><span>Verschiedene Obstler</span><span style="flex:1;margin:0 3px 0 4px;background:radial-gradient(circle at 1.5px 1.5px,#6aaaa7 1.2px,transparent 1.45px) right 8.2px/7.9px 3px repeat-x"></span><span>2,00 €</span></div>
<div class="a" style="left:669px;top:692.80px;width:216px;height:14px;display:flex;font-size:12px;line-height:1;color:#6aaaa7;font-weight:bold;font-family:'Liberation Serif';letter-spacing:0.8px;white-space:nowrap"><span>Kräuterlikör</span><span style="flex:1;margin:0 3px 0 4px;background:radial-gradient(circle at 1.5px 1.5px,#6aaaa7 1.2px,transparent 1.45px) right 8.2px/7.9px 3px repeat-x"></span><span>2,00 €</span></div>
<div class="a" style="left:669px;top:708.80px;width:216px;height:14px;display:flex;font-size:12px;line-height:1;color:#6aaaa7;font-weight:bold;font-family:'Liberation Serif';letter-spacing:0.8px;white-space:nowrap"><span>Grappa</span><span style="flex:1;margin:0 3px 0 4px;background:radial-gradient(circle at 1.5px 1.5px,#6aaaa7 1.2px,transparent 1.45px) right 8.2px/7.9px 3px repeat-x"></span><span>4,50 €</span></div>
<span class="t" style="left:967px;top:676.8px;font-size:12px;color:#6aaaa7;font-weight:bold;font-family:'Liberation Serif';letter-spacing:0.8px;">Schokotarte mit Pflaumensosse</span>
<span class="t" style="left:967px;top:692.8px;font-size:12px;color:#6aaaa7;font-weight:bold;font-family:'Liberation Serif';letter-spacing:0.8px;">Eisvariationen an Caramel-Crumble</span>
<span class="t" style="left:967px;top:708.8px;font-size:12px;color:#6aaaa7;font-weight:bold;font-family:'Liberation Serif';letter-spacing:0.8px;">Apfelkuchen mit Vanillesoße</span>
</div></div>
<div class="a" style="left:353px;top:148px;width:212px;height:246px;background:rgba(0,0,0,0.12);border-radius:4px 4px 0 0"></div>
<div class="a" style="left:354px;top:149px;width:209px;height:243px;background:#262626;border-radius:3px 3px 0 0"></div>
<div class="a" style="left:355px;top:150px;width:207px;height:241px;background:#4a4a4a;border-radius:3px 3px 0 0"></div>
<div class="a" style="left:355px;top:150px;width:207px;height:13px;background:#2f2f2f;border-radius:3px 3px 0 0"></div>
<svg class="a" style="left:533px;top:153px;" width="8" height="6" viewBox="0 0 8 6"><path d="M4 0L0 3L4 6ZM8 0L4 3L8 6Z" fill="#cfcfcf"/></svg>
<svg class="a" style="left:549px;top:153px;" width="6" height="6" viewBox="0 0 6 6"><path d="M0.5 0.5L5.5 5.5M5.5 0.5L0.5 5.5" stroke="#dcdcdc" stroke-width="1.4"/></svg>
<div class="a" style="left:355px;top:163px;width:207px;height:17px;background:#363636;"></div>
<div class="a" style="left:355px;top:163px;width:67px;height:17px;background:#4a4a4a;"></div>
<svg class="a" style="left:359px;top:166.5px;" width="6" height="10" viewBox="0 0 6 10"><path d="M0.5 4L3 1L5.5 4M0.5 6L3 9L5.5 6" stroke="#dcdcdc" fill="none" stroke-width="1.1"/></svg>
<span class="t" style="left:367px;top:167.0px;font-size:10px;color:#ececec;font-weight:bold;letter-spacing:-0.1px">Farbfelder</span>
<svg class="a" style="left:543px;top:167.5px;" width="16" height="9" viewBox="0 0 16 9"><path d="M0 2H5L2.5 5Z" fill="#d6d6d6"/><rect x="6" y="0" width="10" height="1.3" fill="#d6d6d6"/><rect x="6" y="3" width="10" height="1.3" fill="#d6d6d6"/><rect x="6" y="6" width="10" height="1.3" fill="#d6d6d6"/></svg>
<div class="a" style="left:355px;top:180px;width:207px;height:25px;background:#4a4a4a;"></div>
<div class="a" style="left:368px;top:190px;width:11px;height:11px;background:#141414;"></div>
<div class="a" style="left:370px;top:192px;width:7px;height:7px;background:#4a4a4a;border:1px solid #999"></div>
<div class="a" style="left:361px;top:183px;width:12px;height:12px;background:#c42727;border:1px solid #d88"></div>
<svg class="a" style="left:374px;top:182px;" width="6" height="6" viewBox="0 0 6 6"><path d="M0.5 2Q3 0 5 2.5M5 2.5L5.5 0M5 2.5L2.5 3" stroke="#ddd" fill="none"/></svg>
<div class="a" style="left:392px;top:186px;width:13px;height:13px;background:#111;"></div>
<div class="a" style="left:394px;top:188px;width:9px;height:9px;background:#555;border:1px solid #bbb"></div>
<span class="t" style="left:407px;top:186.1px;font-size:14px;color:#e6e6e6;font-weight:bold;font-family:'Liberation Serif';">T</span>
<span class="t" style="left:448px;top:187.5px;font-size:10px;color:#cfcfcf;font-weight:normal;letter-spacing:-0.45px;">Farbton:</span>
<div class="a" style="left:486px;top:185px;width:32px;height:15px;background:#2a2a2a;"></div>
<div class="a" style="left:487px;top:186px;width:30px;height:13px;background:#a2a2a2;"></div>
<span class="t" style="left:489px;top:187.5px;font-size:10px;color:#111;font-weight:normal;letter-spacing:-0.45px;">100</span>
<div class="a" style="left:517px;top:185px;width:14px;height:15px;background:#555;border:1px solid #2a2a2a"></div>
<svg class="a" style="left:522px;top:189px;" width="4" height="7" viewBox="0 0 4 7"><path d="M0 0V7L4 3.5Z" fill="#e0e0e0"/></svg>
<span class="t" style="left:533px;top:187.5px;font-size:10px;color:#cfcfcf;font-weight:normal;letter-spacing:-0.45px;">%</span>
<div class="a" style="left:355px;top:205px;width:207px;height:1px;background:#2a2a2a;"></div>
<div class="a" style="left:355px;top:225px;width:194px;height:1px;background:#3a3a3a;"></div>
<div class="a" style="left:356px;top:209px;width:13px;height:13px;background:#141414;"></div>
<div class="a" style="left:357px;top:210px;width:11px;height:11px;background:#e8621e;"></div>
<span class="t" style="left:377px;top:211.0px;font-size:10px;color:#bdbdbd;font-weight:normal;letter-spacing:-0.45px">c0m76y100k0</span>
<svg class="a" style="left:516px;top:210px;" width="12" height="12" viewBox="0 0 12 12"><rect x="0" y="0" width="12" height="12" fill="#e6e6e6"/><rect x="1" y="1" width="10" height="10" fill="#8a8a8a"/><path d="M1 1h2v2h-2zM5 1h2v2h-2zM9 1h2v2h-2zM3 3h2v2h-2zM7 3h2v2h-2zM1 5h2v2h-2zM5 5h2v2h-2zM9 5h2v2h-2zM3 7h2v2h-2zM7 7h2v2h-2zM1 9h2v2h-2zM5 9h2v2h-2zM9 9h2v2h-2z" fill="#b0b0b0"/></svg>
<svg class="a" style="left:533px;top:210px;" width="12" height="12" viewBox="0 0 12 12"><rect x="0" y="0" width="12" height="12" fill="#eee"/><path d="M1 1H11L6 6Z" fill="#e0259a"/><path d="M1 1V11L6 6Z" fill="#27c8e6"/><path d="M11 1V11L6 6Z" fill="#e8e020"/><path d="M1 11H11L6 6Z" fill="#000"/></svg>
<div class="a" style="left:355px;top:245px;width:194px;height:1px;background:#3a3a3a;"></div>
<div class="a" style="left:356px;top:229px;width:13px;height:13px;background:#141414;"></div>
<div class="a" style="left:357px;top:230px;width:11px;height:11px;background:#d2d2d2;"></div>
<span class="t" style="left:377px;top:231.0px;font-size:10px;color:#bdbdbd;font-weight:normal;letter-spacing:-0.45px">c0m0y0k30</span>
<svg class="a" style="left:516px;top:230px;" width="12" height="12" viewBox="0 0 12 12"><rect x="0" y="0" width="12" height="12" fill="#e6e6e6"/><rect x="1" y="1" width="10" height="10" fill="#8a8a8a"/><path d="M1 1h2v2h-2zM5 1h2v2h-2zM9 1h2v2h-2zM3 3h2v2h-2zM7 3h2v2h-2zM1 5h2v2h-2zM5 5h2v2h-2zM9 5h2v2h-2zM3 7h2v2h-2zM7 7h2v2h-2zM1 9h2v2h-2zM5 9h2v2h-2zM9 9h2v2h-2z" fill="#b0b0b0"/></svg>
<svg class="a" style="left:533px;top:230px;" width="12" height="12" viewBox="0 0 12 12"><rect x="0" y="0" width="12" height="12" fill="#eee"/><path d="M1 1H11L6 6Z" fill="#e0259a"/><path d="M1 1V11L6 6Z" fill="#27c8e6"/><path d="M11 1V11L6 6Z" fill="#e8e020"/><path d="M1 11H11L6 6Z" fill="#000"/></svg>
<div class="a" style="left:355px;top:265px;width:194px;height:1px;background:#3a3a3a;"></div>
<div class="a" style="left:356px;top:249px;width:13px;height:13px;background:#141414;"></div>
<div class="a" style="left:357px;top:250px;width:11px;height:11px;background:#adadad;"></div>
<span class="t" style="left:377px;top:251.0px;font-size:10px;color:#bdbdbd;font-weight:normal;letter-spacing:-0.45px">c0m0y0k50</span>
<svg class="a" style="left:516px;top:250px;" width="12" height="12" viewBox="0 0 12 12"><rect x="0" y="0" width="12" height="12" fill="#e6e6e6"/><rect x="1" y="1" width="10" height="10" fill="#8a8a8a"/><path d="M1 1h2v2h-2zM5 1h2v2h-2zM9 1h2v2h-2zM3 3h2v2h-2zM7 3h2v2h-2zM1 5h2v2h-2zM5 5h2v2h-2zM9 5h2v2h-2zM3 7h2v2h-2zM7 7h2v2h-2zM1 9h2v2h-2zM5 9h2v2h-2zM9 9h2v2h-2z" fill="#b0b0b0"/></svg>
<svg class="a" style="left:533px;top:250px;" width="12" height="12" viewBox="0 0 12 12"><rect x="0" y="0" width="12" height="12" fill="#eee"/><path d="M1 1H11L6 6Z" fill="#e0259a"/><path d="M1 1V11L6 6Z" fill="#27c8e6"/><path d="M11 1V11L6 6Z" fill="#e8e020"/><path d="M1 11H11L6 6Z" fill="#000"/></svg>
<div class="a" style="left:355px;top:285px;width:194px;height:1px;background:#3a3a3a;"></div>
<div class="a" style="left:356px;top:269px;width:13px;height:13px;background:#141414;"></div>
<div class="a" style="left:357px;top:270px;width:11px;height:11px;background:#4fa22f;"></div>
<span class="t" style="left:377px;top:271.0px;font-size:10px;color:#bdbdbd;font-weight:normal;letter-spacing:-0.45px">C=75 M=10 Y=100 K=0</span>
<svg class="a" style="left:516px;top:270px;" width="12" height="12" viewBox="0 0 12 12"><rect x="0" y="0" width="12" height="12" fill="#e6e6e6"/><rect x="1" y="1" width="10" height="10" fill="#8a8a8a"/><path d="M1 1h2v2h-2zM5 1h2v2h-2zM9 1h2v2h-2zM3 3h2v2h-2zM7 3h2v2h-2zM1 5h2v2h-2zM5 5h2v2h-2zM9 5h2v2h-2zM3 7h2v2h-2zM7 7h2v2h-2zM1 9h2v2h-2zM5 9h2v2h-2zM9 9h2v2h-2z" fill="#b0b0b0"/></svg>
<svg class="a" style="left:533px;top:270px;" width="12" height="12" viewBox="0 0 12 12"><rect x="0" y="0" width="12" height="12" fill="#eee"/><path d="M1 1H11L6 6Z" fill="#e0259a"/><path d="M1 1V11L6 6Z" fill="#27c8e6"/><path d="M11 1V11L6 6Z" fill="#e8e020"/><path d="M1 11H11L6 6Z" fill="#000"/></svg>
<div class="a" style="left:355px;top:305px;width:194px;height:1px;background:#3a3a3a;"></div>
<div class="a" style="left:356px;top:289px;width:13px;height:13px;background:#141414;"></div>
<div class="a" style="left:357px;top:290px;width:11px;height:11px;background:#76c7c6;"></div>
<span class="t" style="left:377px;top:291.0px;font-size:10px;color:#bdbdbd;font-weight:normal;letter-spacing:-0.45px">C=60 M=0 Y=30 K=0</span>
<svg class="a" style="left:516px;top:290px;" width="12" height="12" viewBox="0 0 12 12"><rect x="0" y="0" width="12" height="12" fill="#e6e6e6"/><rect x="1" y="1" width="10" height="10" fill="#8a8a8a"/><path d="M1 1h2v2h-2zM5 1h2v2h-2zM9 1h2v2h-2zM3 3h2v2h-2zM7 3h2v2h-2zM1 5h2v2h-2zM5 5h2v2h-2zM9 5h2v2h-2zM3 7h2v2h-2zM7 7h2v2h-2zM1 9h2v2h-2zM5 9h2v2h-2zM9 9h2v2h-2z" fill="#b0b0b0"/></svg>
<svg class="a" style="left:533px;top:290px;" width="12" height="12" viewBox="0 0 12 12"><rect x="0" y="0" width="12" height="12" fill="#eee"/><path d="M1 1H11L6 6Z" fill="#e0259a"/><path d="M1 1V11L6 6Z" fill="#27c8e6"/><path d="M11 1V11L6 6Z" fill="#e8e020"/><path d="M1 11H11L6 6Z" fill="#000"/></svg>
<div class="a" style="left:355px;top:325px;width:194px;height:1px;background:#3a3a3a;"></div>
<div class="a" style="left:356px;top:309px;width:13px;height:13px;background:#141414;"></div>
<div class="a" style="left:357px;top:310px;width:11px;height:11px;background:#fdf0c9;"></div>
<span class="t" style="left:377px;top:311.0px;font-size:10px;color:#bdbdbd;font-weight:normal;letter-spacing:-0.45px">C=0 M=5 Y=25 K=0</span>
<svg class="a" style="left:516px;top:310px;" width="12" height="12" viewBox="0 0 12 12"><rect x="0" y="0" width="12" height="12" fill="#e6e6e6"/><rect x="1" y="1" width="10" height="10" fill="#8a8a8a"/><path d="M1 1h2v2h-2zM5 1h2v2h-2zM9 1h2v2h-2zM3 3h2v2h-2zM7 3h2v2h-2zM1 5h2v2h-2zM5 5h2v2h-2zM9 5h2v2h-2zM3 7h2v2h-2zM7 7h2v2h-2zM1 9h2v2h-2zM5 9h2v2h-2zM9 9h2v2h-2z" fill="#b0b0b0"/></svg>
<svg class="a" style="left:533px;top:310px;" width="12" height="12" viewBox="0 0 12 12"><rect x="0" y="0" width="12" height="12" fill="#eee"/><path d="M1 1H11L6 6Z" fill="#e0259a"/><path d="M1 1V11L6 6Z" fill="#27c8e6"/><path d="M11 1V11L6 6Z" fill="#e8e020"/><path d="M1 11H11L6 6Z" fill="#000"/></svg>
<div class="a" style="left:355px;top:326px;width:194px;height:19px;background:#46566c;"></div>
<div class="a" style="left:355px;top:345px;width:194px;height:1px;background:#3a3a3a;"></div>
<div class="a" style="left:356px;top:329px;width:13px;height:13px;background:#141414;"></div>
<div class="a" style="left:357px;top:330px;width:11px;height:11px;background:#c02626;"></div>
<span class="t" style="left:377px;top:331.0px;font-size:10px;color:#f4f4f4;font-weight:bold;letter-spacing:0.3px">C=20 M=95 Y=100 K=15</span>
<svg class="a" style="left:516px;top:330px;" width="12" height="12" viewBox="0 0 12 12"><rect x="0" y="0" width="12" height="12" fill="#e6e6e6"/><rect x="1" y="1" width="10" height="10" fill="#8a8a8a"/><path d="M1 1h2v2h-2zM5 1h2v2h-2zM9 1h2v2h-2zM3 3h2v2h-2zM7 3h2v2h-2zM1 5h2v2h-2zM5 5h2v2h-2zM9 5h2v2h-2zM3 7h2v2h-2zM7 7h2v2h-2zM1 9h2v2h-2zM5 9h2v2h-2zM9 9h2v2h-2z" fill="#b0b0b0"/></svg>
<svg class="a" style="left:533px;top:330px;" width="12" height="12" viewBox="0 0 12 12"><rect x="0" y="0" width="12" height="12" fill="#eee"/><path d="M1 1H11L6 6Z" fill="#e0259a"/><path d="M1 1V11L6 6Z" fill="#27c8e6"/><path d="M11 1V11L6 6Z" fill="#e8e020"/><path d="M1 11H11L6 6Z" fill="#000"/></svg>
<div class="a" style="left:355px;top:365px;width:194px;height:1px;background:#3a3a3a;"></div>
<div class="a" style="left:356px;top:349px;width:13px;height:13px;background:#141414;"></div>
<div class="a" style="left:357px;top:350px;width:11px;height:11px;background:#ffffff;"></div>
<span class="t" style="left:377px;top:351.0px;font-size:10px;color:#bdbdbd;font-weight:normal;letter-spacing:-0.45px">r255g255b255</span>
<svg class="a" style="left:516px;top:350px;" width="12" height="12" viewBox="0 0 12 12"><rect x="0" y="0" width="12" height="12" fill="#e6e6e6"/><rect x="1" y="1" width="10" height="10" fill="#8a8a8a"/><path d="M1 1h2v2h-2zM5 1h2v2h-2zM9 1h2v2h-2zM3 3h2v2h-2zM7 3h2v2h-2zM1 5h2v2h-2zM5 5h2v2h-2zM9 5h2v2h-2zM3 7h2v2h-2zM7 7h2v2h-2zM1 9h2v2h-2zM5 9h2v2h-2zM9 9h2v2h-2z" fill="#b0b0b0"/></svg>
<svg class="a" style="left:533px;top:350px;" width="12" height="12" viewBox="0 0 12 12"><rect x="0" y="0" width="12" height="12" fill="#eee"/><rect x="1" y="1" width="3.4" height="10" fill="#e00"/><rect x="4.3" y="1" width="3.4" height="10" fill="#0b0"/><rect x="7.6" y="1" width="3.4" height="10" fill="#00d"/></svg>
<div class="a" style="left:549px;top:206px;width:12px;height:159px;background:#3b3b3b;"></div>
<div class="a" style="left:550px;top:291px;width:10px;height:50px;background:#6a6a6a;"></div>
<svg class="a" style="left:551px;top:210px;" width="8" height="5" viewBox="0 0 8 5"><path d="M0 5H8L4.0 0Z" fill="#6e6e6e"/></svg>
<svg class="a" style="left:551px;top:356px;" width="8" height="5" viewBox="0 0 8 5"><path d="M0 0H8L4.0 5Z" fill="#6e6e6e"/></svg>
<div class="a" style="left:355px;top:365px;width:207px;height:1px;background:#2a2a2a;"></div>
<div class="a" style="left:355px;top:366px;width:207px;height:17px;background:#4a4a4a;"></div>
<div class="a" style="left:397px;top:366px;width:28px;height:16px;background:#383838;"></div>
<svg class="a" style="left:405px;top:368px;" width="11" height="11" viewBox="0 0 11 11"><rect width="11" height="11" fill="#ddd"/><path d="M0 0h3v3h-3zM6 3h3v3h-3zM3 6h3v3h-3zM8 8h3v3h-3z" fill="#555"/></svg>
<svg class="a" style="left:436px;top:368px;" width="11" height="11" viewBox="0 0 11 11"><rect x="0.5" y="0.5" width="10" height="10" fill="#888" stroke="#ccc"/></svg>
<svg class="a" style="left:466px;top:368px;" width="11" height="11" viewBox="0 0 11 11"><defs><linearGradient id="g2"><stop offset="0" stop-color="#222"/><stop offset="1" stop-color="#ddd"/></linearGradient></defs><rect x="0.5" y="0.5" width="10" height="10" fill="url(#g2)" stroke="#ccc"/></svg>
<svg class="a" style="left:496px;top:368px;" width="12" height="12" viewBox="0 0 12 12"><path d="M2 0H12V10H4L2 12Z" fill="#d6d6d6"/><path d="M0 8H2V12Z" fill="#d6d6d6"/></svg>
<svg class="a" style="left:525px;top:368px;" width="12" height="12" viewBox="0 0 12 12"><rect x="0" y="2" width="12" height="1.5" fill="#d6d6d6"/><rect x="4" y="0" width="4" height="2" fill="#d6d6d6"/><path d="M1.5 4H10.5L9.5 12H2.5Z" fill="#d6d6d6"/><path d="M4 5V11M6 5V11M8 5V11" stroke="#4a4a4a"/></svg>
<svg class="a" style="left:551px;top:372px;" width="9" height="9" viewBox="0 0 9 9"><path d="M7 1h1v1h-1zM5 3h1v1h-1zM7 3h1v1h-1zM3 5h1v1h-1zM5 5h1v1h-1zM7 5h1v1h-1zM1 7h1v1h-1zM3 7h1v1h-1zM5 7h1v1h-1zM7 7h1v1h-1z" fill="#999"/></svg>
<div class="a" style="left:355px;top:383px;width:207px;height:1px;background:#2a2a2a;"></div>
<div class="a" style="left:355px;top:384px;width:207px;height:7px;background:#444;"></div>
<div class="a" style="left:449px;top:385px;width:1px;height:4px;background:#1a1a1a;"></div>
<div class="a" style="left:451px;top:385px;width:1px;height:4px;background:#1a1a1a;"></div>
<div class="a" style="left:453px;top:385px;width:1px;height:4px;background:#1a1a1a;"></div>
<div class="a" style="left:455px;top:385px;width:1px;height:4px;background:#1a1a1a;"></div>
<div class="a" style="left:457px;top:385px;width:1px;height:4px;background:#1a1a1a;"></div>
<div class="a" style="left:459px;top:385px;width:1px;height:4px;background:#1a1a1a;"></div>
<div class="a" style="left:461px;top:385px;width:1px;height:4px;background:#1a1a1a;"></div>
<div class="a" style="left:463px;top:385px;width:1px;height:4px;background:#1a1a1a;"></div>
<div class="a" style="left:465px;top:385px;width:1px;height:4px;background:#1a1a1a;"></div>
<div class="a" style="left:467px;top:385px;width:1px;height:4px;background:#1a1a1a;"></div>
<div class="a" style="left:353px;top:405px;width:212px;height:202px;background:rgba(0,0,0,0.12);border-radius:4px 4px 0 0"></div>
<div class="a" style="left:354px;top:406px;width:209px;height:199px;background:#262626;border-radius:3px 3px 0 0"></div>
<div class="a" style="left:355px;top:407px;width:207px;height:197px;background:#4a4a4a;border-radius:3px 3px 0 0"></div>
<div class="a" style="left:355px;top:407px;width:207px;height:13px;background:#2f2f2f;border-radius:3px 3px 0 0"></div>
<svg class="a" style="left:533px;top:410px;" width="8" height="6" viewBox="0 0 8 6"><path d="M4 0L0 3L4 6ZM8 0L4 3L8 6Z" fill="#cfcfcf"/></svg>
<svg class="a" style="left:549px;top:410px;" width="6" height="6" viewBox="0 0 6 6"><path d="M0.5 0.5L5.5 5.5M5.5 0.5L0.5 5.5" stroke="#dcdcdc" stroke-width="1.4"/></svg>
<div class="a" style="left:355px;top:420px;width:207px;height:17px;background:#363636;"></div>
<div class="a" style="left:355px;top:421px;width:80px;height:16px;background:#3a3a3a;"></div>
<span class="t" style="left:359px;top:424.0px;font-size:10px;color:#9a9a9a;font-weight:bold;letter-spacing:-0.1px">Zeichenformate</span>
<div class="a" style="left:435px;top:420px;width:86px;height:17px;background:#4a4a4a;"></div>
<svg class="a" style="left:439px;top:423.5px;" width="6" height="10" viewBox="0 0 6 10"><path d="M0.5 4L3 1L5.5 4M0.5 6L3 9L5.5 6" stroke="#dcdcdc" fill="none" stroke-width="1.1"/></svg>
<span class="t" style="left:447px;top:424.0px;font-size:10px;color:#ececec;font-weight:bold;letter-spacing:-0.1px">Absatzformate</span>
<svg class="a" style="left:543px;top:424.5px;" width="16" height="9" viewBox="0 0 16 9"><path d="M0 2H5L2.5 5Z" fill="#d6d6d6"/><rect x="6" y="0" width="10" height="1.3" fill="#d6d6d6"/><rect x="6" y="3" width="10" height="1.3" fill="#d6d6d6"/><rect x="6" y="6" width="10" height="1.3" fill="#d6d6d6"/></svg>
<div class="a" style="left:355px;top:437px;width:207px;height:21px;background:#4a4a4a;"></div>
<span class="t" style="left:357px;top:442.5px;font-size:10px;color:#d6d6d6;font-weight:normal;letter-spacing:-0.45px">Fließtext</span>
<svg class="a" style="left:547px;top:441px;" width="10" height="14" viewBox="0 0 10 14"><path d="M4 1L1 8H5L3 13L9 5H6L8 1Z" fill="#dedede"/></svg>
<div class="a" style="left:355px;top:458px;width:207px;height:1px;background:#2a2a2a;"></div>
<div class="a" style="left:355px;top:478px;width:194px;height:1px;background:#3a3a3a;"></div>
<span class="t" style="left:387px;top:464.0px;font-size:10px;color:#bdbdbd;font-weight:normal;letter-spacing:-0.45px">[Einf. Abs.]</span>
<div class="a" style="left:355px;top:479px;width:194px;height:19px;background:#46566c;"></div>
<div class="a" style="left:355px;top:498px;width:194px;height:1px;background:#3a3a3a;"></div>
<span class="t" style="left:387px;top:484.0px;font-size:10px;color:#f4f4f4;font-weight:bold;letter-spacing:-0.45px">Fließtext</span>
<div class="a" style="left:355px;top:518px;width:194px;height:1px;background:#3a3a3a;"></div>
<span class="t" style="left:387px;top:504.0px;font-size:10px;color:#bdbdbd;font-weight:normal;letter-spacing:-0.45px">Zwischenüberschrift</span>
<div class="a" style="left:549px;top:459px;width:12px;height:119px;background:#3b3b3b;"></div>
<svg class="a" style="left:551px;top:463px;" width="8" height="5" viewBox="0 0 8 5"><path d="M0 5H8L4.0 0Z" fill="#6e6e6e"/></svg>
<svg class="a" style="left:551px;top:569px;" width="8" height="5" viewBox="0 0 8 5"><path d="M0 0H8L4.0 5Z" fill="#6e6e6e"/></svg>
<div class="a" style="left:355px;top:578px;width:207px;height:1px;background:#2a2a2a;"></div>
<svg class="a" style="left:434px;top:582px;" width="13" height="11" viewBox="0 0 13 11"><path d="M0 1H5L6 2.5H13V11H0Z" fill="#d6d6d6"/></svg>
<span class="t" style="left:461px;top:581.8px;font-size:12px;color:#7a7a7a;font-weight:bold;">¶</span>
<svg class="a" style="left:469px;top:584px;" width="8" height="8" viewBox="0 0 8 8"><path d="M1 7L7 1M2 3H7M1 5H6" stroke="#777"/></svg>
<svg class="a" style="left:494px;top:582px;" width="12" height="12" viewBox="0 0 12 12"><path d="M2 0H12V10H4L2 12Z" fill="#d6d6d6"/><path d="M0 8H2V12Z" fill="#d6d6d6"/></svg>
<svg class="a" style="left:524px;top:582px;" width="12" height="12" viewBox="0 0 12 12"><rect x="0" y="2" width="12" height="1.5" fill="#d6d6d6"/><rect x="4" y="0" width="4" height="2" fill="#d6d6d6"/><path d="M1.5 4H10.5L9.5 12H2.5Z" fill="#d6d6d6"/><path d="M4 5V11M6 5V11M8 5V11" stroke="#4a4a4a"/></svg>
<div class="a" style="left:355px;top:597px;width:207px;height:1px;background:#2a2a2a;"></div>
<div class="a" style="left:355px;top:598px;width:207px;height:6px;background:#444;"></div>
<div class="a" style="left:449px;top:599px;width:1px;height:4px;background:#1a1a1a;"></div>
<div class="a" style="left:451px;top:599px;width:1px;height:4px;background:#1a1a1a;"></div>
<div class="a" style="left:453px;top:599px;width:1px;height:4px;background:#1a1a1a;"></div>
<div class="a" style="left:455px;top:599px;width:1px;height:4px;background:#1a1a1a;"></div>
<div class="a" style="left:457px;top:599px;width:1px;height:4px;background:#1a1a1a;"></div>
<div class="a" style="left:459px;top:599px;width:1px;height:4px;background:#1a1a1a;"></div>
<div class="a" style="left:461px;top:599px;width:1px;height:4px;background:#1a1a1a;"></div>
<div class="a" style="left:463px;top:599px;width:1px;height:4px;background:#1a1a1a;"></div>
<div class="a" style="left:465px;top:599px;width:1px;height:4px;background:#1a1a1a;"></div>
<div class="a" style="left:467px;top:599px;width:1px;height:4px;background:#1a1a1a;"></div>
<div class="a" style="left:353px;top:633px;width:213px;height:327px;background:rgba(0,0,0,0.12);border-radius:4px 4px 0 0"></div>
<div class="a" style="left:354px;top:634px;width:210px;height:324px;background:#262626;border-radius:3px 3px 0 0"></div>
<div class="a" style="left:355px;top:635px;width:208px;height:322px;background:#4a4a4a;border-radius:3px 3px 0 0"></div>
<div class="a" style="left:355px;top:635px;width:208px;height:13px;background:#2f2f2f;border-radius:3px 3px 0 0"></div>
<svg class="a" style="left:534px;top:638px;" width="8" height="6" viewBox="0 0 8 6"><path d="M4 0L0 3L4 6ZM8 0L4 3L8 6Z" fill="#cfcfcf"/></svg>
<svg class="a" style="left:550px;top:638px;" width="6" height="6" viewBox="0 0 6 6"><path d="M0.5 0.5L5.5 5.5M5.5 0.5L0.5 5.5" stroke="#dcdcdc" stroke-width="1.4"/></svg>
<div class="a" style="left:355px;top:648px;width:208px;height:17px;background:#363636;"></div>
<div class="a" style="left:355px;top:648px;width:86px;height:17px;background:#4a4a4a;"></div>
<span class="t" style="left:359px;top:652.0px;font-size:10px;color:#ececec;font-weight:bold;letter-spacing:-0.1px">Transformieren</span>
<div class="a" style="left:441px;top:649px;width:42px;height:16px;background:#3a3a3a;"></div>
<span class="t" style="left:445px;top:652.0px;font-size:10px;color:#9a9a9a;font-weight:bold;letter-spacing:-0.1px">Ausrich</span>
<div class="a" style="left:483px;top:649px;width:42px;height:16px;background:#3a3a3a;"></div>
<span class="t" style="left:487px;top:652.0px;font-size:10px;color:#9a9a9a;font-weight:bold;letter-spacing:-0.1px">Pathfin</span>
<svg class="a" style="left:544px;top:652.5px;" width="16" height="9" viewBox="0 0 16 9"><path d="M0 2H5L2.5 5Z" fill="#d6d6d6"/><rect x="6" y="0" width="10" height="1.3" fill="#d6d6d6"/><rect x="6" y="3" width="10" height="1.3" fill="#d6d6d6"/><rect x="6" y="6" width="10" height="1.3" fill="#d6d6d6"/></svg>
<svg class="a" style="left:360px;top:679px;" width="22" height="22" viewBox="0 0 22 22"><rect x="1.5" y="1.5" width="4" height="4" fill="none" stroke="#e0e0e0"/><rect x="8.5" y="1.5" width="4" height="4" fill="#bbb" stroke="#e0e0e0"/><rect x="15.5" y="1.5" width="4" height="4" fill="none" stroke="#e0e0e0"/><rect x="1.5" y="8.5" width="4" height="4" fill="none" stroke="#e0e0e0"/><rect x="8.5" y="8.5" width="4" height="4" fill="none" stroke="#e0e0e0"/><rect x="15.5" y="8.5" width="4" height="4" fill="none" stroke="#e0e0e0"/><rect x="1.5" y="15.5" width="4" height="4" fill="none" stroke="#e0e0e0"/><rect x="8.5" y="15.5" width="4" height="4" fill="none" stroke="#e0e0e0"/><rect x="15.5" y="15.5" width="4" height="4" fill="none" stroke="#e0e0e0"/><path d="M6 3.5H8M13 3.5H15M6 10.5H8M13 10.5H15M6 17.5H8M13 17.5H15M3.5 6V8M3.5 13V15M10.5 6V8M10.5 13V15M17.5 6V8M17.5 13V15" stroke="#e0e0e0"/></svg>
<span class="t" style="left:391px;top:675.5px;font-size:10px;color:#d0d0d0;font-weight:normal;letter-spacing:-0.45px;">X:</span>
<span class="t" style="left:391px;top:696.5px;font-size:10px;color:#d0d0d0;font-weight:normal;letter-spacing:-0.45px;">Y:</span>
<span class="t" style="left:481px;top:675.5px;font-size:10px;color:#d0d0d0;font-weight:normal;letter-spacing:-0.45px;">B:</span>
<span class="t" style="left:481px;top:696.5px;font-size:10px;color:#d0d0d0;font-weight:normal;letter-spacing:-0.45px;">H:</span>
<div class="a" style="left:404px;top:673px;width:63px;height:15px;background:#363636;"></div>
<div class="a" style="left:405px;top:674px;width:61px;height:13px;background:#8e8e8e;"></div>
<div class="a" style="left:494px;top:673px;width:63px;height:15px;background:#363636;"></div>
<div class="a" style="left:495px;top:674px;width:61px;height:13px;background:#8e8e8e;"></div>
<div class="a" style="left:404px;top:694px;width:63px;height:15px;background:#363636;"></div>
<div class="a" style="left:405px;top:695px;width:61px;height:13px;background:#8e8e8e;"></div>
<div class="a" style="left:494px;top:694px;width:63px;height:15px;background:#363636;"></div>
<div class="a" style="left:495px;top:695px;width:61px;height:13px;background:#8e8e8e;"></div>
<div class="a" style="left:360px;top:716px;width:196px;height:1px;background:#3a3a3a;"></div>
<div class="a" style="left:360px;top:717px;width:196px;height:1px;background:#555;"></div>
<div class="a" style="left:361px;top:728px;width:18px;height:22px;background:#2e2e2e;"></div>
<svg class="a" style="left:365px;top:730px;" width="10" height="18" viewBox="0 0 10 18"><path d="M3 8V4Q3 1.5 5 1.5T7 4V8M3 10V14Q3 16.5 5 16.5T7 14V10" fill="none" stroke="#e6e6e6" stroke-width="1.7"/><path d="M5 6V12" stroke="#e6e6e6" stroke-width="1.4"/></svg>
<svg class="a" style="left:386px;top:721px;" width="15" height="14" viewBox="0 0 15 14"><rect x="0.5" y="0.5" width="13" height="13" fill="none" stroke="#ddd" stroke-dasharray="2 1"/><path d="M2 7H10M7 4L10 7L7 10" stroke="#eee" stroke-width="1.6" fill="none"/></svg>
<svg class="a" style="left:386px;top:741px;" width="15" height="14" viewBox="0 0 15 14"><rect x="0.5" y="0.5" width="13" height="13" fill="none" stroke="#ddd" stroke-dasharray="2 1"/><path d="M7 2V11M4 8L7 11L10 8" stroke="#eee" stroke-width="1.6" fill="none"/></svg>
<svg class="a" style="left:479px;top:722px;" width="14" height="12" viewBox="0 0 14 12"><path d="M1 11H13M1 11L10 2M7 5Q10 7 10 11" stroke="#e0e0e0" fill="none" stroke-width="1.3"/></svg>
<svg class="a" style="left:478px;top:743px;" width="15" height="11" viewBox="0 0 15 11"><path d="M1 10H9L14 1H6Z" stroke="#e0e0e0" fill="none" stroke-width="1.3"/></svg>
<div class="a" style="left:404px;top:720px;width:49px;height:15px;background:#363636;"></div>
<div class="a" style="left:405px;top:721px;width:47px;height:13px;background:#8e8e8e;"></div>
<div class="a" style="left:452px;top:721px;width:14px;height:13px;background:#575757;"></div>
<svg class="a" style="left:455px;top:726px;" width="8" height="5" viewBox="0 0 8 5"><path d="M0 0H8L4.0 5Z" fill="#6a6a6a"/></svg>
<div class="a" style="left:495px;top:720px;width:49px;height:15px;background:#363636;"></div>
<div class="a" style="left:496px;top:721px;width:47px;height:13px;background:#8e8e8e;"></div>
<div class="a" style="left:543px;top:721px;width:14px;height:13px;background:#575757;"></div>
<svg class="a" style="left:546px;top:726px;" width="8" height="5" viewBox="0 0 8 5"><path d="M0 0H8L4.0 5Z" fill="#6a6a6a"/></svg>
<div class="a" style="left:404px;top:741px;width:49px;height:15px;background:#363636;"></div>
<div class="a" style="left:405px;top:742px;width:47px;height:13px;background:#8e8e8e;"></div>
<div class="a" style="left:452px;top:742px;width:14px;height:13px;background:#575757;"></div>
<svg class="a" style="left:455px;top:747px;" width="8" height="5" viewBox="0 0 8 5"><path d="M0 0H8L4.0 5Z" fill="#6a6a6a"/></svg>
<div class="a" style="left:495px;top:741px;width:49px;height:15px;background:#363636;"></div>
<div class="a" style="left:496px;top:742px;width:47px;height:13px;background:#8e8e8e;"></div>
<div class="a" style="left:543px;top:742px;width:14px;height:13px;background:#575757;"></div>
<svg class="a" style="left:546px;top:747px;" width="8" height="5" viewBox="0 0 8 5"><path d="M0 0H8L4.0 5Z" fill="#6a6a6a"/></svg>
<div class="a" style="left:355px;top:764px;width:208px;height:3px;background:#262626;"></div>
<div class="a" style="left:355px;top:767px;width:208px;height:17px;background:#363636;"></div>
<div class="a" style="left:355px;top:767px;width:57px;height:17px;background:#4a4a4a;"></div>
<svg class="a" style="left:359px;top:770.5px;" width="6" height="10" viewBox="0 0 6 10"><path d="M0.5 4L3 1L5.5 4M0.5 6L3 9L5.5 6" stroke="#dcdcdc" fill="none" stroke-width="1.1"/></svg>
<span class="t" style="left:367px;top:771.0px;font-size:10px;color:#ececec;font-weight:bold;letter-spacing:-0.1px">Zeichen</span>
<svg class="a" style="left:544px;top:771.5px;" width="16" height="9" viewBox="0 0 16 9"><path d="M0 2H5L2.5 5Z" fill="#d6d6d6"/><rect x="6" y="0" width="10" height="1.3" fill="#d6d6d6"/><rect x="6" y="3" width="10" height="1.3" fill="#d6d6d6"/><rect x="6" y="6" width="10" height="1.3" fill="#d6d6d6"/></svg>
<div class="a" style="left:362px;top:792px;width:182px;height:15px;background:#333;"></div>
<div class="a" style="left:363px;top:793px;width:180px;height:13px;background:#a9a9a9;"></div>
<div class="a" style="left:543px;top:793px;width:13px;height:13px;background:#5a5a5a;"></div>
<svg class="a" style="left:545px;top:798px;" width="8" height="5" viewBox="0 0 8 5"><path d="M0 0H8L4.0 5Z" fill="#e6e6e6"/></svg>
<svg class="a" style="left:366px;top:794px;" width="16" height="12" viewBox="0 0 16 12"><circle cx="8" cy="5" r="3.5" fill="none" stroke="#333" stroke-width="1.2"/><path d="M5.5 7.5L2 11" stroke="#333" stroke-width="1.4"/><path d="M12 9H15L13.5 10.5Z" fill="#333"/></svg>
<span class="t" style="left:384px;top:795.0px;font-size:10px;color:#111;font-weight:normal;letter-spacing:-0.45px">Latin Modern Roman</span>
<div class="a" style="left:362px;top:813px;width:182px;height:15px;background:#333;"></div>
<div class="a" style="left:363px;top:814px;width:180px;height:13px;background:#a9a9a9;"></div>
<div class="a" style="left:543px;top:814px;width:13px;height:13px;background:#5a5a5a;"></div>
<svg class="a" style="left:545px;top:819px;" width="8" height="5" viewBox="0 0 8 5"><path d="M0 0H8L4.0 5Z" fill="#e6e6e6"/></svg>
<span class="t" style="left:366px;top:816.0px;font-size:10px;color:#111;font-weight:normal;letter-spacing:-0.45px;">10 Bold</span>
<div class="a" style="left:360px;top:834px;width:196px;height:1px;background:#3a3a3a;"></div>
<div class="a" style="left:360px;top:835px;width:196px;height:1px;background:#555;"></div>
<div class="a" style="left:381px;top:841px;width:12px;height:14px;background:#3c3c3c;border:1px solid #2f2f2f"></div>
<svg class="a" style="left:384px;top:843px;" width="6" height="3" viewBox="0 0 6 3"><path d="M0 3H6L3.0 0Z" fill="#e0e0e0"/></svg>
<svg class="a" style="left:384px;top:850px;" width="6" height="3" viewBox="0 0 6 3"><path d="M0 0H6L3.0 3Z" fill="#e0e0e0"/></svg>
<div class="a" style="left:383px;top:848px;width:8px;height:1px;background:#2a2a2a;"></div>
<div class="a" style="left:395px;top:840px;width:45px;height:15px;background:#333;"></div>
<div class="a" style="left:396px;top:841px;width:43px;height:13px;background:#a6a6a6;"></div>
<div class="a" style="left:439px;top:841px;width:13px;height:13px;background:#5a5a5a;"></div>
<svg class="a" style="left:441px;top:846px;" width="8" height="5" viewBox="0 0 8 5"><path d="M0 0H8L4.0 5Z" fill="#e6e6e6"/></svg>
<span class="t" style="left:399px;top:842.5px;font-size:10px;color:#111;font-weight:normal;letter-spacing:-0.45px;">12 Pt</span>
<div class="a" style="left:481px;top:841px;width:12px;height:14px;background:#3c3c3c;border:1px solid #2f2f2f"></div>
<svg class="a" style="left:484px;top:843px;" width="6" height="3" viewBox="0 0 6 3"><path d="M0 3H6L3.0 0Z" fill="#e0e0e0"/></svg>
<svg class="a" style="left:484px;top:850px;" width="6" height="3" viewBox="0 0 6 3"><path d="M0 0H6L3.0 3Z" fill="#e0e0e0"/></svg>
<div class="a" style="left:483px;top:848px;width:8px;height:1px;background:#2a2a2a;"></div>
<div class="a" style="left:495px;top:840px;width:49px;height:15px;background:#333;"></div>
<div class="a" style="left:496px;top:841px;width:47px;height:13px;background:#a6a6a6;"></div>
<div class="a" style="left:543px;top:841px;width:13px;height:13px;background:#5a5a5a;"></div>
<svg class="a" style="left:545px;top:846px;" width="8" height="5" viewBox="0 0 8 5"><path d="M0 0H8L4.0 5Z" fill="#e6e6e6"/></svg>
<span class="t" style="left:499px;top:842.5px;font-size:10px;color:#111;font-weight:normal;letter-spacing:-0.45px;">16 Pt</span>
<div class="a" style="left:381px;top:862px;width:12px;height:14px;background:#3c3c3c;border:1px solid #2f2f2f"></div>
<svg class="a" style="left:384px;top:864px;" width="6" height="3" viewBox="0 0 6 3"><path d="M0 3H6L3.0 0Z" fill="#e0e0e0"/></svg>
<svg class="a" style="left:384px;top:871px;" width="6" height="3" viewBox="0 0 6 3"><path d="M0 0H6L3.0 3Z" fill="#e0e0e0"/></svg>
<div class="a" style="left:383px;top:869px;width:8px;height:1px;background:#2a2a2a;"></div>
<div class="a" style="left:395px;top:861px;width:45px;height:15px;background:#333;"></div>
<div class="a" style="left:396px;top:862px;width:43px;height:13px;background:#a6a6a6;"></div>
<div class="a" style="left:439px;top:862px;width:13px;height:13px;background:#5a5a5a;"></div>
<svg class="a" style="left:441px;top:867px;" width="8" height="5" viewBox="0 0 8 5"><path d="M0 0H8L4.0 5Z" fill="#e6e6e6"/></svg>
<span class="t" style="left:399px;top:863.5px;font-size:10px;color:#111;font-weight:normal;letter-spacing:-0.45px;">Optisch</span>
<div class="a" style="left:481px;top:862px;width:12px;height:14px;background:#3c3c3c;border:1px solid #2f2f2f"></div>
<svg class="a" style="left:484px;top:864px;" width="6" height="3" viewBox="0 0 6 3"><path d="M0 3H6L3.0 0Z" fill="#e0e0e0"/></svg>
<svg class="a" style="left:484px;top:871px;" width="6" height="3" viewBox="0 0 6 3"><path d="M0 0H6L3.0 3Z" fill="#e0e0e0"/></svg>
<div class="a" style="left:483px;top:869px;width:8px;height:1px;background:#2a2a2a;"></div>
<div class="a" style="left:495px;top:861px;width:49px;height:15px;background:#333;"></div>
<div class="a" style="left:496px;top:862px;width:47px;height:13px;background:#a6a6a6;"></div>
<div class="a" style="left:543px;top:862px;width:13px;height:13px;background:#5a5a5a;"></div>
<svg class="a" style="left:545px;top:867px;" width="8" height="5" viewBox="0 0 8 5"><path d="M0 0H8L4.0 5Z" fill="#e6e6e6"/></svg>
<span class="t" style="left:499px;top:863.5px;font-size:10px;color:#111;font-weight:normal;letter-spacing:-0.45px;">0</span>
<div class="a" style="left:381px;top:889px;width:12px;height:14px;background:#3c3c3c;border:1px solid #2f2f2f"></div>
<svg class="a" style="left:384px;top:891px;" width="6" height="3" viewBox="0 0 6 3"><path d="M0 3H6L3.0 0Z" fill="#e0e0e0"/></svg>
<svg class="a" style="left:384px;top:898px;" width="6" height="3" viewBox="0 0 6 3"><path d="M0 0H6L3.0 3Z" fill="#e0e0e0"/></svg>
<div class="a" style="left:383px;top:896px;width:8px;height:1px;background:#2a2a2a;"></div>
<div class="a" style="left:395px;top:888px;width:45px;height:15px;background:#333;"></div>
<div class="a" style="left:396px;top:889px;width:43px;height:13px;background:#a6a6a6;"></div>
<div class="a" style="left:439px;top:889px;width:13px;height:13px;background:#5a5a5a;"></div>
<svg class="a" style="left:441px;top:894px;" width="8" height="5" viewBox="0 0 8 5"><path d="M0 0H8L4.0 5Z" fill="#e6e6e6"/></svg>
<span class="t" style="left:399px;top:890.5px;font-size:10px;color:#111;font-weight:normal;letter-spacing:-0.45px;">100 %</span>
<div class="a" style="left:481px;top:889px;width:12px;height:14px;background:#3c3c3c;border:1px solid #2f2f2f"></div>
<svg class="a" style="left:484px;top:891px;" width="6" height="3" viewBox="0 0 6 3"><path d="M0 3H6L3.0 0Z" fill="#e0e0e0"/></svg>
<svg class="a" style="left:484px;top:898px;" width="6" height="3" viewBox="0 0 6 3"><path d="M0 0H6L3.0 3Z" fill="#e0e0e0"/></svg>
<div class="a" style="left:483px;top:896px;width:8px;height:1px;background:#2a2a2a;"></div>
<div class="a" style="left:495px;top:888px;width:49px;height:15px;background:#333;"></div>
<div class="a" style="left:496px;top:889px;width:47px;height:13px;background:#a6a6a6;"></div>
<div class="a" style="left:543px;top:889px;width:13px;height:13px;background:#5a5a5a;"></div>
<svg class="a" style="left:545px;top:894px;" width="8" height="5" viewBox="0 0 8 5"><path d="M0 0H8L4.0 5Z" fill="#e6e6e6"/></svg>
<span class="t" style="left:499px;top:890.5px;font-size:10px;color:#111;font-weight:normal;letter-spacing:-0.45px;">100 %</span>
<div class="a" style="left:381px;top:909px;width:12px;height:14px;background:#3c3c3c;border:1px solid #2f2f2f"></div>
<svg class="a" style="left:384px;top:911px;" width="6" height="3" viewBox="0 0 6 3"><path d="M0 3H6L3.0 0Z" fill="#e0e0e0"/></svg>
<svg class="a" style="left:384px;top:918px;" width="6" height="3" viewBox="0 0 6 3"><path d="M0 0H6L3.0 3Z" fill="#e0e0e0"/></svg>
<div class="a" style="left:383px;top:916px;width:8px;height:1px;background:#2a2a2a;"></div>
<div class="a" style="left:395px;top:908px;width:58px;height:15px;background:#333;"></div>
<div class="a" style="left:396px;top:909px;width:56px;height:13px;background:#a6a6a6;"></div>
<span class="t" style="left:399px;top:910.5px;font-size:10px;color:#111;font-weight:normal;letter-spacing:-0.45px;">0 Pt</span>
<div class="a" style="left:481px;top:909px;width:12px;height:14px;background:#3c3c3c;border:1px solid #2f2f2f"></div>
<svg class="a" style="left:484px;top:911px;" width="6" height="3" viewBox="0 0 6 3"><path d="M0 3H6L3.0 0Z" fill="#e0e0e0"/></svg>
<svg class="a" style="left:484px;top:918px;" width="6" height="3" viewBox="0 0 6 3"><path d="M0 0H6L3.0 3Z" fill="#e0e0e0"/></svg>
<div class="a" style="left:483px;top:916px;width:8px;height:1px;background:#2a2a2a;"></div>
<div class="a" style="left:495px;top:908px;width:62px;height:15px;background:#333;"></div>
<div class="a" style="left:496px;top:909px;width:60px;height:13px;background:#a6a6a6;"></div>
<span class="t" style="left:499px;top:910.5px;font-size:10px;color:#111;font-weight:normal;letter-spacing:-0.45px;">0°</span>
<div class="a" style="left:381px;top:862px;width:12px;height:14px;background:#444;"></div>
<span class="t" style="left:359px;top:843.8px;font-size:12px;color:#ddd;font-weight:normal;font-family:'Liberation Serif';">T</span>
<span class="t" style="left:366px;top:840.55px;font-size:17px;color:#ddd;font-weight:normal;font-family:'Liberation Serif';">T</span>
<span class="t" style="left:361px;top:864.65px;font-size:11px;color:#ddd;font-weight:normal;font-family:'Liberation Serif';letter-spacing:-1.5px">V/A</span>
<span class="t" style="left:464px;top:842.35px;font-size:9px;color:#ddd;font-weight:bold;">A</span>
<span class="t" style="left:464px;top:850.35px;font-size:9px;color:#ddd;font-weight:bold;">A</span>
<div class="a" style="left:460px;top:862px;width:18px;height:11px;background:#ddd;"></div>
<span class="t" style="left:461px;top:863.5px;font-size:10px;color:#333;font-weight:bold;">VA</span>
<span class="t" style="left:358px;top:889.25px;font-size:15px;color:#ddd;font-weight:normal;font-family:'Liberation Serif';letter-spacing:-2px">‡T</span>
<span class="t" style="left:460px;top:887.55px;font-size:17px;color:#ddd;font-weight:normal;font-family:'Liberation Serif';">T</span>
<span class="t" style="left:360px;top:911.8px;font-size:12px;color:#ddd;font-weight:normal;font-family:'Liberation Serif';">Aª</span>
<span class="t" style="left:462px;top:908.55px;font-size:17px;color:#ddd;font-weight:normal;font-family:'Liberation Serif';font-style:italic">T</span>
<div class="a" style="left:360px;top:882px;width:196px;height:1px;background:#3a3a3a;"></div>
<div class="a" style="left:360px;top:883px;width:196px;height:1px;background:#555;"></div>
<div class="a" style="left:360px;top:930px;width:196px;height:1px;background:#3a3a3a;"></div>
<div class="a" style="left:360px;top:931px;width:196px;height:1px;background:#555;"></div>
<span class="t" style="left:365px;top:938.5px;font-size:10px;color:#cfcfcf;font-weight:normal;letter-spacing:-0.45px">Sprache:</span>
<div class="a" style="left:407px;top:935px;width:137px;height:16px;background:#333;"></div>
<div class="a" style="left:408px;top:936px;width:135px;height:14px;background:#5c5c5c;"></div>
<span class="t" style="left:411px;top:938.0px;font-size:10px;color:#d8d8d8;font-weight:normal;letter-spacing:-0.45px">Deutsch: 2006 Rechtschreibr...</span>
<div class="a" style="left:543px;top:936px;width:13px;height:14px;background:#5a5a5a;"></div>
<svg class="a" style="left:545px;top:941px;" width="8" height="5" viewBox="0 0 8 5"><path d="M0 0H8L4.0 5Z" fill="#e6e6e6"/></svg>
<div class="a" style="left:1239px;top:149px;width:212px;height:438px;background:rgba(0,0,0,0.12);border-radius:4px 4px 0 0"></div>
<div class="a" style="left:1240px;top:150px;width:209px;height:435px;background:#262626;border-radius:3px 3px 0 0"></div>
<div class="a" style="left:1241px;top:151px;width:207px;height:433px;background:#4a4a4a;border-radius:3px 3px 0 0"></div>
<div class="a" style="left:1241px;top:151px;width:207px;height:13px;background:#2f2f2f;border-radius:3px 3px 0 0"></div>
<svg class="a" style="left:1419px;top:154px;" width="8" height="6" viewBox="0 0 8 6"><path d="M4 0L0 3L4 6ZM8 0L4 3L8 6Z" fill="#cfcfcf"/></svg>
<svg class="a" style="left:1435px;top:154px;" width="6" height="6" viewBox="0 0 6 6"><path d="M0.5 0.5L5.5 5.5M5.5 0.5L0.5 5.5" stroke="#dcdcdc" stroke-width="1.4"/></svg>
<div class="a" style="left:1241px;top:164px;width:207px;height:17px;background:#363636;"></div>
<div class="a" style="left:1241px;top:164px;width:54px;height:17px;background:#4a4a4a;"></div>
<svg class="a" style="left:1245px;top:167.5px;" width="6" height="10" viewBox="0 0 6 10"><path d="M0.5 4L3 1L5.5 4M0.5 6L3 9L5.5 6" stroke="#dcdcdc" fill="none" stroke-width="1.1"/></svg>
<span class="t" style="left:1253px;top:168.0px;font-size:10px;color:#ececec;font-weight:bold;letter-spacing:-0.1px">Effekte</span>
<svg class="a" style="left:1429px;top:168.5px;" width="16" height="9" viewBox="0 0 16 9"><path d="M0 2H5L2.5 5Z" fill="#d6d6d6"/><rect x="6" y="0" width="10" height="1.3" fill="#d6d6d6"/><rect x="6" y="3" width="10" height="1.3" fill="#d6d6d6"/><rect x="6" y="6" width="10" height="1.3" fill="#d6d6d6"/></svg>
<div class="a" style="left:1243px;top:187px;width:86px;height:16px;background:#333;"></div>
<div class="a" style="left:1244px;top:188px;width:84px;height:14px;background:#5e5e5e;"></div>
<span class="t" style="left:1246px;top:190.0px;font-size:10px;color:#d6d6d6;font-weight:normal;letter-spacing:-0.45px">Normal</span>
<div class="a" style="left:1328px;top:188px;width:13px;height:14px;background:#5a5a5a;"></div>
<svg class="a" style="left:1330px;top:193px;" width="8" height="5" viewBox="0 0 8 5"><path d="M0 0H8L4.0 5Z" fill="#e6e6e6"/></svg>
<span class="t" style="left:1351px;top:190.0px;font-size:10px;color:#cfcfcf;font-weight:normal;letter-spacing:-0.45px">Deckkraft:</span>
<div class="a" style="left:1396px;top:187px;width:38px;height:16px;background:#333;"></div>
<div class="a" style="left:1397px;top:188px;width:36px;height:14px;background:#aaaaaa;"></div>
<span class="t" style="left:1399px;top:190.0px;font-size:10px;color:#111;font-weight:normal;letter-spacing:-0.45px;">100 %</span>
<div class="a" style="left:1433px;top:188px;width:13px;height:14px;background:#555;"></div>
<svg class="a" style="left:1438px;top:191px;" width="4" height="8" viewBox="0 0 4 8"><path d="M0 0V8L4 4.0Z" fill="#e0e0e0"/></svg>
<div class="a" style="left:1241px;top:209px;width:207px;height:1px;background:#2a2a2a;"></div>
<div class="a" style="left:1241px;top:210px;width:207px;height:18px;background:#46566c;"></div>
<svg class="a" style="left:1244px;top:216px;" width="9" height="6" viewBox="0 0 9 6"><path d="M0 0H9L4.5 6Z" fill="#d6dfee"/></svg>
<span class="t" style="left:1256px;top:213.5px;font-size:10px;color:#f4f4f4;font-weight:bold;">Objekt:</span>
<span class="t" style="left:1327px;top:213.5px;font-size:10px;color:#f4f4f4;font-weight:bold;">Normal 100 %</span>
<div class="a" style="left:1241px;top:247px;width:207px;height:1px;background:#3a3a3a;"></div>
<span class="t" style="left:1261px;top:233.5px;font-size:10px;color:#c8c8c8;font-weight:normal;letter-spacing:-0.45px">Kontur:</span>
<span class="t" style="left:1327px;top:233.5px;font-size:10px;color:#c8c8c8;font-weight:normal;letter-spacing:-0.45px">Normal 100 %</span>
<div class="a" style="left:1241px;top:267px;width:207px;height:1px;background:#3a3a3a;"></div>
<span class="t" style="left:1261px;top:253.5px;font-size:10px;color:#c8c8c8;font-weight:normal;letter-spacing:-0.45px">Fläche:</span>
<span class="t" style="left:1327px;top:253.5px;font-size:10px;color:#c8c8c8;font-weight:normal;letter-spacing:-0.45px">Normal 100 %</span>
<div class="a" style="left:1241px;top:287px;width:207px;height:1px;background:#3a3a3a;"></div>
<span class="t" style="left:1261px;top:273.5px;font-size:10px;color:#7a7a7a;font-weight:normal;letter-spacing:-0.45px">Text:</span>
<span class="t" style="left:1327px;top:273.5px;font-size:10px;color:#7a7a7a;font-weight:normal;letter-spacing:-0.45px">Normal 100 %</span>
<div class="a" style="left:1241px;top:288px;width:207px;height:1px;background:#2a2a2a;"></div>
<div class="a" style="left:1245px;top:294px;width:10px;height:10px;background:#3c3c3c;border:1px solid #333"></div>
<span class="t" style="left:1260px;top:293.5px;font-size:10px;color:#d0d0d0;font-weight:normal;letter-spacing:-0.45px">Füllmeth. isolieren</span>
<div class="a" style="left:1347px;top:294px;width:10px;height:10px;background:#3c3c3c;border:1px solid #333"></div>
<span class="t" style="left:1362px;top:293.5px;font-size:10px;color:#d0d0d0;font-weight:normal;letter-spacing:-0.45px">Aussparungsgr.</span>
<div class="a" style="left:1248px;top:310px;width:192px;height:1px;background:#3a3a3a;"></div>
<div class="a" style="left:1248px;top:311px;width:192px;height:1px;background:#555;"></div>
<svg class="a" style="left:1353px;top:314px;" width="11" height="10" viewBox="0 0 11 10"><rect width="11" height="10" fill="#8a8a8a"/><path d="M0 10L11 0" stroke="#c33" stroke-width="1.5"/></svg>
<span class="t" style="left:1382px;top:312.95px;font-size:13px;color:#cfcfcf;font-weight:bold;font-family:'Liberation Serif';font-style:italic">fx</span>
<svg class="a" style="left:1393px;top:320px;" width="4" height="3" viewBox="0 0 4 3"><path d="M0 0H4L2.0 3Z" fill="#ccc"/></svg>
<svg class="a" style="left:1412px;top:313px;" width="12" height="12" viewBox="0 0 12 12"><rect x="0" y="2" width="12" height="1.5" fill="#6a6a6a"/><rect x="4" y="0" width="4" height="2" fill="#6a6a6a"/><path d="M1.5 4H10.5L9.5 12H2.5Z" fill="#6a6a6a"/><path d="M4 5V11M6 5V11M8 5V11" stroke="#4a4a4a"/></svg>
<div class="a" style="left:1241px;top:327px;width:207px;height:2px;background:#262626;"></div>
<div class="a" style="left:1241px;top:329px;width:207px;height:16px;background:#363636;"></div>
<div class="a" style="left:1241px;top:329px;width:54px;height:16px;background:#4a4a4a;"></div>
<svg class="a" style="left:1245px;top:332.0px;" width="6" height="10" viewBox="0 0 6 10"><path d="M0.5 4L3 1L5.5 4M0.5 6L3 9L5.5 6" stroke="#dcdcdc" fill="none" stroke-width="1.1"/></svg>
<span class="t" style="left:1253px;top:332.5px;font-size:10px;color:#ececec;font-weight:bold;letter-spacing:-0.1px">Kontur</span>
<svg class="a" style="left:1429px;top:333.0px;" width="16" height="9" viewBox="0 0 16 9"><path d="M0 2H5L2.5 5Z" fill="#d6d6d6"/><rect x="6" y="0" width="10" height="1.3" fill="#d6d6d6"/><rect x="6" y="3" width="10" height="1.3" fill="#d6d6d6"/><rect x="6" y="6" width="10" height="1.3" fill="#d6d6d6"/></svg>
<span class="t" style="left:1178px;width:150px;text-align:right;top:357.5px;font-size:10px;color:#cfcfcf;letter-spacing:-0.45px">Stärke:</span>
<div class="a" style="left:1334px;top:355px;width:13px;height:15px;background:#3c3c3c;border:1px solid #2f2f2f"></div>
<svg class="a" style="left:1337px;top:357px;" width="6" height="3" viewBox="0 0 6 3"><path d="M0 3H6L3.0 0Z" fill="#e0e0e0"/></svg>
<svg class="a" style="left:1337px;top:365px;" width="6" height="3" viewBox="0 0 6 3"><path d="M0 0H6L3.0 3Z" fill="#e0e0e0"/></svg>
<div class="a" style="left:1336px;top:362px;width:9px;height:1px;background:#2a2a2a;"></div>
<div class="a" style="left:1347px;top:355px;width:47px;height:15px;background:#333;"></div>
<div class="a" style="left:1348px;top:356px;width:45px;height:13px;background:#a6a6a6;"></div>
<span class="t" style="left:1351px;top:357.5px;font-size:10px;color:#111;font-weight:normal;letter-spacing:-0.45px;">1 Pt</span>
<div class="a" style="left:1393px;top:356px;width:13px;height:13px;background:#5a5a5a;"></div>
<svg class="a" style="left:1395px;top:361px;" width="8" height="5" viewBox="0 0 8 5"><path d="M0 0H8L4.0 5Z" fill="#e6e6e6"/></svg>
<span class="t" style="left:1178px;width:150px;text-align:right;top:380.5px;font-size:10px;color:#cfcfcf;letter-spacing:-0.45px">Gehrungsgrenze:</span>
<div class="a" style="left:1334px;top:378px;width:13px;height:15px;background:#3c3c3c;border:1px solid #2f2f2f"></div>
<svg class="a" style="left:1337px;top:380px;" width="6" height="3" viewBox="0 0 6 3"><path d="M0 3H6L3.0 0Z" fill="#e0e0e0"/></svg>
<svg class="a" style="left:1337px;top:388px;" width="6" height="3" viewBox="0 0 6 3"><path d="M0 0H6L3.0 3Z" fill="#e0e0e0"/></svg>
<div class="a" style="left:1336px;top:385px;width:9px;height:1px;background:#2a2a2a;"></div>
<div class="a" style="left:1347px;top:378px;width:42px;height:15px;background:#333;"></div>
<div class="a" style="left:1348px;top:379px;width:40px;height:13px;background:#a6a6a6;"></div>
<span class="t" style="left:1351px;top:380.5px;font-size:10px;color:#111;font-weight:normal;letter-spacing:-0.45px;">4</span>
<span class="t" style="left:1394px;top:380.5px;font-size:10px;color:#cfcfcf;font-weight:normal;letter-spacing:-0.45px;">x</span>
<span class="t" style="left:1178px;width:150px;text-align:right;top:401.5px;font-size:10px;color:#cfcfcf;letter-spacing:-0.45px">Abschluss:</span>
<div class="a" style="left:1336px;top:400px;width:16px;height:16px;background:#2e2e2e;"></div>
<svg class="a" style="left:1337px;top:401px;" width="14" height="14" viewBox="0 0 14 14"><rect x="1" y="2" width="12" height="10" fill="#ccc"/><rect x="4" y="5" width="9" height="4" fill="#444"/><circle cx="4" cy="7" r="1.3" fill="#222"/></svg>
<svg class="a" style="left:1354px;top:401px;" width="14" height="14" viewBox="0 0 14 14"><rect x="1" y="2" width="12" height="10" fill="#ccc"/><rect x="4" y="5" width="9" height="4" fill="#444"/><circle cx="4" cy="7" r="1.3" fill="#222"/></svg>
<svg class="a" style="left:1371px;top:401px;" width="14" height="14" viewBox="0 0 14 14"><rect x="1" y="2" width="12" height="10" fill="#ccc"/><rect x="4" y="5" width="9" height="4" fill="#444"/><circle cx="4" cy="7" r="1.3" fill="#222"/></svg>
<span class="t" style="left:1178px;width:150px;text-align:right;top:424.5px;font-size:10px;color:#cfcfcf;letter-spacing:-0.45px">Ecke:</span>
<div class="a" style="left:1336px;top:423px;width:16px;height:16px;background:#2e2e2e;"></div>
<svg class="a" style="left:1337px;top:424px;" width="14" height="14" viewBox="0 0 14 14"><path d="M1 1H13V13H8V6H1Z" fill="#ccc"/><rect x="8" y="6" width="5" height="7" fill="#555"/><circle cx="8" cy="6" r="1.3" fill="#222"/></svg>
<svg class="a" style="left:1354px;top:424px;" width="14" height="14" viewBox="0 0 14 14"><path d="M1 1H13V13H8V6H1Z" fill="#ccc"/><rect x="8" y="6" width="5" height="7" fill="#555"/><circle cx="8" cy="6" r="1.3" fill="#222"/></svg>
<svg class="a" style="left:1371px;top:424px;" width="14" height="14" viewBox="0 0 14 14"><path d="M1 1H13V13H8V6H1Z" fill="#ccc"/><rect x="8" y="6" width="5" height="7" fill="#555"/><circle cx="8" cy="6" r="1.3" fill="#222"/></svg>
<div class="a" style="left:1248px;top:444px;width:192px;height:1px;background:#3a3a3a;"></div>
<div class="a" style="left:1248px;top:445px;width:192px;height:1px;background:#555;"></div>
<span class="t" style="left:1178px;width:150px;text-align:right;top:455.5px;font-size:10px;color:#cfcfcf;letter-spacing:-0.45px">Kontur ausrichten:</span>
<div class="a" style="left:1336px;top:453px;width:16px;height:16px;background:#2e2e2e;"></div>
<svg class="a" style="left:1337px;top:454px;" width="14" height="14" viewBox="0 0 14 14"><path d="M2 1V12H13" stroke="#ddd" stroke-width="2.5" fill="none"/><path d="M5 1V9H13" stroke="#888" stroke-width="1.5" fill="none"/></svg>
<svg class="a" style="left:1354px;top:454px;" width="14" height="14" viewBox="0 0 14 14"><path d="M2 1V12H13" stroke="#ddd" stroke-width="2.5" fill="none"/><path d="M5 1V9H13" stroke="#888" stroke-width="1.5" fill="none"/></svg>
<svg class="a" style="left:1371px;top:454px;" width="14" height="14" viewBox="0 0 14 14"><path d="M2 1V12H13" stroke="#ddd" stroke-width="2.5" fill="none"/><path d="M5 1V9H13" stroke="#888" stroke-width="1.5" fill="none"/></svg>
<div class="a" style="left:1248px;top:474px;width:192px;height:1px;background:#3a3a3a;"></div>
<div class="a" style="left:1248px;top:475px;width:192px;height:1px;background:#555;"></div>
<span class="t" style="left:1178px;width:150px;text-align:right;top:484.5px;font-size:10px;color:#cfcfcf;letter-spacing:-0.45px">Typ:</span>
<div class="a" style="left:1334px;top:482px;width:95px;height:16px;background:#333;"></div>
<div class="a" style="left:1335px;top:483px;width:93px;height:14px;background:#a6a6a6;"></div>
<div class="a" style="left:1337px;top:485px;width:89px;height:10px;background:#000;"></div>
<div class="a" style="left:1428px;top:483px;width:13px;height:14px;background:#5a5a5a;"></div>
<svg class="a" style="left:1430px;top:488px;" width="8" height="5" viewBox="0 0 8 5"><path d="M0 0H8L4.0 5Z" fill="#e6e6e6"/></svg>
<span class="t" style="left:1178px;width:150px;text-align:right;top:503.5px;font-size:10px;color:#cfcfcf;letter-spacing:-0.45px">Anfang:</span>
<div class="a" style="left:1334px;top:502px;width:95px;height:16px;background:#333;"></div>
<div class="a" style="left:1335px;top:503px;width:93px;height:14px;background:#a6a6a6;"></div>
<span class="t" style="left:1337px;top:504.5px;font-size:10px;color:#111;font-weight:normal;letter-spacing:-0.45px;">Ohne</span>
<div class="a" style="left:1428px;top:503px;width:13px;height:14px;background:#5a5a5a;"></div>
<svg class="a" style="left:1430px;top:508px;" width="8" height="5" viewBox="0 0 8 5"><path d="M0 0H8L4.0 5Z" fill="#e6e6e6"/></svg>
<span class="t" style="left:1178px;width:150px;text-align:right;top:523.5px;font-size:10px;color:#cfcfcf;letter-spacing:-0.45px">Ende:</span>
<div class="a" style="left:1334px;top:522px;width:95px;height:16px;background:#333;"></div>
<div class="a" style="left:1335px;top:523px;width:93px;height:14px;background:#a6a6a6;"></div>
<span class="t" style="left:1337px;top:524.5px;font-size:10px;color:#111;font-weight:normal;letter-spacing:-0.45px;">Ohne</span>
<div class="a" style="left:1428px;top:523px;width:13px;height:14px;background:#5a5a5a;"></div>
<svg class="a" style="left:1430px;top:528px;" width="8" height="5" viewBox="0 0 8 5"><path d="M0 0H8L4.0 5Z" fill="#e6e6e6"/></svg>
<span class="t" style="left:1178px;width:150px;text-align:right;top:543.5px;font-size:10px;color:#cfcfcf;letter-spacing:-0.45px">Farbe für Lücke:</span>
<div class="a" style="left:1334px;top:542px;width:95px;height:16px;background:#333;"></div>
<div class="a" style="left:1335px;top:543px;width:93px;height:14px;background:#9a9a9a;"></div>
<svg class="a" style="left:1337px;top:545px;" width="12" height="10" viewBox="0 0 12 10"><rect width="12" height="10" fill="#fff"/><path d="M0 10L12 0" stroke="#d00" stroke-width="2"/></svg>
<span class="t" style="left:1352px;top:544.5px;font-size:10px;color:#444;font-weight:normal;letter-spacing:-0.45px;">[Ohne]</span>
<div class="a" style="left:1428px;top:543px;width:13px;height:14px;background:#5a5a5a;"></div>
<svg class="a" style="left:1430px;top:548px;" width="8" height="5" viewBox="0 0 8 5"><path d="M0 0H8L4.0 5Z" fill="#888"/></svg>
<span class="t" style="left:1178px;width:150px;text-align:right;top:563.5px;font-size:10px;color:#cfcfcf;letter-spacing:-0.45px">Farbton für Lücke:</span>
<div class="a" style="left:1335px;top:562px;width:34px;height:16px;background:#333;"></div>
<div class="a" style="left:1336px;top:563px;width:32px;height:14px;background:#8a8a8a;"></div>
<div class="a" style="left:1368px;top:563px;width:13px;height:14px;background:#555;"></div>
<svg class="a" style="left:1373px;top:566px;" width="4" height="8" viewBox="0 0 4 8"><path d="M0 0V8L4 4.0Z" fill="#888"/></svg>
<div class="a" style="left:1545px;top:87px;width:208px;height:599px;background:#262626;"></div>
<div class="a" style="left:1546px;top:88px;width:206px;height:597px;background:#4a4a4a;"></div>
<div class="a" style="left:1546px;top:88px;width:206px;height:3px;background:#2f2f2f;"></div>
<div class="a" style="left:1546px;top:91px;width:206px;height:17px;background:#363636;"></div>
<div class="a" style="left:1546px;top:91px;width:48px;height:17px;background:#4a4a4a;"></div>
<svg class="a" style="left:1550px;top:94.5px;" width="6" height="10" viewBox="0 0 6 10"><path d="M0.5 4L3 1L5.5 4M0.5 6L3 9L5.5 6" stroke="#dcdcdc" fill="none" stroke-width="1.1"/></svg>
<span class="t" style="left:1558px;top:95.0px;font-size:10px;color:#ececec;font-weight:bold;letter-spacing:-0.1px">Seiten</span>
<div class="a" style="left:1595px;top:92px;width:47px;height:16px;background:#3a3a3a;"></div>
<span class="t" style="left:1599px;top:95.0px;font-size:10px;color:#9a9a9a;font-weight:bold;letter-spacing:-0.1px">Ebenen</span>
<div class="a" style="left:1642px;top:92px;width:47px;height:16px;background:#3a3a3a;"></div>
<span class="t" style="left:1646px;top:95.0px;font-size:10px;color:#9a9a9a;font-weight:bold;letter-spacing:-0.1px">Verknüpfı</span>
<svg class="a" style="left:1712px;top:96px;" width="10" height="8" viewBox="0 0 10 8"><path d="M0 0L4 4L0 8ZM5 0L9 4L5 8Z" fill="#dedede"/></svg>
<div class="a" style="left:1730px;top:93px;width:1px;height:13px;background:#666;"></div>
<svg class="a" style="left:1735px;top:95px;" width="16" height="9" viewBox="0 0 16 9"><path d="M0 2H5L2.5 5Z" fill="#d6d6d6"/><rect x="6" y="0" width="10" height="1.3" fill="#d6d6d6"/><rect x="6" y="3" width="10" height="1.3" fill="#d6d6d6"/><rect x="6" y="6" width="10" height="1.3" fill="#d6d6d6"/></svg>
<span class="t" style="left:1549px;top:120.5px;font-size:10px;color:#cfcfcf;font-weight:normal;letter-spacing:-0.45px">[Ohne]</span>
<div class="a" style="left:1708px;top:112px;width:24px;height:23px;background:#ffffff;"></div>
<span class="t" style="left:1549px;top:149.5px;font-size:10px;color:#cfcfcf;font-weight:normal;letter-spacing:-0.45px">A-Mustervorlage</span>
<div class="a" style="left:1708px;top:141px;width:24px;height:23px;background:#f9f3e6;"></div>
<div class="a" style="left:1741px;top:108px;width:12px;height:154px;background:#3b3b3b;"></div>
<svg class="a" style="left:1743px;top:112px;" width="8" height="5" viewBox="0 0 8 5"><path d="M0 5H8L4.0 0Z" fill="#6e6e6e"/></svg>
<svg class="a" style="left:1743px;top:253px;" width="8" height="5" viewBox="0 0 8 5"><path d="M0 0H8L4.0 5Z" fill="#6e6e6e"/></svg>
<div class="a" style="left:1546px;top:262px;width:206px;height:1px;background:#3a3a3a;"></div>
<div class="a" style="left:1546px;top:263px;width:206px;height:2px;background:#555;"></div>
<svg class="a" style="left:1574px;top:268px;" width="9" height="5" viewBox="0 0 9 5"><path d="M0 0H9L4.5 5Z" fill="#888"/></svg>
<div class="a" style="left:1562px;top:274px;width:37px;height:37px;background:#f5f1e3;"></div>
<svg class="a" style="left:1562px;top:274px;" width="37" height="37" viewBox="0 0 37 37"><text x="14" y="12" font-family="Liberation Sans" font-weight="bold" font-size="11" fill="#111">A</text><rect x="22" y="8" width="14" height="2" fill="#777"/><rect x="20" y="12" width="16" height="4" fill="#c33"/><rect x="3" y="13" width="12" height="2" fill="#999"/><circle cx="17" cy="28" r="6" fill="#d8e8e4"/><rect x="3" y="25" width="6" height="1.5" fill="#666"/><rect x="27" y="25" width="6" height="1.5" fill="#666"/></svg>
<span class="t" style="left:1576px;top:319.35px;font-size:9px;color:#cfcfcf;font-weight:normal;">1</span>
<div class="a" style="left:1562px;top:338px;width:37px;height:37px;background:#9da3a2;"></div>
<svg class="a" style="left:1562px;top:338px;" width="37" height="37" viewBox="0 0 37 37"><rect x="13" y="1" width="11" height="11" fill="#fff"/><text x="14" y="11" font-family="Liberation Sans" font-weight="bold" font-size="11" fill="#111">A</text><path d="M2 12Q8 8 14 12H2ZM22 12Q28 8 34 12H22ZM2 22Q8 18 14 22H2ZM22 22Q28 18 34 22H22Z" fill="#7d8584"/><circle cx="18" cy="32" r="3" fill="#aab8b6"/></svg>
<svg class="a" style="left:1571px;top:379px;" width="15" height="14" viewBox="0 0 15 14"><circle cx="7.5" cy="7" r="7" fill="#3e506a"/></svg>
<span class="t" style="left:1575px;top:381.5px;font-size:10px;color:#f0f0f0;font-weight:bold;">2</span>
<div class="a" style="left:1741px;top:265px;width:12px;height:391px;background:#3b3b3b;"></div>
<svg class="a" style="left:1743px;top:269px;" width="8" height="5" viewBox="0 0 8 5"><path d="M0 5H8L4.0 0Z" fill="#6e6e6e"/></svg>
<svg class="a" style="left:1743px;top:647px;" width="8" height="5" viewBox="0 0 8 5"><path d="M0 0H8L4.0 5Z" fill="#6e6e6e"/></svg>
<div class="a" style="left:1546px;top:656px;width:206px;height:1px;background:#2a2a2a;"></div>
<div class="a" style="left:1546px;top:657px;width:206px;height:19px;background:#4a4a4a;"></div>
<span class="t" style="left:1549px;top:661.5px;font-size:10px;color:#cfcfcf;font-weight:normal;letter-spacing:-0.45px">2 Seiten auf 2 Druckbög</span>
<svg class="a" style="left:1652px;top:660px;" width="17" height="13" viewBox="0 0 17 13"><path d="M1 5H6V1H10V4H13V12H1Z" fill="#d6d6d6"/><path d="M7 6V10M9 3V7" stroke="#4a4a4a"/><circle cx="15.5" cy="11.5" r="1" fill="#ddd"/></svg>
<svg class="a" style="left:1685px;top:660px;" width="12" height="12" viewBox="0 0 12 12"><path d="M2 0H12V10H4L2 12Z" fill="#d6d6d6"/><path d="M0 8H2V12Z" fill="#d6d6d6"/></svg>
<svg class="a" style="left:1714px;top:659px;" width="12" height="12" viewBox="0 0 12 12"><rect x="0" y="2" width="12" height="1.5" fill="#d6d6d6"/><rect x="4" y="0" width="4" height="2" fill="#d6d6d6"/><path d="M1.5 4H10.5L9.5 12H2.5Z" fill="#d6d6d6"/><path d="M4 5V11M6 5V11M8 5V11" stroke="#4a4a4a"/></svg>
<svg class="a" style="left:1743px;top:665px;" width="9" height="9" viewBox="0 0 9 9"><path d="M7 1h1v1h-1zM5 3h1v1h-1zM7 3h1v1h-1zM3 5h1v1h-1zM5 5h1v1h-1zM7 5h1v1h-1zM1 7h1v1h-1zM3 7h1v1h-1zM5 7h1v1h-1zM7 7h1v1h-1z" fill="#999"/></svg>
<div class="a" style="left:1546px;top:676px;width:206px;height:1px;background:#2a2a2a;"></div>
<div class="a" style="left:1546px;top:677px;width:206px;height:8px;background:#454545;"></div>
<div class="a" style="left:1639px;top:678px;width:1px;height:4px;background:#1a1a1a;"></div>
<div class="a" style="left:1641px;top:678px;width:1px;height:4px;background:#1a1a1a;"></div>
<div class="a" style="left:1643px;top:678px;width:1px;height:4px;background:#1a1a1a;"></div>
<div class="a" style="left:1645px;top:678px;width:1px;height:4px;background:#1a1a1a;"></div>
<div class="a" style="left:1647px;top:678px;width:1px;height:4px;background:#1a1a1a;"></div>
<div class="a" style="left:1649px;top:678px;width:1px;height:4px;background:#1a1a1a;"></div>
<div class="a" style="left:1651px;top:678px;width:1px;height:4px;background:#1a1a1a;"></div>
<div class="a" style="left:1653px;top:678px;width:1px;height:4px;background:#1a1a1a;"></div>
<div class="a" style="left:1655px;top:678px;width:1px;height:4px;background:#1a1a1a;"></div>
<div class="a" style="left:1657px;top:678px;width:1px;height:4px;background:#1a1a1a;"></div>
</body></html>
